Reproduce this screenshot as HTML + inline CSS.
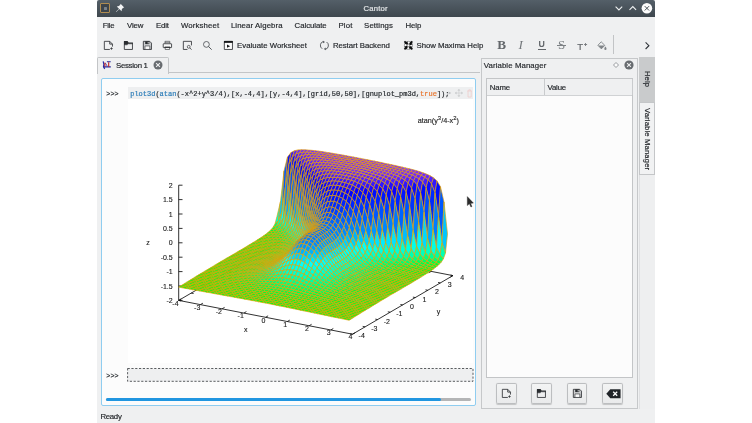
<!DOCTYPE html>
<html><head><meta charset="utf-8"><title>Cantor</title><style>
html,body{margin:0;padding:0;background:#fff}
body{width:752px;height:423px;position:relative;overflow:hidden;font-family:"Liberation Sans",sans-serif}
#root{position:absolute;left:0;top:0;width:752px;height:423px}
#win{position:absolute;left:97px;top:0;width:558px;height:423px;background:#eff0f1;border-radius:2px 2px 0 0}
#tb{position:absolute;left:97px;top:0;width:558px;height:16.6px;background:linear-gradient(#545f68,#3e474e);border-radius:2px 2px 0 0}
#appicon{position:absolute;left:100.4px;top:3px;width:9.5px;height:10px;box-sizing:border-box;border:.8px solid #b08c50;background:#3c444b;border-radius:1px}
#appicon:after{content:"";position:absolute;left:2.4px;top:3.4px;width:3.4px;height:2.4px;background:#7a828a;border-radius:.6px}
.t{will-change:opacity;-webkit-text-stroke:.18px;position:absolute;white-space:nowrap;line-height:12px;font-family:"Liberation Sans",sans-serif}
.r{position:absolute}
.i{position:absolute;overflow:visible}
.v{writing-mode:vertical-rl;line-height:12px}
.f{color:#2a7cb8}.k{color:#e8742c}
.btn{width:20.8px;height:20.6px;box-sizing:border-box;border:.9px solid #bcbec0;border-radius:1.8px;background:linear-gradient(#f3f4f4,#e9eaeb);box-shadow:0 .6px .8px rgba(0,0,0,.18)}
.q0{fill:#00ff12}.q1{fill:#00ff1a}.q2{fill:#00ff28}.q3{fill:#00ff39}.q4{fill:#00ff4c}.q5{fill:#00ff60}.q6{fill:#00ff73}.q7{fill:#00ff83}.q8{fill:#00ff93}.q9{fill:#00ffa3}.qa{fill:#00ffb3}.qb{fill:#00ffbf}.qc{fill:#00ffc8}.qd{fill:#00ffd1}.qe{fill:#00ffda}.qf{fill:#00ffe4}.q10{fill:#00ffed}.q11{fill:#00fff6}.q12{fill:#00ffff}.q13{fill:#00f6ff}.q14{fill:#00edff}.q15{fill:#00e3ff}.q16{fill:#00d9ff}.q17{fill:#00d0ff}.q18{fill:#00c6ff}.q19{fill:#00bcff}.q1a{fill:#00b3ff}.q1b{fill:#00a9ff}.q1c{fill:#009fff}.q1d{fill:#0096ff}.q1e{fill:#008cff}.q1f{fill:#0087ff}.q20{fill:#0082ff}.q21{fill:#007dff}.q22{fill:#0078ff}.q23{fill:#0074ff}.q24{fill:#006fff}.q25{fill:#006aff}.q26{fill:#0065ff}.q27{fill:#005fff}.q28{fill:#0059ff}.q29{fill:#0053ff}.q2a{fill:#004dff}.q2b{fill:#0047ff}.q2c{fill:#0041ff}.q2d{fill:#003bff}.q2e{fill:#0035ff}.q2f{fill:#002fff}.q30{fill:#002aff}.q31{fill:#0025ff}.q32{fill:#0020ff}.q33{fill:#001bff}.q34{fill:#0016ff}.q35{fill:#0011ff}.q36{fill:#000cff}.q37{fill:#0007ff}.q38{fill:#0103ff}.q39{fill:#0705ff}.q3a{fill:#1008ff}.q3b{fill:#1b0cff}.q3c{fill:#2610ff}.q3d{fill:#3114ff}.q3e{fill:#3c18ff}.q3f{fill:#471cff}.q40{fill:#5120ff}.q41{fill:#5b24ff}.q42{fill:#6627ff}.q43{fill:#702bff}.q44{fill:#792eff}.q45{fill:#8331ff}.q46{fill:#8c35ff}.q47{fill:#9638ff}</style></head><body><div id="win"></div>
<div id="tb"></div>
<div id="appicon"></div>
<svg class="i" style="left:115px;top:3px" width="10" height="10" viewBox="0 0 10 10"><path d="M5.6 .8 9.2 4.4 8.3 4.7 6.9 6.1 6.6 8.2 4.3 5.9 1.2 9 .9 8.8 4 5.7 1.8 3.4 3.9 3.1 5.3 1.7z" fill="#f2f3f4"/></svg>
<div class="t" style="left:363.60px;top:2.60px;font-size:7.70px;letter-spacing:0.178px;color:#e6e8ea;">Cantor</div>
<svg class="i" style="left:610px;top:0" width="45" height="17" viewBox="0 0 45 17"><path d="M5.6 6.6 8.9 9.9 12.2 6.6" fill="none" stroke="#eef0f1" stroke-width="1.1"/><path d="M19.5 9.9 22.8 6.6 26.1 9.9" fill="none" stroke="#eef0f1" stroke-width="1.1"/><circle cx="36.9" cy="8.3" r="5.3" fill="#fcfcfc"/><path d="M34.7 6.1 39.1 10.5M39.1 6.1 34.7 10.5" stroke="#3b434a" stroke-width=".9"/></svg>
<div class="t" style="left:102.70px;top:20.30px;font-size:7.80px;letter-spacing:-0.223px;color:#25282c;">File</div>
<div class="t" style="left:127.10px;top:20.30px;font-size:7.80px;letter-spacing:-0.155px;color:#25282c;">View</div>
<div class="t" style="left:156.00px;top:20.30px;font-size:7.80px;letter-spacing:-0.180px;color:#25282c;">Edit</div>
<div class="t" style="left:180.90px;top:20.30px;font-size:7.80px;letter-spacing:0.145px;color:#25282c;">Worksheet</div>
<div class="t" style="left:230.90px;top:20.30px;font-size:7.80px;letter-spacing:0.107px;color:#25282c;">Linear Algebra</div>
<div class="t" style="left:294.60px;top:20.30px;font-size:7.80px;letter-spacing:-0.052px;color:#25282c;">Calculate</div>
<div class="t" style="left:338.40px;top:20.30px;font-size:7.80px;letter-spacing:0.186px;color:#25282c;">Plot</div>
<div class="t" style="left:364.10px;top:20.30px;font-size:7.80px;letter-spacing:0.088px;color:#25282c;">Settings</div>
<div class="t" style="left:405.50px;top:20.30px;font-size:7.80px;letter-spacing:-0.047px;color:#25282c;">Help</div>
<svg class="i" style="left:103.90px;top:40.90px" width="8.8" height="8.8" viewBox="0 0 16 16"><path d="M.6 .6H10.4L15.4 5.6V10.2M10.6 15.4H.6V.6M10.4 .6V5.6H15.4" fill="none" stroke="#2a2d30" stroke-width="1.5"/><path d="M13.6 11.4V16M11.3 13.7H15.9" stroke="#2a2d30" stroke-width="1.3"/></svg>
<svg class="i" style="left:123.65px;top:40.90px" width="8.8" height="8.8" viewBox="0 0 16 16"><path d="M.6 .6V15.4H15.4V3.4" fill="none" stroke="#2a2d30" stroke-width="1.5"/><path d="M0 0H6.4L8.4 2.6H16V5.2H7.6L5.6 7H0z" fill="#2a2d30"/><path d="M.6 7H5.8L7.8 5.2H15.4" fill="none" stroke="#2a2d30" stroke-width=".9"/></svg>
<svg class="i" style="left:143.45px;top:40.90px" width="8.8" height="8.8" viewBox="0 0 16 16"><path d="M.6 .6H12.2L15.4 3.8V15.4H.6z" fill="#8e9194" fill-opacity=".35" stroke="#2a2d30" stroke-width="1.5"/><path d="M4 .6H11.4V5.6H4z" fill="#2a2d30"/><path d="M8.6 1.6H10.2V4.6H8.6z" fill="#f4f5f5"/><path d="M3.6 9H12.4V15.4H3.6z" fill="#fafafa" stroke="#2a2d30" stroke-width="1.1"/></svg>
<svg class="i" style="left:163.05px;top:40.90px" width="8.8" height="8.8" viewBox="0 0 16 16"><path d="M3.6 4.6V.6H12.4V4.6" fill="#fafafa" stroke="#2a2d30" stroke-width="1.1"/><path d="M3.6 2.8H12.4" stroke="#2a2d30" stroke-width=".9"/><path d="M1 5H15Q15.6 5 15.6 5.6V11.4Q15.6 12 15 12H1Q.4 12 .4 11.4V5.6Q.4 5 1 5z" fill="#fafafa" stroke="#2a2d30" stroke-width="1.5"/><path d="M3 10.2H13V12.8H3z" fill="#2a2d30"/><path d="M4 12.6V15.4H12V12.6" fill="#fafafa" stroke="#2a2d30" stroke-width="1.1"/></svg>
<svg class="i" style="left:182.90px;top:40.90px" width="8.8" height="8.8" viewBox="0 0 16 16"><path d="M8 15.4H.6V.6H15.4V8" fill="none" stroke="#2a2d30" stroke-width="1.5"/><circle cx="10.4" cy="10.6" r="2.6" fill="none" stroke="#2a2d30" stroke-width="1.2"/><path d="M12.3 12.5 15.6 15.8" stroke="#2a2d30" stroke-width="1.4"/></svg>
<svg class="i" style="left:202.60px;top:40.90px" width="8.8" height="8.8" viewBox="0 0 16 16"><circle cx="6.2" cy="6.2" r="5.3" fill="none" stroke="#4a4e52" stroke-width="1.5"/><path d="M10 10 15.8 15.8" stroke="#4a4e52" stroke-width="1.7"/></svg>
<svg class="i" style="left:223.90px;top:40.90px" width="8.8" height="8.8" viewBox="0 0 16 16"><path d="M.6 .6H15.4V15.4H.6z" fill="#fcfcfc" stroke="#2a2d30" stroke-width="1.5"/><path d="M0 0H16V3.4H0z" fill="#17191b"/><path d="M5.4 6.4 11.2 9.4 5.4 12.4z" fill="#17191b"/></svg>
<svg class="i" style="left:319.80px;top:40.90px" width="8.8" height="8.8" viewBox="0 0 16 16"><g fill="none" stroke="#4c5054" stroke-width="1.6"><path d="M6.1 .9A7.3 7.3 0 0 0 4 14.1"/><path d="M9.9 15.1A7.3 7.3 0 0 0 12 1.9"/></g><path d="M5.2 -.6 9.2 1.6 5.6 4z" fill="#55595d"/><path d="M10.8 16.6 6.8 14.4 10.4 12z" fill="#55595d"/></svg>
<svg class="i" style="left:403.60px;top:40.90px" width="8.8" height="8.8" viewBox="0 0 16 16"><circle cx="8" cy="8" r="7.3" fill="#fdfdfd" stroke="#606366" stroke-width="1.1"/><circle cx="8" cy="8" r="5" fill="none" stroke="#0c0d0e" stroke-width="4.8" stroke-dasharray="4.363 3.491" transform="rotate(20 8 8)"/><path d="M.8 .8 3.6 3.6M15.2 .8 12.4 3.6M.8 15.2 3.6 12.4M15.2 15.2 12.4 12.4" stroke="#0c0d0e" stroke-width="3.2"/><circle cx="8" cy="8" r="2.5" fill="#fdfdfd" stroke="#1c1d1e" stroke-width="1.1"/></svg>
<div class="t" style="left:237.10px;top:40.40px;font-size:7.80px;letter-spacing:0.008px;color:#25282c;">Evaluate Worksheet</div>
<div class="t" style="left:332.90px;top:40.40px;font-size:7.80px;letter-spacing:-0.047px;color:#25282c;">Restart Backend</div>
<div class="t" style="left:416.50px;top:40.40px;font-size:7.80px;letter-spacing:-0.026px;color:#25282c;">Show Maxima Help</div>
<div class="t" style="left:497.2px;top:36.3px;font:bold 13.2px/18px 'Liberation Serif',serif;color:#63676b;-webkit-text-stroke:0">B</div>
<div class="t" style="left:518.6px;top:36.3px;font:italic 13.2px/18px 'Liberation Serif',serif;color:#74787c;-webkit-text-stroke:0">I</div>
<div class="t" style="left:538.5px;top:38.3px;font:bold 8.8px/12px 'Liberation Sans',sans-serif;color:#63676b;-webkit-text-stroke:0">U</div><div class="r" style="left:537.9px;top:49.2px;width:7.8px;height:.8px;background:#63676b"></div>
<div class="t" style="left:557.9px;top:36.2px;font:13px/18px 'Liberation Serif',serif;color:#7c8084;-webkit-text-stroke:0">S</div><div class="r" style="left:557px;top:45.1px;width:8.8px;height:.8px;background:#7c8084"></div>
<div class="t" style="left:577.2px;top:40.1px;font:9.6px/14px 'Liberation Sans',sans-serif;color:#63676b;-webkit-text-stroke:.2px">T</div><div class="t" style="left:583.9px;top:39.7px;font:bold 5.5px/8px 'Liberation Sans',sans-serif;color:#63676b">+</div>
<svg class="i" style="left:596.6px;top:40.6px" width="10" height="10" viewBox="0 0 10 10"><path d="M4.2 .8 7.8 4.4 4.4 7.8 .9 4.3z" fill="none" stroke="#808488" stroke-width=".9"/><path d="M1 4.6H7.6L4.4 7.9z" fill="#808488"/><path d="M8.4 5.6C9.2 6.7 9.5 7.3 9.5 7.9A1.1 1.1 0 0 1 7.3 7.9C7.3 7.3 7.6 6.7 8.4 5.6z" fill="#808488"/></svg>
<div class="r" style="left:613.1px;top:35.4px;width:.8px;height:19px;background:#c2c4c6"></div>
<svg class="i" style="left:643px;top:41px" width="8" height="10" viewBox="0 0 8 10"><path d="M2.6 1.4 5.9 4.7 2.6 8" fill="none" stroke="#2e3338" stroke-width="1.1"/></svg>
<div class="r" style="left:97px;top:72.4px;width:382.5px;height:.9px;background:#c3c5c7"></div>
<div class="r" style="left:97.4px;top:57.4px;width:69.6px;height:16px;background:#eff0f1;border:.9px solid #c3c5c7;border-bottom:none;border-radius:1.8px 1.8px 0 0"></div>
<svg class="i" style="left:102.2px;top:60.9px" width="9" height="8.2" viewBox="0 0 9 8.2"><g fill="none"><path d="M1.2 .4 1.9 3.4 1.5 5.6 2.7 7.9" stroke="#2b2ba4" stroke-width="1.25"/><path d="M4.9 .8H8.7M1.6 5.9H8.8" stroke="#24249a" stroke-width="1.05"/><path d="M3.2 1.8 5.4 5.4" stroke="#4a3aa8" stroke-width=".9"/><path d="M2.9 1.8V5.4M6.7 1.2V5.8" stroke="#c0201e" stroke-width="1.1"/></g></svg>
<div class="t" style="left:116.00px;top:60.40px;font-size:7.80px;letter-spacing:-0.294px;color:#25282c;">Session 1</div>
<svg class="i" style="left:152.4px;top:59.4px" width="12" height="12" viewBox="0 0 12 12"><circle cx="6" cy="6" r="4.5" fill="#686c70"/><path d="M4.1 4.1 7.9 7.9M7.9 4.1 4.1 7.9" stroke="#eff0f1" stroke-width="1.05"/></svg>
<div class="r" style="left:100.9px;top:78.3px;width:375.2px;height:327.4px;background:#fcfcfc;border:1px solid #8fcdf0;border-radius:2px;box-sizing:border-box"></div>
<div class="r" style="left:128px;top:99.2px;width:345px;height:264px;background:#fff"></div>
<div class="r" style="left:128px;top:86.5px;width:345px;height:12.7px;background:#eeeff0"></div>
<div class="t" style="left:106.3px;top:87.6px;font-size:6.8px;letter-spacing:.05px;color:#24282c;font-family:'Liberation Mono',monospace;">&gt;&gt;&gt;</div>
<div class="t" id="cmd" style="left:130.2px;top:87.6px;font-size:7.012px;color:#24282c;font-family:'Liberation Mono',monospace;"><span class="f">plot3d</span>(<span class="f">atan</span>(-x^2+y^3/4),[x,-4,4],[y,-4,4],[grid,50,50],[gnuplot_pm3d,<span class="k">true</span>]);</div>
<svg class="i" style="left:446px;top:88px" width="28" height="10" viewBox="0 0 28 10" opacity=".55"><path d="M2.6 3.4 5.4 5 2.6 6.6z" fill="#9a9da0"/><path d="M12.9 1.6V8.4M9.5 5H16.3M12.9 1.2 11.9 2.4H13.9zM12.9 8.8 11.9 7.6H13.9zM9.1 5 10.3 4V6zM16.7 5 15.5 4V6z" stroke="#b4b6b8" stroke-width=".7" fill="#b4b6b8"/><path d="M21.2 3H26M22 3V9H25.2V3M22.8 3V1.8H24.4V3" fill="none" stroke="#f0b4b0" stroke-width=".8"/></svg>
<div class="t" style="left:106.3px;top:370.1px;font-size:6.8px;letter-spacing:.05px;color:#24282c;font-family:'Liberation Mono',monospace;">&gt;&gt;&gt;</div>
<svg class="i" style="left:126px;top:367px" width="350" height="16" viewBox="0 0 350 16"><rect x="1.6" y="1.5" width="345.4" height="12.8" fill="#eeeff0" stroke="#33373b" stroke-width=".8" stroke-dasharray="2.2 1.6"/></svg>
<div class="r" style="left:105.6px;top:397.6px;width:365.5px;height:3.1px;border-radius:1.6px;background:#b4b5b6"></div>
<div class="r" style="left:105.6px;top:397.5px;width:335.6px;height:3.3px;border-radius:1.7px;background:#2196e0"></div>
<svg class="i" style="left:0;top:0" width="752" height="423" viewBox="0 0 752 423"><defs><filter id="sb" x="-2%" y="-2%" width="104%" height="104%"><feGaussianBlur stdDeviation="3.2"/></filter></defs>
<g stroke="#0d0d0d" stroke-width="0.85" fill="none" stroke-linecap="butt">
<path d="M178.7 300.4L352.5 334.2L452.9 275.6L279.1 241.8z"/>
<line x1="178.7" y1="300.4" x2="178.7" y2="185.2"/>
<line x1="178.7" y1="300.4" x2="182.5" y2="300.4"/>
<line x1="178.7" y1="286.0" x2="182.5" y2="286.0"/>
<line x1="178.7" y1="271.6" x2="182.5" y2="271.6"/>
<line x1="178.7" y1="257.2" x2="182.5" y2="257.2"/>
<line x1="178.7" y1="242.8" x2="182.5" y2="242.8"/>
<line x1="178.7" y1="228.4" x2="182.5" y2="228.4"/>
<line x1="178.7" y1="214.0" x2="182.5" y2="214.0"/>
<line x1="178.7" y1="199.6" x2="182.5" y2="199.6"/>
<line x1="178.7" y1="185.2" x2="182.5" y2="185.2"/>
<line x1="178.7" y1="300.4" x2="181.2" y2="298.9"/>
<line x1="279.1" y1="241.8" x2="276.5" y2="243.2"/>
<line x1="352.5" y1="334.2" x2="350.2" y2="333.8"/>
<line x1="178.7" y1="300.4" x2="181.0" y2="300.9"/>
<line x1="200.4" y1="304.6" x2="202.9" y2="303.2"/>
<line x1="300.8" y1="246.0" x2="298.3" y2="247.5"/>
<line x1="365.1" y1="326.9" x2="362.7" y2="326.4"/>
<line x1="191.2" y1="293.1" x2="193.6" y2="293.5"/>
<line x1="222.1" y1="308.8" x2="224.6" y2="307.4"/>
<line x1="322.5" y1="250.2" x2="320.0" y2="251.7"/>
<line x1="377.6" y1="319.6" x2="375.3" y2="319.1"/>
<line x1="203.8" y1="285.7" x2="206.1" y2="286.2"/>
<line x1="243.9" y1="313.1" x2="246.4" y2="311.6"/>
<line x1="344.3" y1="254.5" x2="341.8" y2="255.9"/>
<line x1="390.2" y1="312.2" x2="387.8" y2="311.8"/>
<line x1="216.3" y1="278.4" x2="218.7" y2="278.9"/>
<line x1="265.6" y1="317.3" x2="268.1" y2="315.8"/>
<line x1="366.0" y1="258.7" x2="363.5" y2="260.2"/>
<line x1="402.7" y1="304.9" x2="400.4" y2="304.5"/>
<line x1="228.9" y1="271.1" x2="231.2" y2="271.5"/>
<line x1="287.3" y1="321.5" x2="289.8" y2="320.1"/>
<line x1="387.7" y1="262.9" x2="385.2" y2="264.4"/>
<line x1="415.3" y1="297.6" x2="412.9" y2="297.1"/>
<line x1="241.4" y1="263.8" x2="243.8" y2="264.2"/>
<line x1="309.1" y1="325.8" x2="311.6" y2="324.3"/>
<line x1="409.5" y1="267.2" x2="407.0" y2="268.6"/>
<line x1="427.8" y1="290.3" x2="425.5" y2="289.8"/>
<line x1="254.0" y1="256.4" x2="256.3" y2="256.9"/>
<line x1="330.8" y1="330.0" x2="333.3" y2="328.5"/>
<line x1="431.2" y1="271.4" x2="428.7" y2="272.8"/>
<line x1="440.4" y1="282.9" x2="438.0" y2="282.5"/>
<line x1="266.5" y1="249.1" x2="268.9" y2="249.6"/>
<line x1="352.5" y1="334.2" x2="355.1" y2="332.8"/>
<line x1="452.9" y1="275.6" x2="450.4" y2="277.1"/>
<line x1="452.9" y1="275.6" x2="450.6" y2="275.1"/>
<line x1="279.1" y1="241.8" x2="281.4" y2="242.2"/>
</g>
<g transform="scale(.1)" filter="url(#sb)" stroke="#e69f00" stroke-width="6.4" stroke-opacity="1.0" stroke-linejoin="round">
<path class="qd" d="M2750 2238l35-32 20-192-35 149z"/>
<path class="q18" d="M2785 2206l35-90 20-407-35 305z"/>
<path class="q6" d="M2730 2273l35-10 20-57-35 32z"/>
<path class="q28" d="M2820 2116l35-250 20-296-35 139z"/>
<path class="qa" d="M2765 2263l35-24 20-123-35 90z"/>
<path class="q36" d="M2855 1866l34-222 21-119-35 45z"/>
<path class="q4" d="M2710 2297l35-3 20-31-35 10z"/>
<path class="q13" d="M2800 2239l35-60 20-313-35 250z"/>
<path class="q3d" d="M2889 1644l35-75 20-62-34 18z"/>
<path class="q6" d="M2745 2294l35-9 20-46-35 24z"/>
<path class="q21" d="M2835 2179l34-169 20-366-34 222z"/>
<path class="q40" d="M2924 1569l35-29 20-41-35 8z"/>
<path class="q3" d="M2690 2316l35 0 20-22-35 3z"/>
<path class="q9" d="M2780 2285l35-19 20-87-35 60z"/>
<path class="q30" d="M2869 2010l35-268 20-173-35 75z"/>
<path class="q42" d="M2959 1540l35-12 20-31-35 2z"/>
<path class="q4" d="M2725 2316l35-3 20-28-35 9z"/>
<path class="qf" d="M2815 2266l34-44 20-212-34 169z"/>
<path class="q3a" d="M2904 1742l35-121 20-81-35 29z"/>
<path class="q3" d="M2670 2333l35 1 20-18-35 0z"/>
<path class="q43" d="M2994 1528l35-5 20-25-35-1z"/>
<path class="q6" d="M2760 2313l34-7 21-40-35 19z"/>
<path class="q1b" d="M2849 2222l35-113 20-367-35 268z"/>
<path class="q3f" d="M2939 1621l35-44 20-49-35 12z"/>
<path class="q3" d="M2705 2334l35 0 20-21-35 3z"/>
<path class="q43" d="M3029 1523l34-1 20-22-34-2z"/>
<path class="q8" d="M2794 2306l35-16 20-68-34 44z"/>
<path class="q2a" d="M2884 2109l35-248 20-240-35 121z"/>
<path class="q3" d="M2650 2348l35 2 20-16-35-1z"/>
<path class="q41" d="M2974 1577l35-18 20-36-35 5z"/>
<path class="q4" d="M2740 2334l34-2 20-26-34 7z"/>
<path class="q44" d="M3063 1522l35 1 20-20-35-3z"/>
<path class="qc" d="M2829 2290l35-34 20-147-35 113z"/>
<path class="q36" d="M2919 1861l35-176 20-108-35 44z"/>
<path class="q3" d="M2685 2350l35 2 20-18-35 0z"/>
<path class="q42" d="M3009 1559l34-8 20-29-34 1z"/>
<path class="q5" d="M2774 2332l35-7 20-35-35 16z"/>
<path class="q44" d="M3098 1523l35 3 20-19-35-4z"/>
<path class="q16" d="M2864 2256l35-82 20-313-35 248z"/>
<path class="q2" d="M2630 2362l35 3 20-15-35-2z"/>
<path class="q3d" d="M2954 1685l34-66 21-60-35 18z"/>
<path class="q3" d="M2720 2352l34 0 20-20-34 2z"/>
<path class="q43" d="M3043 1551l35-4 20-24-35-1z"/>
<path class="q7" d="M2809 2325l35-14 20-55-35 34z"/>
<path class="q44" d="M3133 1526l35 3 20-18-35-4z"/>
<path class="q25" d="M2899 2174l35-197 20-292-35 176z"/>
<path class="q3" d="M2665 2365l34 3 21-16-35-2z"/>
<path class="q40" d="M2988 1619l35-27 20-41-34 8z"/>
<path class="q4" d="M2754 2352l35-2 20-25-35 7z"/>
<path class="q43" d="M3078 1547l35 0 20-21-35-3z"/>
<path class="qb" d="M2844 2311l35-28 20-109-35 82z"/>
<path class="q45" d="M3168 1529l34 4 21-17-35-5z"/>
<path class="q2" d="M2610 2375l35 4 20-14-35-3z"/>
<path class="q32" d="M2934 1977l34-216 20-142-34 66z"/>
<path class="q3" d="M2699 2368l35 1 20-17-34 0z"/>
<path class="q41" d="M3023 1592l35-13 20-32-35 4z"/>
<path class="q5" d="M2789 2350l35-6 20-33-35 14z"/>
<path class="q44" d="M3113 1547l35 2 20-20-35-3z"/>
<path class="q13" d="M2879 2283l34-63 21-243-35 197z"/>
<path class="q45" d="M3202 1533l35 5 20-16-34-6z"/>
<path class="q2" d="M2645 2379l34 3 20-14-34-3z"/>
<path class="q3a" d="M2968 1761l35-94 20-75-35 27z"/>
<path class="q4" d="M2734 2369l35 0 20-19-35 2z"/>
<path class="q42" d="M3058 1579l35-5 20-27-35 0z"/>
<path class="q7" d="M2824 2344l35-13 20-48-35 28z"/>
<path class="q44" d="M3148 1549l34 3 20-19-34-4z"/>
<path class="q2" d="M2590 2388l34 5 21-14-35-4z"/>
<path class="q20" d="M2913 2220l35-151 20-308-34 216z"/>
<path class="q45" d="M3237 1538l35 5 20-16-35-5z"/>
<path class="q3" d="M2679 2382l35 3 20-16-35-1z"/>
<path class="q3e" d="M3003 1667l35-39 20-49-35 13z"/>
<path class="q4" d="M2769 2369l35-2 20-23-35 6z"/>
<path class="q43" d="M3093 1574l35-1 20-24-35-2z"/>
<path class="qa" d="M2859 2331l34-25 20-86-34 63z"/>
<path class="q44" d="M3182 1552l35 4 20-18-35-5z"/>
<path class="q2" d="M2624 2393l35 3 20-14-34-3z"/>
<path class="q2e" d="M2948 2069l35-223 20-179-35 94z"/>
<path class="q45" d="M3272 1543l35 6 20-16-35-6z"/>
<path class="q3" d="M2714 2385l35 1 20-17-35 0z"/>
<path class="q40" d="M3038 1628l35-18 20-36-35 5z"/>
<path class="q5" d="M2804 2367l35-6 20-30-35 13z"/>
<path class="q43" d="M3128 1573l34 0 20-21-34-3z"/>
<path class="q2" d="M2570 2401l34 5 20-13-34-5z"/>
<path class="q10" d="M2893 2306l35-52 20-185-35 151z"/>
<path class="q44" d="M3217 1556l35 4 20-17-35-5z"/>
<path class="q2" d="M2659 2396l35 4 20-15-35-3z"/>
<path class="q38" d="M2983 1846l35-126 20-92-35 39z"/>
<path class="q45" d="M3307 1549l35 5 20-15-35-6z"/>
<path class="q4" d="M2749 2386l35 0 20-19-35 2z"/>
<path class="q42" d="M3073 1610l34-8 21-29-35 1z"/>
<path class="q7" d="M2839 2361l34-11 20-44-34 25z"/>
<path class="q44" d="M3162 1573l35 3 20-20-35-4z"/>
<path class="q2" d="M2604 2406l35 4 20-14-35-3z"/>
<path class="q1c" d="M2928 2254l35-118 20-290-35 223z"/>
<path class="q45" d="M3252 1560l35 5 20-16-35-6z"/>
<path class="q3" d="M2694 2400l35 2 20-16-35-1z"/>
<path class="q3d" d="M3018 1720l35-53 20-57-35 18z"/>
<path class="q45" d="M3342 1554l34 6 20-15-34-6z"/>
<path class="q4" d="M2784 2386l34-2 21-23-35 6z"/>
<path class="q42" d="M3107 1602l35-3 20-26-34 0z"/>
<path class="q2" d="M2550 2414l34 5 20-13-34-5z"/>
<path class="qa" d="M2873 2350l35-23 20-73-35 52z"/>
<path class="q44" d="M3197 1576l35 3 20-19-35-4z"/>
<path class="q2" d="M2639 2410l35 3 20-13-35-4z"/>
<path class="q29" d="M2963 2136l35-205 20-211-35 126z"/>
<path class="q45" d="M3287 1565l35 6 20-17-35-5z"/>
<path class="q3" d="M2729 2402l35 1 20-17-35 0z"/>
<path class="q3f" d="M3053 1667l34-24 20-41-34 8z"/>
<path class="q45" d="M3376 1560l35 6 20-15-35-6z"/>
<path class="q5" d="M2818 2384l35-6 20-28-34 11z"/>
<path class="q43" d="M3142 1599l35 0 20-23-35-3z"/>
<path class="q2" d="M2584 2419l35 4 20-13-35-4z"/>
<path class="qf" d="M2908 2327l35-46 20-145-35 118z"/>
<path class="q44" d="M3232 1579l35 4 20-18-35-5z"/>
<path class="q3" d="M2674 2413l35 3 20-14-35-2z"/>
<path class="q34" d="M2998 1931l35-152 20-112-35 53z"/>
<path class="q45" d="M3322 1571l34 5 20-16-34-6z"/>
<path class="q4" d="M2764 2403l34 0 20-19-34 2z"/>
<path class="q41" d="M3087 1643l35-11 20-33-35 3z"/>
<path class="q45" d="M3411 1566l35 6 20-14-35-7z"/>
<path class="q2" d="M2529 2426l35 5 20-12-34-5z"/>
<path class="q7" d="M2853 2378l35-11 20-40-35 23z"/>
<path class="q43" d="M3177 1599l35 1 20-21-35-3z"/>
<path class="q2" d="M2619 2423l35 4 20-14-35-3z"/>
<path class="q19" d="M2943 2281l35-96 20-254-35 205z"/>
<path class="q44" d="M3267 1583l34 5 21-17-35-6z"/>
<path class="q3" d="M2709 2416l35 2 20-15-35-1z"/>
<path class="q3b" d="M3033 1779l34-69 20-67-34 24z"/>
<path class="q45" d="M3356 1576l35 6 20-16-35-6z"/>
<path class="q5" d="M2798 2403l35-3 20-22-35 6z"/>
<path class="q42" d="M3122 1632l35-6 20-27-35 0z"/>
<path class="q45" d="M3446 1572l35 7 20-15-35-6z"/>
<path class="q2" d="M2564 2431l35 5 20-13-35-4z"/>
<path class="qa" d="M2888 2367l35-22 20-64-35 46z"/>
<path class="q44" d="M3212 1600l35 3 20-20-35-4z"/>
<path class="q2" d="M2654 2427l35 3 20-14-35-3z"/>
<path class="q26" d="M2978 2185l34-179 21-227-35 152z"/>
<path class="q44" d="M3301 1588l35 5 20-17-34-5z"/>
<path class="q3" d="M2744 2418l34 1 20-16-34 0z"/>
<path class="q3e" d="M3067 1710l35-32 20-46-35 11z"/>
<path class="q45" d="M3391 1582l35 6 20-16-35-6z"/>
<path class="q2" d="M2509 2439l35 5 20-13-35-5z"/>
<path class="q6" d="M2833 2400l35-6 20-27-35 11z"/>
<path class="q42" d="M3157 1626l35-1 20-25-35-1z"/>
<path class="q45" d="M3481 1579l35 6 20-14-35-7z"/>
<path class="q2" d="M2599 2436l35 4 20-13-35-4z"/>
<path class="qe" d="M2923 2345l35-41 20-119-35 96z"/>
<path class="q44" d="M3247 1603l34 4 20-19-34-5z"/>
<path class="q3" d="M2689 2430l34 3 21-15-35-2z"/>
<path class="q31" d="M3012 2006l35-166 20-130-34 69z"/>
<path class="q45" d="M3336 1593l35 5 20-16-35-6z"/>
<path class="q4" d="M2778 2419l35 0 20-19-35 3z"/>
<path class="q40" d="M3102 1678l35-15 20-37-35 6z"/>
<path class="q45" d="M3426 1588l35 6 20-15-35-7z"/>
<path class="q2" d="M2544 2444l35 4 20-12-35-5z"/>
<path class="q7" d="M2868 2394l35-12 20-37-35 22z"/>
<path class="q43" d="M3192 1625l35 0 20-22-35-3z"/>
<path class="q45" d="M3516 1585l34 7 20-15-34-6z"/>
<path class="q2" d="M2634 2440l35 3 20-13-35-3z"/>
<path class="q16" d="M2958 2304l34-84 20-214-34 179z"/>
<path class="q44" d="M3281 1607l35 4 20-18-35-5z"/>
<path class="q3" d="M2723 2433l35 1 20-15-34-1z"/>
<path class="q39" d="M3047 1840l35-85 20-77-35 32z"/>
<path class="q45" d="M3371 1598l35 6 20-16-35-6z"/>
<path class="q2" d="M2489 2451l35 5 20-12-35-5z"/>
<path class="q5" d="M2813 2419l35-4 20-21-35 6z"/>
<path class="q41" d="M3137 1663l35-8 20-30-35 1z"/>
<path class="q45" d="M3461 1594l34 6 21-15-35-6z"/>
<path class="q2" d="M2579 2448l35 5 20-13-35-4z"/>
<path class="qa" d="M2903 2382l35-21 20-57-35 41z"/>
<path class="q43" d="M3227 1625l34 3 20-21-34-4z"/>
<path class="q45" d="M3550 1592l35 6 20-14-35-7z"/>
<path class="q3" d="M2669 2443l34 4 20-14-34-3z"/>
<path class="q22" d="M2992 2220l35-154 20-226-35 166z"/>
<path class="q44" d="M3316 1611l35 5 20-18-35-5z"/>
<path class="q4" d="M2758 2434l35 1 20-16-35 0z"/>
<path class="q3c" d="M3082 1755l35-40 20-52-35 15z"/>
<path class="q45" d="M3406 1604l35 6 20-16-35-6z"/>
<path class="q2" d="M2524 2456l35 5 20-13-35-4z"/>
<path class="q6" d="M2848 2415l35-6 20-27-35 12z"/>
<path class="q42" d="M3172 1655l34-3 21-27-35 0z"/>
<path class="q45" d="M3495 1600l35 7 20-15-34-7z"/>
<path class="q2" d="M2614 2453l35 3 20-13-35-3z"/>
<path class="qe" d="M2938 2361l34-39 20-102-34 84z"/>
<path class="q43" d="M3261 1628l35 3 20-20-35-4z"/>
<path class="q45" d="M3585 1598l35 7 20-14-35-7z"/>
<path class="q3" d="M2703 2447l35 2 20-15-35-1z"/>
<path class="q2e" d="M3027 2066l35-166 20-145-35 85z"/>
<path class="q44" d="M3351 1616l35 5 20-17-35-6z"/>
<path class="q2" d="M2469 2463l35 5 20-12-35-5z"/>
<path class="q4" d="M2793 2435l35-1 20-19-35 4z"/>
<path class="q3f" d="M3117 1715l35-20 20-40-35 8z"/>
<path class="q45" d="M3441 1610l34 6 20-16-34-6z"/>
<path class="q2" d="M2559 2461l35 4 20-12-35-5z"/>
<path class="q7" d="M2883 2409l34-12 21-36-35 21z"/>
<path class="q42" d="M3206 1652l35 0 20-24-34-3z"/>
<path class="q45" d="M3530 1607l35 6 20-15-35-6z"/>
<path class="q2" d="M2649 2456l34 4 20-13-34-4z"/>
<path class="q15" d="M2972 2322l35-76 20-180-35 154z"/>
<path class="q44" d="M3296 1631l35 4 20-19-35-5z"/>
<path class="q45" d="M3620 1605l35 7 20-15-35-6z"/>
<path class="q3" d="M2738 2449l35 1 20-15-35-1z"/>
<path class="q36" d="M3062 1900l35-97 20-88-35 40z"/>
<path class="q44" d="M3386 1621l34 6 21-17-35-6z"/>
<path class="q2" d="M2504 2468l35 5 20-12-35-5z"/>
<path class="q5" d="M2828 2434l35-4 20-21-35 6z"/>
<path class="q40" d="M3152 1695l34-10 20-33-34 3z"/>
<path class="q45" d="M3475 1616l35 6 20-15-35-7z"/>
<path class="q2" d="M2594 2465l34 4 21-13-35-3z"/>
<path class="qa" d="M2917 2397l35-22 20-53-34 39z"/>
<path class="q43" d="M3241 1652l35 1 20-22-35-3z"/>
<path class="q45" d="M3565 1613l35 7 20-15-35-7z"/>
<path class="q3" d="M2683 2460l35 2 20-13-35-2z"/>
<path class="q20" d="M3007 2246l35-134 20-212-35 166z"/>
<path class="q44" d="M3331 1635l35 5 20-19-35-5z"/>
<path class="q2" d="M2449 2475l35 5 20-12-35-5z"/>
<path class="q45" d="M3655 1612l34 7 20-15-34-7z"/>
<path class="q4" d="M2773 2450l35 0 20-16-35 1z"/>
<path class="q3b" d="M3097 1803l34-48 21-60-35 20z"/>
<path class="q44" d="M3420 1627l35 6 20-17-34-6z"/>
<path class="q2" d="M2539 2473l35 4 20-12-35-4z"/>
<path class="q6" d="M2863 2430l34-7 20-26-34 12z"/>
<path class="q41" d="M3186 1685l35-4 20-29-35 0z"/>
<path class="q45" d="M3510 1622l35 7 20-16-35-6z"/>
<path class="q2" d="M2628 2469l35 4 20-13-34-4z"/>
<path class="qe" d="M2952 2375l35-39 20-90-35 76z"/>
<path class="q43" d="M3276 1653l35 3 20-21-35-4z"/>
<path class="q45" d="M3600 1620l35 7 20-15-35-7z"/>
<path class="q3" d="M2718 2462l35 2 20-14-35-1z"/>
<path class="q2c" d="M3042 2112l35-157 20-152-35 97z"/>
<path class="q44" d="M3366 1640l34 5 20-18-34-6z"/>
<path class="q2" d="M2484 2480l35 5 20-12-35-5z"/>
<path class="q45" d="M3689 1619l35 7 20-15-35-7z"/>
<path class="q5" d="M2808 2450l34-2 21-18-35 4z"/>
<path class="q3d" d="M3131 1755l35-25 20-45-34 10z"/>
<path class="q44" d="M3455 1633l35 6 20-17-35-6z"/>
<path class="q2" d="M2574 2477l34 5 20-13-34-4z"/>
<path class="q8" d="M2897 2423l35-14 20-34-35 22z"/>
<path class="q41" d="M3221 1681l35-1 20-27-35-1z"/>
<path class="q45" d="M3545 1629l35 7 20-16-35-7z"/>
<path class="q3" d="M2663 2473l35 3 20-14-35-2z"/>
<path class="q15" d="M2987 2336l35-70 20-154-35 134z"/>
<path class="q43" d="M3311 1656l35 4 20-20-35-5z"/>
<path class="q1" d="M2429 2487l35 5 20-12-35-5z"/>
<path class="q45" d="M3635 1627l34 7 20-15-34-7z"/>
<path class="q4" d="M2753 2464l35 1 20-15-35 0z"/>
<path class="q34" d="M3077 1955l34-105 20-95-34 48z"/>
<path class="q44" d="M3400 1645l35 6 20-18-35-6z"/>
<path class="q2" d="M2519 2485l34 4 21-12-35-4z"/>
<path class="q45" d="M3724 1626l35 7 20-15-35-7z"/>
<path class="q5" d="M2842 2448l35-5 20-20-34 7z"/>
<path class="q3f" d="M3166 1730l35-13 20-36-35 4z"/>
<path class="q44" d="M3490 1639l35 6 20-16-35-7z"/>
<path class="q2" d="M2608 2482l35 3 20-12-35-4z"/>
<path class="qa" d="M2932 2409l35-22 20-51-35 39z"/>
<path class="q42" d="M3256 1680l35 0 20-24-35-3z"/>
<path class="q45" d="M3580 1636l34 7 21-16-35-7z"/>
<path class="q3" d="M2698 2476l35 2 20-14-35-2z"/>
<path class="q1f" d="M3022 2266l35-120 20-191-35 157z"/>
<path class="q43" d="M3346 1660l34 5 20-20-34-5z"/>
<path class="q2" d="M2464 2492l35 5 20-12-35-5z"/>
<path class="q45" d="M3669 1634l35 7 20-15-35-7z"/>
<path class="q4" d="M2788 2465l34-1 20-16-34 2z"/>
<path class="q39" d="M3111 1850l35-55 20-65-35 25z"/>
<path class="q44" d="M3435 1651l35 6 20-18-35-6z"/>
<path class="q2" d="M2553 2489l35 5 20-12-34-5z"/>
<path class="q45" d="M3759 1633l35 7 20-15-35-7z"/>
<path class="q7" d="M2877 2443l35-8 20-26-35 14z"/>
<path class="q40" d="M3201 1717l35-6 20-31-35 1z"/>
<path class="q44" d="M3525 1645l35 7 20-16-35-7z"/>
<path class="q3" d="M2643 2485l35 4 20-13-35-3z"/>
<path class="qe" d="M2967 2387l35-39 20-82-35 70z"/>
<path class="q42" d="M3291 1680l34 3 21-23-35-4z"/>
<path class="q1" d="M2409 2499l35 5 20-12-35-5z"/>
<path class="q45" d="M3614 1643l35 7 20-16-34-7z"/>
<path class="q3" d="M2733 2478l35 1 20-14-35-1z"/>
<path class="q29" d="M3057 2146l34-144 20-152-34 105z"/>
<path class="q43" d="M3380 1665l35 5 20-19-35-6z"/>
<path class="q2" d="M2499 2497l34 5 20-13-34-4z"/>
<path class="q45" d="M3704 1641l35 7 20-15-35-7z"/>
<path class="q5" d="M2822 2464l35-2 20-19-35 5z"/>
<path class="q3c" d="M3146 1795l35-29 20-49-35 13z"/>
<path class="q44" d="M3470 1657l35 6 20-18-35-6z"/>
<path class="q2" d="M2588 2494l35 4 20-13-35-3z"/>
<path class="q45" d="M3794 1640l35 8 20-15-35-8z"/>
<path class="q8" d="M2912 2435l35-15 20-33-35 22z"/>
<path class="q41" d="M3236 1711l35-2 20-29-35 0z"/>
<path class="q44" d="M3560 1652l34 7 20-16-34-7z"/>
<path class="q3" d="M2678 2489l35 2 20-13-35-2z"/>
<path class="q14" d="M3002 2348l34-68 21-134-35 120z"/>
<path class="q42" d="M3325 1683l35 4 20-22-34-5z"/>
<path class="q2" d="M2444 2504l35 5 20-12-35-5z"/>
<path class="q45" d="M3649 1650l35 7 20-16-35-7z"/>
<path class="q4" d="M2768 2479l34 0 20-15-34 1z"/>
<path class="q32" d="M3091 2002l35-106 20-101-35 55z"/>
<path class="q43" d="M3415 1670l35 6 20-19-35-6z"/>
<path class="q2" d="M2533 2502l35 4 20-12-35-5z"/>
<path class="q45" d="M3739 1648l35 8 20-16-35-7z"/>
<path class="q6" d="M2857 2462l35-6 20-21-35 8z"/>
<path class="q3e" d="M3181 1766l35-15 20-40-35 6z"/>
<path class="q44" d="M3505 1663l35 7 20-18-35-7z"/>
<path class="q2" d="M2623 2498l35 3 20-12-35-4z"/>
<path class="q45" d="M3829 1648l34 7 20-15-34-7z"/>
<path class="qb" d="M2947 2420l35-24 20-48-35 39z"/>
<path class="q41" d="M3271 1709l34 0 20-26-34-3z"/>
<path class="q1" d="M2389 2510l35 6 20-12-35-5z"/>
<path class="q44" d="M3594 1659l35 7 20-16-35-7z"/>
<path class="q3" d="M2713 2491l34 2 21-14-35-1z"/>
<path class="q1e" d="M3036 2280l35-109 20-169-34 144z"/>
<path class="q43" d="M3360 1687l35 4 20-21-35-5z"/>
<path class="q2" d="M2479 2509l34 5 20-12-34-5z"/>
<path class="q45" d="M3684 1657l35 7 20-16-35-7z"/>
<path class="q5" d="M2802 2479l35-1 20-16-35 2z"/>
<path class="q37" d="M3126 1896l35-59 20-71-35 29z"/>
<path class="q44" d="M3450 1676l35 6 20-19-35-6z"/>
<path class="q2" d="M2568 2506l35 4 20-12-35-4z"/>
<path class="q45" d="M3774 1656l34 7 21-15-35-8z"/>
<path class="q7" d="M2892 2456l35-10 20-26-35 15z"/>
<path class="q3f" d="M3216 1751l35-8 20-34-35 2z"/>
<path class="q44" d="M3540 1670l34 7 20-18-34-7z"/>
<path class="q3" d="M2658 2501l35 3 20-13-35-2z"/>
<path class="q45" d="M3863 1655l35 8 20-16-35-7z"/>
<path class="qf" d="M2982 2396l34-41 20-75-34 68z"/>
<path class="q42" d="M3305 1709l35 2 20-24-35-4z"/>
<path class="q2" d="M2424 2516l34 5 21-12-35-5z"/>
<path class="q44" d="M3629 1666l35 7 20-16-35-7z"/>
<path class="q4" d="M2747 2493l35 0 20-14-34 0z"/>
<path class="q28" d="M3071 2171l35-131 20-144-35 106z"/>
<path class="q43" d="M3395 1691l35 5 20-20-35-6z"/>
<path class="q2" d="M2513 2514l35 4 20-12-35-4z"/>
<path class="q45" d="M3719 1664l35 8 20-16-35-8z"/>
<path class="q5" d="M2837 2478l35-4 20-18-35 6z"/>
<path class="q3b" d="M3161 1837l35-32 20-54-35 15z"/>
<path class="q44" d="M3485 1682l34 6 21-18-35-7z"/>
<path class="q2" d="M2603 2510l35 3 20-12-35-3z"/>
<path class="q45" d="M3808 1663l35 8 20-16-34-7z"/>
<path class="q9" d="M2927 2446l35-17 20-33-35 24z"/>
<path class="q40" d="M3251 1743l34-3 20-31-34 0z"/>
<path class="q1" d="M2369 2522l35 5 20-11-35-6z"/>
<path class="q44" d="M3574 1677l35 7 20-18-35-7z"/>
<path class="q3" d="M2693 2504l34 2 20-13-34-2z"/>
<path class="q45" d="M3898 1663l35 8 20-16-35-8z"/>
<path class="q15" d="M3016 2355l35-67 20-117-35 109z"/>
<path class="q42" d="M3340 1711l35 4 20-24-35-4z"/>
<path class="q2" d="M2458 2521l35 4 20-11-34-5z"/>
<path class="q44" d="M3664 1673l35 8 20-17-35-7z"/>
<path class="q4" d="M2782 2493l35 0 20-15-35 1z"/>
<path class="q30" d="M3106 2040l35-101 20-102-35 59z"/>
<path class="q43" d="M3430 1696l35 6 20-20-35-6z"/>
<path class="q2" d="M2548 2518l35 4 20-12-35-4z"/>
<path class="q45" d="M3754 1672l34 8 20-17-34-7z"/>
<path class="q6" d="M2872 2474l35-8 20-20-35 10z"/>
<path class="q3d" d="M3196 1805l34-18 21-44-35 8z"/>
<path class="q44" d="M3519 1688l35 7 20-18-34-7z"/>
<path class="q3" d="M2638 2513l35 3 20-12-35-3z"/>
<path class="q45" d="M3843 1671l35 8 20-16-35-8z"/>
<path class="qc" d="M2962 2429l34-27 20-47-34 41z"/>
<path class="q40" d="M3285 1740l35 0 20-29-35-2z"/>
<path class="q2" d="M2404 2527l34 6 20-12-34-5z"/>
<path class="q44" d="M3609 1684l35 7 20-18-35-7z"/>
<path class="q4" d="M2727 2506l35 1 20-14-35 0z"/>
<path class="q45" d="M3933 1671l35 8 20-16-35-8z"/>
<path class="q1d" d="M3051 2288l35-101 20-147-35 131z"/>
<path class="q42" d="M3375 1715l35 5 20-24-35-5z"/>
<path class="q2" d="M2493 2525l35 5 20-12-35-4z"/>
<path class="q44" d="M3699 1681l34 8 21-17-35-8z"/>
<path class="q5" d="M2817 2493l35-3 20-16-35 4z"/>
<path class="q36" d="M3141 1939l35-60 20-74-35 32z"/>
<path class="q43" d="M3465 1702l34 7 20-21-34-6z"/>
<path class="q2" d="M2583 2522l35 4 20-13-35-3z"/>
<path class="q45" d="M3788 1680l35 8 20-17-35-8z"/>
<path class="q8" d="M2907 2466l34-12 21-25-35 17z"/>
<path class="q3e" d="M3230 1787l35-9 20-38-34 3z"/>
<path class="q1" d="M2349 2534l35 5 20-12-35-5z"/>
<path class="q44" d="M3554 1695l35 8 20-19-35-7z"/>
<path class="q3" d="M2673 2516l34 3 20-13-34-2z"/>
<path class="q45" d="M3878 1679l35 8 20-16-35-8z"/>
<path class="q10" d="M2996 2402l35-43 20-71-35 67z"/>
<path class="q41" d="M3320 1740l35 2 20-27-35-4z"/>
<path class="q2" d="M2438 2533l35 4 20-12-35-4z"/>
<path class="q44" d="M3644 1691l35 8 20-18-35-8z"/>
<path class="q4" d="M2762 2507l35 0 20-14-35 0z"/>
<path class="q45" d="M3968 1679l34 8 20-16-34-8z"/>
<path class="q27" d="M3086 2187l35-115 20-133-35 101z"/>
<path class="q42" d="M3410 1720l35 5 20-23-35-6z"/>
<path class="q2" d="M2528 2530l35 4 20-12-35-4z"/>
<path class="q44" d="M3733 1689l35 8 20-17-34-8z"/>
<path class="q6" d="M2852 2490l35-6 20-18-35 8z"/>
<path class="q39" d="M3176 1879l34-35 20-57-34 18z"/>
<path class="q43" d="M3499 1709l35 7 20-21-35-7z"/>
<path class="q3" d="M2618 2526l34 3 21-13-35-3z"/>
<path class="q44" d="M3823 1688l35 8 20-17-35-8z"/>
<path class="qa" d="M2941 2454l35-19 20-33-34 27z"/>
<path class="q3f" d="M3265 1778l35-4 20-34-35 0z"/>
<path class="q2" d="M2384 2539l34 5 20-11-34-6z"/>
<path class="q43" d="M3589 1703l35 8 20-20-35-7z"/>
<path class="q3" d="M2707 2519l35 1 20-13-35-1z"/>
<path class="q45" d="M3913 1687l35 9 20-17-35-8z"/>
<path class="q16" d="M3031 2359l35-67 20-105-35 101z"/>
<path class="q41" d="M3355 1742l35 4 20-26-35-5z"/>
<path class="q2" d="M2473 2537l35 5 20-12-35-5z"/>
<path class="q44" d="M3679 1699l34 8 20-18-34-8z"/>
<path class="q5" d="M2797 2507l35-2 20-15-35 3z"/>
<path class="q45" d="M4002 1687l35 9 20-17-35-8z"/>
<path class="q2e" d="M3121 2072l35-93 20-100-35 60z"/>
<path class="q42" d="M3445 1725l34 6 20-22-34-7z"/>
<path class="q2" d="M2563 2534l35 4 20-12-35-4z"/>
<path class="q44" d="M3768 1697l35 9 20-18-35-8z"/>
<path class="q7" d="M2887 2484l34-9 20-21-34 12z"/>
<path class="q3b" d="M3210 1844l35-19 20-47-35 9z"/>
<path class="q1" d="M2329 2546l34 5 21-12-35-5z"/>
<path class="q43" d="M3534 1716l35 8 20-21-35-8z"/>
<path class="q3" d="M2652 2529l35 2 20-12-34-3z"/>
<path class="q44" d="M3858 1696l35 9 20-18-35-8z"/>
<path class="qd" d="M2976 2435l35-30 20-46-35 43z"/>
<path class="q3f" d="M3300 1774l35 0 20-32-35-2z"/>
<path class="q2" d="M2418 2544l35 5 20-12-35-4z"/>
<path class="q43" d="M3624 1711l35 8 20-20-35-8z"/>
<path class="q4" d="M2742 2520l35 0 20-13-35 0z"/>
<path class="q44" d="M3948 1696l34 9 20-18-34-8z"/>
<path class="q1e" d="M3066 2292l35-94 20-126-35 115z"/>
<path class="q41" d="M3390 1746l34 5 21-26-35-5z"/>
<path class="q2" d="M2508 2542l35 4 20-12-35-4z"/>
<path class="q44" d="M3713 1707l35 9 20-19-35-8z"/>
<path class="q6" d="M2832 2505l35-4 20-17-35 6z"/>
<path class="q45" d="M4037 1696l35 9 20-18-35-8z"/>
<path class="q34" d="M3156 1979l34-59 20-76-34 35z"/>
<path class="q42" d="M3479 1731l35 8 20-23-35-7z"/>
<path class="q3" d="M2598 2538l34 3 20-12-34-3z"/>
<path class="q44" d="M3803 1706l35 9 20-19-35-8z"/>
<path class="q9" d="M2921 2475l35-14 20-26-35 19z"/>
<path class="q3c" d="M3245 1825l35-9 20-42-35 4z"/>
<path class="q2" d="M2363 2551l35 5 20-12-34-5z"/>
<path class="q43" d="M3569 1724l35 8 20-21-35-8z"/>
<path class="q3" d="M2687 2531l35 2 20-13-35-1z"/>
<path class="q44" d="M3893 1705l34 9 21-18-35-9z"/>
<path class="q11" d="M3011 2405l35-46 20-67-35 67z"/>
<path class="q40" d="M3335 1774l35 2 20-30-35-4z"/>
<path class="q2" d="M2453 2549l35 5 20-12-35-5z"/>
<path class="q43" d="M3659 1719l34 9 20-21-34-8z"/>
<path class="q5" d="M2777 2520l35-1 20-14-35 2z"/>
<path class="q44" d="M3982 1705l35 10 20-19-35-9z"/>
<path class="q26" d="M3101 2198l34-101 21-118-35 93z"/>
<path class="q41" d="M3424 1751l35 6 20-26-34-6z"/>
<path class="q2" d="M2543 2546l35 4 20-12-35-4z"/>
<path class="q44" d="M3748 1716l35 10 20-20-35-9z"/>
<path class="q7" d="M2867 2501l34-8 20-18-34 9z"/>
<path class="q44" d="M4072 1705l35 10 20-19-35-9z"/>
<path class="q37" d="M3190 1920l35-34 20-61-35 19z"/>
<path class="q1" d="M2309 2557l34 6 20-12-34-5z"/>
<path class="q42" d="M3514 1739l35 8 20-23-35-8z"/>
<path class="q3" d="M2632 2541l35 2 20-12-35-2z"/>
<path class="q44" d="M3838 1715l35 10 20-20-35-9z"/>
<path class="qb" d="M2956 2461l35-23 20-33-35 30z"/>
<path class="q3d" d="M3280 1816l35-5 20-37-35 0z"/>
<path class="q2" d="M2398 2556l35 5 20-12-35-5z"/>
<path class="q43" d="M3604 1732l34 9 21-22-35-8z"/>
<path class="q4" d="M2722 2533l35 0 20-13-35 0z"/>
<path class="q44" d="M3927 1714l35 11 20-20-34-9z"/>
<path class="q17" d="M3046 2359l35-68 20-93-35 94z"/>
<path class="q40" d="M3370 1776l34 4 20-29-34-5z"/>
<path class="q2" d="M2488 2554l35 4 20-12-35-4z"/>
<path class="q43" d="M3693 1728l35 10 20-22-35-9z"/>
<path class="q5" d="M2812 2519l34-4 21-14-35 4z"/>
<path class="q44" d="M4017 1715l35 10 20-20-35-9z"/>
<path class="q2d" d="M3135 2097l35-82 20-95-34 59z"/>
<path class="q41" d="M3459 1757l35 7 20-25-35-8z"/>
<path class="q3" d="M2578 2550l34 3 20-12-34-3z"/>
<path class="q43" d="M3783 1726l35 10 20-21-35-9z"/>
<path class="q8" d="M2901 2493l35-12 20-20-35 14z"/>
<path class="q44" d="M4107 1715l35 11 20-20-35-10z"/>
<path class="q39" d="M3225 1886l35-20 20-50-35 9z"/>
<path class="q2" d="M2343 2563l35 5 20-12-35-5z"/>
<path class="q42" d="M3549 1747l35 9 20-24-35-8z"/>
<path class="q3" d="M2667 2543l35 2 20-12-35-2z"/>
<path class="q44" d="M3873 1725l34 10 20-21-34-9z"/>
<path class="qe" d="M2991 2438l35-34 20-45-35 46z"/>
<path class="q3e" d="M3315 1811l34 0 21-35-35-2z"/>
<path class="q2" d="M2433 2561l35 4 20-11-35-5z"/>
<path class="q42" d="M3638 1741l35 10 20-23-34-9z"/>
<path class="q4" d="M2757 2533l35-1 20-13-35 1z"/>
<path class="q44" d="M3962 1725l35 11 20-21-35-10z"/>
<path class="q1e" d="M3081 2291l34-86 20-108-34 101z"/>
<path class="q40" d="M3404 1780l35 6 20-29-35-6z"/>
<path class="q2" d="M2523 2558l34 3 21-11-35-4z"/>
<path class="q43" d="M3728 1738l35 10 20-22-35-10z"/>
<path class="q6" d="M2846 2515l35-6 20-16-34 8z"/>
<path class="q44" d="M4052 1725l35 12 20-22-35-10z"/>
<path class="q32" d="M3170 2015l35-54 20-75-35 34z"/>
<path class="q1" d="M2289 2569l34 5 20-11-34-6z"/>
<path class="q41" d="M3494 1764l35 9 20-26-35-8z"/>
<path class="q3" d="M2612 2553l35 2 20-12-35-2z"/>
<path class="q43" d="M3818 1736l35 11 20-22-35-10z"/>
<path class="qa" d="M2936 2481l35-18 20-25-35 23z"/>
<path class="q44" d="M4142 1726l34 13 20-23-34-10z"/>
<path class="q3b" d="M3260 1866l35-9 20-46-35 5z"/>
<path class="q2" d="M2378 2568l35 5 20-12-35-5z"/>
<path class="q42" d="M3584 1756l34 10 20-25-34-9z"/>
<path class="q4" d="M2702 2545l35 1 20-13-35 0z"/>
<path class="q43" d="M3907 1735l35 12 20-22-35-11z"/>
<path class="q12" d="M3026 2404l34-50 21-63-35 68z"/>
<path class="q3e" d="M3349 1811l35 3 20-34-34-4z"/>
<path class="q2" d="M2468 2565l35 5 20-12-35-4z"/>
<path class="q42" d="M3673 1751l35 11 20-24-35-10z"/>
<path class="q5" d="M2792 2532l34-3 20-14-34 4z"/>
<path class="q43" d="M3997 1736l35 13 20-24-35-10z"/>
<path class="q26" d="M3115 2205l35-88 20-102-35 82z"/>
<path class="q40" d="M3439 1786l35 8 20-30-35-7z"/>
<path class="q3" d="M2557 2561l35 4 20-12-34-3z"/>
<path class="q43" d="M3763 1748l35 12 20-24-35-10z"/>
<path class="q7" d="M2881 2509l35-10 20-18-35 12z"/>
<path class="q43" d="M4087 1737l34 14 21-25-35-11z"/>
<path class="q35" d="M3205 1961l35-32 20-63-35 20z"/>
<path class="q2" d="M2323 2574l35 5 20-11-35-5z"/>
<path class="q41" d="M3529 1773l35 10 20-27-35-9z"/>
<path class="q3" d="M2647 2555l35 2 20-12-35-2z"/>
<path class="q43" d="M3853 1747l34 13 20-25-34-10z"/>
<path class="qc" d="M2971 2463l35-26 20-33-35 34z"/>
<path class="q43" d="M4176 1739l35 14 20-25-35-12z"/>
<path class="q3c" d="M3295 1857l34-4 20-42-34 0z"/>
<path class="q2" d="M2413 2573l35 4 20-12-35-4z"/>
<path class="q42" d="M3618 1766l35 11 20-26-35-10z"/>
<path class="q4" d="M2737 2546l34-1 21-13-35 1z"/>
<path class="q43" d="M3942 1747l35 14 20-25-35-11z"/>
<path class="q18" d="M3060 2354l35-68 20-81-34 86z"/>
<path class="q3e" d="M3384 1814l35 6 20-34-35-6z"/>
<path class="q2" d="M2503 2570l34 3 20-12-34-3z"/>
<path class="q42" d="M3708 1762l35 12 20-26-35-10z"/>
<path class="q6" d="M2826 2529l35-5 20-15-35 6z"/>
<path class="q43" d="M4032 1749l35 15 20-27-35-12z"/>
<path class="q2c" d="M3150 2117l35-70 20-86-35 54z"/>
<path class="q1" d="M2268 2581l35 5 20-12-34-5z"/>
<path class="q40" d="M3474 1794l35 9 20-30-35-9z"/>
<path class="q3" d="M2592 2565l35 2 20-12-35-2z"/>
<path class="q42" d="M3798 1760l34 14 21-27-35-11z"/>
<path class="q9" d="M2916 2499l35-15 20-21-35 18z"/>
<path class="q43" d="M4121 1751l35 16 20-28-34-13z"/>
<path class="q38" d="M3240 1929l35-18 20-54-35 9z"/>
<path class="q2" d="M2358 2579l35 5 20-11-35-5z"/>
<path class="q41" d="M3564 1783l34 11 20-28-34-10z"/>
<path class="q4" d="M2682 2557l35 1 20-12-35-1z"/>
<path class="q42" d="M3887 1760l35 15 20-28-35-12z"/>
<path class="q10" d="M3006 2437l34-39 20-44-34 50z"/>
<path class="q43" d="M4211 1753l35 19 20-31-35-13z"/>
<path class="q3c" d="M3329 1853l35 1 20-40-35-3z"/>
<path class="q2" d="M2448 2577l34 4 21-11-35-5z"/>
<path class="q41" d="M3653 1777l35 13 20-28-35-11z"/>
<path class="q5" d="M2771 2545l35-3 20-13-34 3z"/>
<path class="q42" d="M3977 1761l35 17 20-29-35-13z"/>
<path class="q1f" d="M3095 2286l35-78 20-91-35 88z"/>
<path class="q3e" d="M3419 1820l35 8 20-34-35-8z"/>
<path class="q3" d="M2537 2573l35 4 20-12-35-4z"/>
<path class="q41" d="M3743 1774l35 15 20-29-35-12z"/>
<path class="q7" d="M2861 2524l35-9 20-16-35 10z"/>
<path class="q42" d="M4067 1764l34 19 20-32-34-14z"/>
<path class="q31" d="M3185 2047l35-46 20-72-35 32z"/>
<path class="q2" d="M2303 2586l35 5 20-12-35-5z"/>
<path class="q40" d="M3509 1803l34 11 21-31-35-10z"/>
<path class="q3" d="M2627 2567l35 2 20-12-35-2z"/>
<path class="q42" d="M3832 1774l35 16 20-30-34-13z"/>
<path class="qb" d="M2951 2484l35-22 20-25-35 26z"/>
<path class="q42" d="M4156 1767l35 22 20-36-35-14z"/>
<path class="q39" d="M3275 1911l34-9 20-49-34 4z"/>
<path class="q2" d="M2393 2584l35 5 20-12-35-4z"/>
<path class="q40" d="M3598 1794l35 14 20-31-35-11z"/>
<path class="q4" d="M2717 2558l34-1 20-12-34 1z"/>
<path class="q42" d="M3922 1775l35 19 20-33-35-14z"/>
<path class="q14" d="M3040 2398l35-54 20-58-35 68z"/>
<path class="q42" d="M4246 1772l35 25 20-40-35-16z"/>
<path class="q3c" d="M3364 1854l35 5 20-39-35-6z"/>
<path class="q2" d="M2482 2581l35 4 20-12-34-3z"/>
<path class="q41" d="M3688 1790l35 16 20-32-35-12z"/>
<path class="q6" d="M2806 2542l35-4 20-14-35 5z"/>
<path class="q42" d="M4012 1778l35 22 20-36-35-15z"/>
<path class="q26" d="M3130 2208l35-74 20-87-35 70z"/>
<path class="q1" d="M2248 2593l35 5 20-12-35-5z"/>
<path class="q3e" d="M3454 1828l35 10 20-35-35-9z"/>
<path class="q3" d="M2572 2577l35 2 20-12-35-2z"/>
<path class="q41" d="M3778 1789l34 18 20-33-34-14z"/>
<path class="q9" d="M2896 2515l35-13 20-18-35 15z"/>
<path class="q41" d="M4101 1783l35 25 20-41-35-16z"/>
<path class="q34" d="M3220 2001l34-28 21-62-35 18z"/>
<path class="q2" d="M2338 2591l35 5 20-12-35-5z"/>
<path class="q3f" d="M3543 1814l35 14 20-34-34-11z"/>
<path class="q4" d="M2662 2569l35 1 20-12-35-1z"/>
<path class="q41" d="M3867 1790l35 21 20-36-35-15z"/>
<path class="qe" d="M2986 2462l34-32 20-32-34 39z"/>
<path class="q41" d="M4191 1789l35 32 20-49-35-19z"/>
<path class="q3a" d="M3309 1902l35-1 20-47-35-1z"/>
<path class="q2" d="M2428 2589l34 4 20-12-34-4z"/>
<path class="q40" d="M3633 1808l35 17 20-35-35-13z"/>
<path class="q5" d="M2751 2557l35-2 20-13-35 3z"/>
<path class="q41" d="M3957 1794l35 25 20-41-35-17z"/>
<path class="q1a" d="M3075 2344l35-65 20-71-35 78z"/>
<path class="q40" d="M4281 1797l34 42 21-61-35-21z"/>
<path class="q3c" d="M3399 1859l35 9 20-40-35-8z"/>
<path class="q3" d="M2517 2585l35 3 20-11-35-4z"/>
<path class="q40" d="M3723 1806l35 20 20-37-35-15z"/>
<path class="q7" d="M2841 2538l35-8 20-15-35 9z"/>
<path class="q40" d="M4047 1800l34 31 20-48-34-19z"/>
<path class="q2b" d="M3165 2134l35-56 20-77-35 46z"/>
<path class="q2" d="M2283 2598l35 5 20-12-35-5z"/>
<path class="q3e" d="M3489 1838l34 14 20-38-34-11z"/>
<path class="q3" d="M2607 2579l35 2 20-12-35-2z"/>
<path class="q40" d="M3812 1807l35 24 20-41-35-16z"/>
<path class="qa" d="M2931 2502l34-19 21-21-35 22z"/>
<path class="q40" d="M4136 1808l35 41 20-60-35-22z"/>
<path class="q35" d="M3254 1973l35-14 20-57-34 9z"/>
<path class="q2" d="M2373 2596l35 5 20-12-35-5z"/>
<path class="q3f" d="M3578 1828l35 18 20-38-35-14z"/>
<path class="q4" d="M2697 2570l34 0 20-13-34 1z"/>
<path class="q40" d="M3902 1811l35 30 20-47-35-19z"/>
<path class="q12" d="M3020 2430l35-44 20-42-35 54z"/>
<path class="q3f" d="M4226 1821l35 57 20-81-35-25z"/>
<path class="q3a" d="M3344 1901l35 4 20-46-35-5z"/>
<path class="q2" d="M2462 2593l35 4 20-12-35-4z"/>
<path class="q3f" d="M3668 1825l35 21 20-40-35-16z"/>
<path class="q6" d="M2786 2555l35-4 20-13-35 4z"/>
<path class="q3f" d="M3992 1819l34 38 21-57-35-22z"/>
<path class="q20" d="M3110 2279l35-69 20-76-35 74z"/>
<path class="q3d" d="M4315 1839l35 89 20-119-34-31z"/>
<path class="q1" d="M2228 2604l35 6 20-12-35-5z"/>
<path class="q3c" d="M3434 1868l35 12 20-42-35-10z"/>
<path class="q3" d="M2552 2588l35 3 20-12-35-2z"/>
<path class="q3f" d="M3758 1826l34 26 20-45-34-18z"/>
<path class="q8" d="M2876 2530l35-12 20-16-35 13z"/>
<path class="q3e" d="M4081 1831l35 52 20-75-35-25z"/>
<path class="q2f" d="M3200 2078l34-37 20-68-34 28z"/>
<path class="q2" d="M2318 2603l35 5 20-12-35-5z"/>
<path class="q3d" d="M3523 1852l35 18 20-42-35-14z"/>
<path class="q4" d="M2642 2581l34 1 21-12-35-1z"/>
<path class="q3f" d="M3847 1831l35 33 20-53-35-21z"/>
<path class="qd" d="M2965 2483l35-28 20-25-34 32z"/>
<path class="q3d" d="M4171 1849l35 80 20-108-35-32z"/>
<path class="q36" d="M3289 1959l35-5 20-53-35 1z"/>
<path class="q2" d="M2408 2601l34 4 20-12-34-4z"/>
<path class="q3e" d="M3613 1846l35 22 20-43-35-17z"/>
<path class="q5" d="M2731 2570l35-3 20-12-35 2z"/>
<path class="q3e" d="M3937 1841l35 45 20-67-35-25z"/>
<path class="q17" d="M3055 2386l35-55 20-52-35 65z"/>
<path class="q3a" d="M4261 1878l34 135 20-174-34-42z"/>
<path class="q3a" d="M3379 1905l35 9 20-46-35-9z"/>
<path class="q3" d="M2497 2597l35 3 20-12-35-3z"/>
<path class="q3e" d="M3703 1846l34 29 21-49-35-20z"/>
<path class="q7" d="M2821 2551l35-8 20-13-35 8z"/>
<path class="q3d" d="M4026 1857l35 66 20-92-34-31z"/>
<path class="q26" d="M3145 2210l35-60 20-72-35 56z"/>
<path class="q36" d="M4350 1928l35 236 20-296-35-59z"/>
<path class="q2" d="M2263 2610l35 5 20-12-35-5z"/>
<path class="q3c" d="M3469 1880l34 17 20-45-34-14z"/>
<path class="q3" d="M2587 2591l35 2 20-12-35-2z"/>
<path class="q3d" d="M3792 1852l35 38 20-59-35-24z"/>
<path class="qa" d="M2911 2518l34-18 20-17-34 19z"/>
<path class="q3a" d="M4116 1883l35 108 20-142-35-41z"/>
<path class="q31" d="M3234 2041l35-21 20-61-35 14z"/>
<path class="q2" d="M2353 2608l34 4 21-11-35-5z"/>
<path class="q3c" d="M3558 1870l35 23 20-47-35-18z"/>
<path class="q4" d="M2676 2582l35-1 20-11-34 0z"/>
<path class="q3c" d="M3882 1864l35 54 20-77-35-30z"/>
<path class="q10" d="M3000 2455l35-38 20-31-35 44z"/>
<path class="q36" d="M4206 1929l34 189 21-240-35-57z"/>
<path class="q37" d="M3324 1954l35 3 20-52-35-4z"/>
<path class="q2" d="M2442 2605l35 3 20-11-35-4z"/>
<path class="q3d" d="M3648 1868l35 31 20-53-35-21z"/>
<path class="q6" d="M2766 2567l35-4 20-12-35 4z"/>
<path class="q3b" d="M3972 1886l34 82 20-111-34-38z"/>
<path class="q1c" d="M3090 2331l35-62 20-59-35 69z"/>
<path class="q30" d="M4295 2013l35 281 20-366-35-89z"/>
<path class="q1" d="M2208 2616l35 5 20-11-35-6z"/>
<path class="q3a" d="M3414 1914l34 15 21-49-35-12z"/>
<path class="q3" d="M2532 2600l35 3 20-12-35-3z"/>
<path class="q3c" d="M3737 1875l35 42 20-65-34-26z"/>
<path class="q8" d="M2856 2543l35-11 20-14-35 12z"/>
<path class="q38" d="M4061 1923l35 140 20-180-35-52z"/>
<path class="q2a" d="M3180 2150l34-42 20-67-34 37z"/>
<path class="q28" d="M4385 2164l35 264 20-408-35-152z"/>
<path class="q2" d="M2298 2615l35 5 20-12-35-5z"/>
<path class="q3b" d="M3503 1897l35 24 20-51-35-18z"/>
<path class="q4" d="M2622 2593l34 1 20-12-34-1z"/>
<path class="q3b" d="M3827 1890l35 61 20-87-35-33z"/>
<path class="qc" d="M2945 2500l35-25 20-20-35 28z"/>
<path class="q32" d="M4151 1991l35 230 20-292-35-80z"/>
<path class="q33" d="M3269 2020l35-8 20-58-35 5z"/>
<path class="q2" d="M2387 2612l35 4 20-11-34-4z"/>
<path class="q3b" d="M3593 1893l35 33 20-58-35-22z"/>
<path class="q5" d="M2711 2581l35-2 20-12-35 3z"/>
<path class="q39" d="M3917 1918l34 98 21-130-35-45z"/>
<path class="q14" d="M3035 2417l35-48 20-38-35 55z"/>
<path class="q2a" d="M4240 2118l35 262 20-367-34-135z"/>
<path class="q37" d="M3359 1957l35 11 20-54-35-9z"/>
<path class="q3" d="M2477 2608l35 4 20-12-35-3z"/>
<path class="q3b" d="M3683 1899l34 46 20-70-34-29z"/>
<path class="q7" d="M2801 2563l35-7 20-13-35 8z"/>
<path class="q34" d="M4006 1968l35 166 20-211-35-66z"/>
<path class="q22" d="M3125 2269l34-57 21-62-35 60z"/>
<path class="q21" d="M4330 2294l35 183 20-313-35-236z"/>
<path class="q2" d="M2243 2621l35 5 20-11-35-5z"/>
<path class="q39" d="M3448 1929l35 22 20-54-34-17z"/>
<path class="q3" d="M2567 2603l35 1 20-11-35-2z"/>
<path class="q39" d="M3772 1917l35 68 20-95-35-38z"/>
<path class="qa" d="M2891 2532l34-16 20-16-34 18z"/>
<path class="q2e" d="M4096 2063l35 237 20-309-35-108z"/>
<path class="q2d" d="M3214 2108l35-26 20-62-35 21z"/>
<path class="q18" d="M4420 2428l35 102 20-191-35-319z"/>
<path class="q2" d="M2333 2620l34 4 20-12-34-4z"/>
<path class="q39" d="M3538 1921l35 32 20-60-35-23z"/>
<path class="q4" d="M2656 2594l35-1 20-12-35 1z"/>
<path class="q36" d="M3862 1951l35 111 20-144-35-54z"/>
<path class="qf" d="M2980 2475l35-34 20-24-35 38z"/>
<path class="q25" d="M4186 2221l34 210 20-313-34-189z"/>
<path class="q34" d="M3304 2012l35 2 20-57-35-3z"/>
<path class="q2" d="M2422 2616l35 4 20-12-35-3z"/>
<path class="q39" d="M3628 1926l34 47 21-74-35-31z"/>
<path class="q6" d="M2746 2579l35-4 20-12-35 4z"/>
<path class="q31" d="M3951 2016l35 180 20-228-34-82z"/>
<path class="q19" d="M3070 2369l35-55 20-45-35 62z"/>
<path class="q1b" d="M4275 2380l35 127 20-213-35-281z"/>
<path class="q1" d="M2188 2628l35 5 20-12-35-5z"/>
<path class="q36" d="M3394 1968l34 18 20-57-34-15z"/>
<path class="q3" d="M2512 2612l35 2 20-11-35-3z"/>
<path class="q37" d="M3717 1945l35 73 20-101-35-42z"/>
<path class="q8" d="M2836 2556l34-11 21-13-35 11z"/>
<path class="q29" d="M4041 2134l35 219 20-290-35-140z"/>
<path class="q26" d="M3159 2212l35-45 20-59-34 42z"/>
<path class="q13" d="M4365 2477l35 73 20-122-35-264z"/>
<path class="q2" d="M2278 2626l35 5 20-11-35-5z"/>
<path class="q38" d="M3483 1951l35 32 20-62-35-24z"/>
<path class="q4" d="M2602 2604l34 1 20-11-34-1z"/>
<path class="q34" d="M3807 1985l35 118 20-152-35-61z"/>
<path class="qc" d="M2925 2516l35-24 20-17-35 25z"/>
<path class="q20" d="M4131 2300l35 163 20-242-35-230z"/>
<path class="q2f" d="M3249 2082l35-12 20-58-35 8z"/>
<path class="q2" d="M2367 2624l35 4 20-12-35-4z"/>
<path class="q37" d="M3573 1953l35 48 20-75-35-33z"/>
<path class="q5" d="M2691 2593l35-2 20-12-35 2z"/>
<path class="q2e" d="M3897 2062l34 180 20-226-34-98z"/>
<path class="q13" d="M3015 2441l35-43 20-29-35 48z"/>
<path class="q16" d="M4220 2431l35 95 20-146-35-262z"/>
<path class="q34" d="M3339 2014l34 11 21-57-35-11z"/>
<path class="q3" d="M2457 2620l35 3 20-11-35-4z"/>
<path class="q36" d="M3662 1973l35 75 20-103-34-46z"/>
<path class="q7" d="M2781 2575l35-7 20-12-35 7z"/>
<path class="q26" d="M3986 2196l35 192 20-254-35-166z"/>
<path class="q1e" d="M3105 2314l34-54 20-48-34 57z"/>
<path class="qf" d="M4310 2507l35 57 20-87-35-183z"/>
<path class="q2" d="M2223 2633l35 5 20-12-35-5z"/>
<path class="q35" d="M3428 1986l35 28 20-63-35-22z"/>
<path class="q3" d="M2547 2614l34 2 21-12-35-1z"/>
<path class="q32" d="M3752 2018l35 119 20-152-35-68z"/>
<path class="q9" d="M2870 2545l35-16 20-13-34 16z"/>
<path class="q1c" d="M4076 2353l35 131 20-184-35-237z"/>
<path class="q29" d="M3194 2167l35-29 20-56-35 26z"/>
<path class="qa" d="M4400 2550l34 38 21-58-35-102z"/>
<path class="q2" d="M2313 2631l34 5 20-12-34-4z"/>
<path class="q35" d="M3518 1983l35 46 20-76-35-32z"/>
<path class="q4" d="M2636 2605l35 0 20-12-35 1z"/>
<path class="q2c" d="M3842 2103l35 172 20-213-35-111z"/>
<path class="qf" d="M2960 2492l35-31 20-20-35 34z"/>
<path class="q13" d="M4166 2463l34 77 20-109-34-210z"/>
<path class="q30" d="M3284 2070l35 1 20-57-35-2z"/>
<path class="q2" d="M2402 2628l35 4 20-12-35-4z"/>
<path class="q34" d="M3608 2001l34 73 20-101-34-47z"/>
<path class="q6" d="M2726 2591l35-4 20-12-35 4z"/>
<path class="q22" d="M3931 2242l35 168 20-214-35-180z"/>
<path class="q17" d="M3050 2398l35-50 20-34-35 55z"/>
<path class="qc" d="M4255 2526l35 48 20-67-35-127z"/>
<path class="q1" d="M2168 2640l35 5 20-12-35-5z"/>
<path class="q33" d="M3373 2025l35 22 20-61-34-18z"/>
<path class="q3" d="M2492 2623l35 3 20-12-35-2z"/>
<path class="q30" d="M3697 2048l35 114 20-144-35-73z"/>
<path class="q8" d="M2816 2568l34-10 20-13-34 11z"/>
<path class="q19" d="M4021 2388l35 110 20-145-35-219z"/>
<path class="q23" d="M3139 2260l35-44 20-49-35 45z"/>
<path class="q9" d="M4345 2564l35 32 20-46-35-73z"/>
<path class="q2" d="M2258 2638l34 5 21-12-35-5z"/>
<path class="q34" d="M3463 2014l35 41 20-72-35-32z"/>
<path class="q4" d="M2581 2616l35 1 20-12-34-1z"/>
<path class="q29" d="M3787 2137l35 158 20-192-35-118z"/>
<path class="qc" d="M2905 2529l35-22 20-15-35 24z"/>
<path class="q10" d="M4111 2484l34 66 21-87-35-163z"/>
<path class="q2c" d="M3229 2138l35-13 20-55-35 12z"/>
<path class="q2" d="M2347 2636l35 4 20-12-35-4z"/>
<path class="q32" d="M3553 2029l35 67 20-95-35-48z"/>
<path class="q5" d="M2671 2605l35-2 20-12-35 2z"/>
<path class="q20" d="M3877 2275l34 147 20-180-34-180z"/>
<path class="q12" d="M2995 2461l35-41 20-22-35 43z"/>
<path class="qb" d="M4200 2540l35 42 20-56-35-95z"/>
<path class="q30" d="M3319 2071l34 13 20-59-34-11z"/>
<path class="q3" d="M2437 2632l35 3 20-12-35-3z"/>
<path class="q2e" d="M3642 2074l35 106 20-132-35-75z"/>
<path class="q7" d="M2761 2587l35-7 20-12-35 7z"/>
<path class="q16" d="M3966 2410l35 97 20-119-35-192z"/>
<path class="q1c" d="M3085 2348l34-51 20-37-34 54z"/>
<path class="q8" d="M4290 2574l35 29 20-39-35-57z"/>
<path class="q2" d="M2203 2645l35 5 20-12-35-5z"/>
<path class="q31" d="M3408 2047l35 35 20-68-35-28z"/>
<path class="q3" d="M2527 2626l34 2 20-12-34-2z"/>
<path class="q28" d="M3732 2162l35 144 20-169-35-119z"/>
<path class="q9" d="M2850 2558l35-16 20-13-35 16z"/>
<path class="qf" d="M4056 2498l35 59 20-73-35-131z"/>
<path class="q26" d="M3174 2216l35-30 20-48-35 29z"/>
<path class="q6" d="M4380 2596l34 23 20-31-34-38z"/>
<path class="q2" d="M2292 2643l35 5 20-12-34-5z"/>
<path class="q31" d="M3498 2055l35 60 20-86-35-46z"/>
<path class="q4" d="M2616 2617l35 0 20-12-35 0z"/>
<path class="q1f" d="M3822 2295l34 133 21-153-35-172z"/>
<path class="qe" d="M2940 2507l35-30 20-16-35 31z"/>
<path class="qa" d="M4145 2550l35 38 20-48-34-77z"/>
<path class="q2d" d="M3264 2125l35 0 20-54-35-1z"/>
<path class="q2" d="M2382 2640l35 4 20-12-35-4z"/>
<path class="q2d" d="M3588 2096l34 95 20-117-34-73z"/>
<path class="q6" d="M2706 2603l35-4 20-12-35 4z"/>
<path class="q15" d="M3911 2422l35 89 20-101-35-168z"/>
<path class="q16" d="M3030 2420l34-47 21-25-35 50z"/>
<path class="q7" d="M4235 2582l35 27 20-35-35-48z"/>
<path class="q1" d="M2148 2652l35 5 20-12-35-5z"/>
<path class="q2f" d="M3353 2084l35 25 20-62-35-22z"/>
<path class="q3" d="M2472 2635l35 3 20-12-35-3z"/>
<path class="q27" d="M3677 2180l35 129 20-147-35-114z"/>
<path class="q8" d="M2796 2580l34-10 20-12-34 10z"/>
<path class="qe" d="M4001 2507l35 55 20-64-35-110z"/>
<path class="q20" d="M3119 2297l35-43 20-38-35 44z"/>
<path class="q6" d="M4325 2603l35 21 20-28-35-32z"/>
<path class="q2" d="M2238 2650l34 5 20-12-34-5z"/>
<path class="q2f" d="M3443 2082l35 50 20-77-35-41z"/>
<path class="q4" d="M2561 2628l35 1 20-12-35-1z"/>
<path class="q1e" d="M3767 2306l35 123 20-134-35-158z"/>
<path class="qb" d="M2885 2542l35-22 20-13-35 22z"/>
<path class="qa" d="M4091 2557l34 36 20-43-34-66z"/>
<path class="q28" d="M3209 2186l35-15 20-46-35 13z"/>
<path class="q2" d="M2327 2648l35 4 20-12-35-4z"/>
<path class="q2c" d="M3533 2115l34 83 21-102-35-67z"/>
<path class="q5" d="M2651 2617l35-2 20-12-35 2z"/>
<path class="q15" d="M3856 2428l35 84 20-90-34-147z"/>
<path class="q11" d="M2975 2477l35-39 20-18-35 41z"/>
<path class="q7" d="M4180 2588l35 26 20-32-35-42z"/>
<path class="q2d" d="M3299 2125l34 13 20-54-34-13z"/>
<path class="q3" d="M2417 2644l35 3 20-12-35-3z"/>
<path class="q26" d="M3622 2191l35 116 20-127-35-106z"/>
<path class="q7" d="M2741 2599l34-7 21-12-35 7z"/>
<path class="qe" d="M3946 2511l35 53 20-57-35-97z"/>
<path class="q1a" d="M3064 2373l35-48 20-28-34 51z"/>
<path class="q5" d="M4270 2609l35 21 20-27-35-29z"/>
<path class="q2" d="M2183 2657l35 5 20-12-35-5z"/>
<path class="q2d" d="M3388 2109l35 39 20-66-35-35z"/>
<path class="q3" d="M2507 2638l34 2 20-12-34-2z"/>
<path class="q1d" d="M3712 2309l35 115 20-118-35-144z"/>
<path class="q9" d="M2830 2570l35-16 20-12-35 16z"/>
<path class="qa" d="M4036 2562l35 35 20-40-35-59z"/>
<path class="q24" d="M3154 2254l35-30 20-38-35 30z"/>
<path class="q4" d="M4360 2624l34 17 20-22-34-23z"/>
<path class="q2" d="M2272 2655l35 5 20-12-35-5z"/>
<path class="q2b" d="M3478 2132l35 70 20-87-35-60z"/>
<path class="q4" d="M2596 2629l35 0 20-12-35 0z"/>
<path class="q14" d="M3802 2429l34 81 20-82-34-133z"/>
<path class="qe" d="M2920 2520l35-29 20-14-35 30z"/>
<path class="q7" d="M4125 2593l35 26 20-31-35-38z"/>
<path class="q2a" d="M3244 2171l34 0 21-46-35 0z"/>
<path class="q2" d="M2362 2652l35 4 20-12-35-4z"/>
<path class="q26" d="M3567 2198l35 101 20-108-34-95z"/>
<path class="q6" d="M2686 2615l35-4 20-12-35 4z"/>
<path class="qe" d="M3891 2512l35 53 20-54-35-89z"/>
<path class="q15" d="M3010 2438l34-45 20-20-34 47z"/>
<path class="q5" d="M4215 2614l35 20 20-25-35-27z"/>
<path class="q1" d="M2128 2664l35 5 20-12-35-5z"/>
<path class="q2c" d="M3333 2138l35 27 20-56-35-25z"/>
<path class="q3" d="M2452 2647l34 3 21-12-35-3z"/>
<path class="q1e" d="M3657 2307l35 107 20-105-35-129z"/>
<path class="q8" d="M2775 2592l35-11 20-11-34 10z"/>
<path class="qa" d="M3981 2564l35 35 20-37-35-55z"/>
<path class="q1f" d="M3099 2325l35-41 20-30-35 43z"/>
<path class="q4" d="M4305 2630l34 15 21-21-35-21z"/>
<path class="q2" d="M2218 2662l34 5 20-12-34-5z"/>
<path class="q2a" d="M3423 2148l35 56 20-72-35-50z"/>
<path class="q4" d="M2541 2640l35 1 20-12-35-1z"/>
<path class="q15" d="M3747 2424l35 80 20-75-35-123z"/>
<path class="qb" d="M2865 2554l35-21 20-13-35 22z"/>
<path class="q7" d="M4071 2597l34 25 20-29-34-36z"/>
<path class="q26" d="M3189 2224l35-15 20-38-35 15z"/>
<path class="q2" d="M2307 2660l35 4 20-12-35-4z"/>
<path class="q26" d="M3513 2202l34 87 20-91-34-83z"/>
<path class="q5" d="M2631 2629l35-2 20-12-35 2z"/>
<path class="qe" d="M3836 2510l35 53 20-51-35-84z"/>
<path class="q11" d="M2955 2491l34-38 21-15-35 39z"/>
<path class="q5" d="M4160 2619l35 19 20-24-35-26z"/>
<path class="q2a" d="M3278 2171l35 14 20-47-34-13z"/>
<path class="q3" d="M2397 2656l35 3 20-12-35-3z"/>
<path class="q1e" d="M3602 2299l35 101 20-93-35-116z"/>
<path class="q7" d="M2721 2611l34-7 20-12-34 7z"/>
<path class="qa" d="M3926 2565l35 35 20-36-35-53z"/>
<path class="q1a" d="M3044 2393l35-46 20-22-35 48z"/>
<path class="q4" d="M4250 2634l35 16 20-20-35-21z"/>
<path class="q2" d="M2163 2669l34 5 21-12-35-5z"/>
<path class="q29" d="M3368 2165l35 43 20-60-35-39z"/>
<path class="q3" d="M2486 2650l35 2 20-12-34-2z"/>
<path class="q16" d="M3692 2414l35 81 20-71-35-115z"/>
<path class="q9" d="M2810 2581l35-15 20-12-35 16z"/>
<path class="q7" d="M4016 2599l34 25 21-27-35-35z"/>
<path class="q22" d="M3134 2284l35-30 20-30-35 30z"/>
<path class="q3" d="M4339 2645l35 14 20-18-34-17z"/>
<path class="q2" d="M2252 2667l35 5 20-12-35-5z"/>
<path class="q26" d="M3458 2204l35 73 20-75-35-70z"/>
<path class="q4" d="M2576 2641l35-1 20-11-35 0z"/>
<path class="qf" d="M3782 2504l34 54 20-48-34-81z"/>
<path class="qe" d="M2900 2533l35-30 20-12-35 29z"/>
<path class="q5" d="M4105 2622l35 19 20-22-35-26z"/>
<path class="q27" d="M3224 2209l34 0 20-38-34 0z"/>
<path class="q2" d="M2342 2664l35 4 20-12-35-4z"/>
<path class="q1f" d="M3547 2289l35 92 20-82-35-101z"/>
<path class="q6" d="M2666 2627l34-5 21-11-35 4z"/>
<path class="qa" d="M3871 2563l35 36 20-34-35-53z"/>
<path class="q15" d="M2989 2453l35-44 20-16-34 45z"/>
<path class="q4" d="M4195 2638l35 16 20-20-35-20z"/>
<path class="q1" d="M2108 2676l35 5 20-12-35-5z"/>
<path class="q28" d="M3313 2185l35 28 20-48-35-27z"/>
<path class="q3" d="M2432 2659l34 3 20-12-34-3z"/>
<path class="q17" d="M3637 2400l35 81 20-67-35-107z"/>
<path class="q8" d="M2755 2604l35-11 20-12-35 11z"/>
<path class="q7" d="M3961 2600l35 25 20-26-35-35z"/>
<path class="q1e" d="M3079 2347l35-41 20-22-35 41z"/>
<path class="q3" d="M4285 2650l34 13 20-18-34-15z"/>
<path class="q2" d="M2197 2674l35 5 20-12-34-5z"/>
<path class="q26" d="M3403 2208l35 58 20-62-35-56z"/>
<path class="q4" d="M2521 2652l35 1 20-12-35-1z"/>
<path class="q10" d="M3727 2495l34 56 21-47-35-80z"/>
<path class="qb" d="M2845 2566l35-22 20-11-35 21z"/>
<path class="q6" d="M4050 2624l35 20 20-22-34-25z"/>
<path class="q24" d="M3169 2254l35-15 20-30-35 15z"/>
<path class="q2" d="M2287 2672l35 4 20-12-35-4z"/>
<path class="q20" d="M3493 2277l34 83 20-71-34-87z"/>
<path class="q5" d="M2611 2640l35-1 20-12-35 2z"/>
<path class="qb" d="M3816 2558l35 38 20-33-35-53z"/>
<path class="q11" d="M2935 2503l34-37 20-13-34 38z"/>
<path class="q4" d="M4140 2641l35 16 20-19-35-19z"/>
<path class="q27" d="M3258 2209l35 14 20-38-35-14z"/>
<path class="q3" d="M2377 2668l34 3 21-12-35-3z"/>
<path class="q18" d="M3582 2381l35 81 20-62-35-101z"/>
<path class="q6" d="M2700 2622l35-6 20-12-34 7z"/>
<path class="q8" d="M3906 2599l35 27 20-26-35-35z"/>
<path class="q19" d="M3024 2409l35-46 20-16-35 46z"/>
<path class="q4" d="M4230 2654l35 13 20-17-35-16z"/>
<path class="q2" d="M2143 2681l34 5 20-12-34-5z"/>
<path class="q26" d="M3348 2213l35 44 20-49-35-43z"/>
<path class="q3" d="M2466 2662l35 2 20-12-35-2z"/>
<path class="q11" d="M3672 2481l35 60 20-46-35-81z"/>
<path class="q9" d="M2790 2593l35-15 20-12-35 15z"/>
<path class="q6" d="M3996 2625l34 21 20-22-34-25z"/>
<path class="q21" d="M3114 2306l35-29 20-23-35 30z"/>
<path class="q3" d="M4319 2663l35 12 20-16-35-14z"/>
<path class="q2" d="M2232 2679l35 5 20-12-35-5z"/>
<path class="q22" d="M3438 2266l34 71 21-60-35-73z"/>
<path class="q4" d="M2556 2653l35 0 20-13-35 1z"/>
<path class="qc" d="M3761 2551l35 41 20-34-34-54z"/>
<path class="qe" d="M2880 2544l35-29 20-12-35 30z"/>
<path class="q5" d="M4085 2644l35 16 20-19-35-19z"/>
<path class="q25" d="M3204 2239l34-1 20-29-34 0z"/>
<path class="q2" d="M2322 2676l35 4 20-12-35-4z"/>
<path class="q1a" d="M3527 2360l35 79 20-58-35-92z"/>
<path class="q6" d="M2646 2639l34-4 20-13-34 5z"/>
<path class="q8" d="M3851 2596l35 28 20-25-35-36z"/>
<path class="q15" d="M2969 2466l35-44 20-13-35 44z"/>
<path class="q4" d="M4175 2657l35 14 20-17-35-16z"/>
<path class="q1" d="M2088 2688l34 5 21-12-35-5z"/>
<path class="q26" d="M3293 2223l35 29 20-39-35-28z"/>
<path class="q3" d="M2411 2671l35 3 20-12-34-3z"/>
<path class="q12" d="M3617 2462l35 64 20-45-35-81z"/>
<path class="q8" d="M2735 2616l35-11 20-12-35 11z"/>
<path class="q6" d="M3941 2626l35 21 20-22-35-25z"/>
<path class="q1d" d="M3059 2363l35-40 20-17-35 41z"/>
<path class="q3" d="M4265 2667l34 12 20-16-34-13z"/>
<path class="q2" d="M2177 2686l35 5 20-12-35-5z"/>
<path class="q23" d="M3383 2257l35 57 20-48-35-58z"/>
<path class="q4" d="M2501 2664l35 1 20-12-35-1z"/>
<path class="qd" d="M3707 2541l34 43 20-33-34-56z"/>
<path class="qb" d="M2825 2578l35-22 20-12-35 22z"/>
<path class="q5" d="M4030 2646l35 16 20-18-35-20z"/>
<path class="q23" d="M3149 2277l34-16 21-22-35 15z"/>
<path class="q2" d="M2267 2684l35 4 20-12-35-4z"/>
<path class="q1c" d="M3472 2337l35 75 20-52-34-83z"/>
<path class="q5" d="M2591 2653l35-2 20-12-35 1z"/>
<path class="q9" d="M3796 2592l35 30 20-26-35-38z"/>
<path class="q11" d="M2915 2515l34-37 20-12-34 37z"/>
<path class="q4" d="M4120 2660l35 14 20-17-35-16z"/>
<path class="q25" d="M3238 2238l35 14 20-29-35-14z"/>
<path class="q2" d="M2357 2680l34 3 20-12-34-3z"/>
<path class="q14" d="M3562 2439l35 67 20-44-35-81z"/>
<path class="q6" d="M2680 2635l35-7 20-12-35 6z"/>
<path class="q7" d="M3886 2624l35 23 20-21-35-27z"/>
<path class="q19" d="M3004 2422l35-45 20-14-35 46z"/>
<path class="q3" d="M4210 2671l34 12 21-16-35-13z"/>
<path class="q1" d="M2122 2693l35 5 20-12-34-5z"/>
<path class="q24" d="M3328 2252l35 43 20-38-35-44z"/>
<path class="q3" d="M2446 2674l35 2 20-12-35-2z"/>
<path class="qe" d="M3652 2526l35 47 20-32-35-60z"/>
<path class="q9" d="M2770 2605l35-15 20-12-35 15z"/>
<path class="q5" d="M3976 2647l34 17 20-18-34-21z"/>
<path class="q20" d="M3094 2323l35-29 20-17-35 29z"/>
<path class="q3" d="M4299 2679l35 11 20-15-35-12z"/>
<path class="q2" d="M2212 2691l35 5 20-12-35-5z"/>
<path class="q1e" d="M3418 2314l34 68 20-45-34-71z"/>
<path class="q4" d="M2536 2665l35 0 20-12-35 0z"/>
<path class="qa" d="M3741 2584l35 33 20-25-35-41z"/>
<path class="qe" d="M2860 2556l34-29 21-12-35 29z"/>
<path class="q4" d="M4065 2662l35 14 20-16-35-16z"/>
<path class="q24" d="M3183 2261l35 0 20-23-34 1z"/>
<path class="q2" d="M2302 2688l35 4 20-12-35-4z"/>
<path class="q17" d="M3507 2412l35 69 20-42-35-79z"/>
<path class="q5" d="M2626 2651l34-4 20-12-34 4z"/>
<path class="q7" d="M3831 2622l35 23 20-21-35-28z"/>
<path class="q15" d="M2949 2478l35-44 20-12-35 44z"/>
<path class="q3" d="M4155 2674l35 12 20-15-35-14z"/>
<path class="q1" d="M2068 2700l34 5 20-12-34-5z"/>
<path class="q24" d="M3273 2252l35 29 20-29-35-29z"/>
<path class="q3" d="M2391 2683l35 3 20-12-35-3z"/>
<path class="q10" d="M3597 2506l35 52 20-32-35-64z"/>
<path class="q8" d="M2715 2628l35-10 20-13-35 11z"/>
<path class="q5" d="M3921 2647l34 18 21-18-35-21z"/>
<path class="q1d" d="M3039 2377l35-40 20-14-35 40z"/>
<path class="q3" d="M4244 2683l35 11 20-15-34-12z"/>
<path class="q2" d="M2157 2698l35 5 20-12-35-5z"/>
<path class="q20" d="M3363 2295l35 57 20-38-35-57z"/>
<path class="q4" d="M2481 2676l35 1 20-12-35-1z"/>
<path class="qb" d="M3687 2573l34 37 20-26-34-43z"/>
<path class="qb" d="M2805 2590l35-21 20-13-35 22z"/>
<path class="q4" d="M4010 2664l35 15 20-17-35-16z"/>
<path class="q22" d="M3129 2294l34-15 20-18-34 16z"/>
<path class="q2" d="M2247 2696l35 4 20-12-35-4z"/>
<path class="q19" d="M3452 2382l35 68 20-38-35-75z"/>
<path class="q5" d="M2571 2665l34-2 21-12-35 2z"/>
<path class="q8" d="M3776 2617l35 25 20-20-35-30z"/>
<path class="q11" d="M2894 2527l35-37 20-12-34 37z"/>
<path class="q3" d="M4100 2676l35 13 20-15-35-14z"/>
<path class="q24" d="M3218 2261l35 14 20-23-35-14z"/>
<path class="q2" d="M2337 2692l34 4 20-13-34-3z"/>
<path class="q12" d="M3542 2481l35 57 20-32-35-67z"/>
<path class="q6" d="M2660 2647l35-6 20-13-35 7z"/>
<path class="q6" d="M3866 2645l35 20 20-18-35-23z"/>
<path class="q19" d="M2984 2434l35-45 20-12-35 45z"/>
<path class="q3" d="M4190 2686l34 11 20-14-34-12z"/>
<path class="q1" d="M2102 2705l35 5 20-12-35-5z"/>
<path class="q22" d="M3308 2281l35 43 20-29-35-43z"/>
<path class="q3" d="M2426 2686l35 3 20-13-35-2z"/>
<path class="qc" d="M3632 2558l34 41 21-26-35-47z"/>
<path class="q9" d="M2750 2618l35-15 20-13-35 15z"/>
<path class="q5" d="M3955 2665l35 15 20-16-34-17z"/>
<path class="q20" d="M3074 2337l35-29 20-14-35 29z"/>
<path class="q2" d="M4279 2694l35 10 20-14-35-11z"/>
<path class="q2" d="M2192 2703l35 5 20-12-35-5z"/>
<path class="q1c" d="M3398 2352l34 64 20-34-34-68z"/>
<path class="q4" d="M2516 2677l35 1 20-13-35 0z"/>
<path class="q9" d="M3721 2610l35 28 20-21-35-33z"/>
<path class="qe" d="M2840 2569l34-29 20-13-34 29z"/>
<path class="q4" d="M4045 2679l35 13 20-16-35-14z"/>
<path class="q24" d="M3163 2279l35-1 20-17-35 0z"/>
<path class="q2" d="M2282 2700l34 5 21-13-35-4z"/>
<path class="q14" d="M3487 2450l35 62 20-31-35-69z"/>
<path class="q5" d="M2605 2663l35-3 20-13-34 4z"/>
<path class="q6" d="M3811 2642l35 21 20-18-35-23z"/>
<path class="q15" d="M2929 2490l35-44 20-12-35 44z"/>
<path class="q3" d="M4135 2689l34 12 21-15-35-12z"/>
<path class="q1" d="M2048 2712l34 5 20-12-34-5z"/>
<path class="q23" d="M3253 2275l35 29 20-23-35-29z"/>
<path class="q3" d="M2371 2696l35 3 20-13-35-3z"/>
<path class="qe" d="M3577 2538l35 46 20-26-35-52z"/>
<path class="q8" d="M2695 2641l35-10 20-13-35 10z"/>
<path class="q5" d="M3901 2665l34 16 20-16-34-18z"/>
<path class="q1d" d="M3019 2389l35-40 20-12-35 40z"/>
<path class="q2" d="M4224 2697l35 11 20-14-35-11z"/>
<path class="q2" d="M2137 2710l35 6 20-13-35-5z"/>
<path class="q1f" d="M3343 2324l34 56 21-28-35-57z"/>
<path class="q3" d="M2461 2689l35 1 20-13-35-1z"/>
<path class="qa" d="M3666 2599l35 31 20-20-34-37z"/>
<path class="qb" d="M2785 2603l35-21 20-13-35 21z"/>
<path class="q4" d="M3990 2680l35 14 20-15-35-15z"/>
<path class="q22" d="M3109 2308l34-15 20-14-34 15z"/>
<path class="q2" d="M2227 2708l35 5 20-13-35-4z"/>
<path class="q17" d="M3432 2416l35 63 20-29-35-68z"/>
<path class="q5" d="M2551 2678l34-2 20-13-34 2z"/>
<path class="q7" d="M3756 2638l35 22 20-18-35-25z"/>
<path class="q11" d="M2874 2540l35-37 20-13-35 37z"/>
<path class="q3" d="M4080 2692l35 11 20-14-35-13z"/>
<path class="q24" d="M3198 2278l35 14 20-17-35-14z"/>
<path class="q2" d="M2316 2705l35 3 20-12-34-4z"/>
<path class="q10" d="M3522 2512l35 51 20-25-35-57z"/>
<path class="q6" d="M2640 2660l35-6 20-13-35 6z"/>
<path class="q5" d="M3846 2663l34 18 21-16-35-20z"/>
<path class="q19" d="M2964 2446l35-45 20-12-35 45z"/>
<path class="q3" d="M4169 2701l35 10 20-14-34-11z"/>
<path class="q1" d="M2082 2717l35 6 20-13-35-5z"/>
<path class="q21" d="M3288 2304l35 43 20-23-35-43z"/>
<path class="q3" d="M2406 2699l35 2 20-12-35-3z"/>
<path class="qb" d="M3612 2584l34 36 20-21-34-41z"/>
<path class="q9" d="M2730 2631l35-15 20-13-35 15z"/>
<path class="q4" d="M3935 2681l35 14 20-15-35-15z"/>
<path class="q20" d="M3054 2349l34-29 21-12-35 29z"/>
<path class="q2" d="M4259 2708l35 10 20-14-35-10z"/>
<path class="q2" d="M2172 2716l35 4 20-12-35-5z"/>
<path class="q1a" d="M3377 2380l35 61 20-25-34-64z"/>
<path class="q4" d="M2496 2690l35 1 20-13-35-1z"/>
<path class="q8" d="M3701 2630l35 26 20-18-35-28z"/>
<path class="qe" d="M2820 2582l34-29 20-13-34 29z"/>
<path class="q3" d="M4025 2694l35 12 20-14-35-13z"/>
<path class="q23" d="M3143 2293l35-1 20-14-35 1z"/>
<path class="q2" d="M2262 2713l34 4 20-12-34-5z"/>
<path class="q13" d="M3467 2479l35 57 20-24-35-62z"/>
<path class="q5" d="M2585 2676l35-3 20-13-35 3z"/>
<path class="q6" d="M3791 2660l35 19 20-16-35-21z"/>
<path class="q15" d="M2909 2503l35-44 20-13-35 44z"/>
<path class="q3" d="M4115 2703l34 11 20-13-34-12z"/>
<path class="q1" d="M2027 2724l35 5 20-12-34-5z"/>
<path class="q22" d="M3233 2292l35 29 20-17-35-29z"/>
<path class="q3" d="M2351 2708l35 4 20-13-35-3z"/>
<path class="qd" d="M3557 2563l34 41 21-20-35-46z"/>
<path class="q7" d="M2675 2654l35-9 20-14-35 10z"/>
<path class="q5" d="M3880 2681l35 15 20-15-34-16z"/>
<path class="q1d" d="M2999 2401l35-40 20-12-35 40z"/>
<path class="q2" d="M4204 2711l35 10 20-13-35-11z"/>
<path class="q2" d="M2117 2723l35 5 20-12-35-6z"/>
<path class="q1e" d="M3323 2347l34 54 20-21-34-56z"/>
<path class="q3" d="M2441 2701l35 2 20-13-35-1z"/>
<path class="q9" d="M3646 2620l35 28 20-18-35-31z"/>
<path class="qb" d="M2765 2616l34-20 21-14-35 21z"/>
<path class="q4" d="M3970 2695l35 13 20-14-35-14z"/>
<path class="q22" d="M3088 2320l35-15 20-12-34 15z"/>
<path class="q2" d="M2207 2720l35 5 20-12-35-5z"/>
<path class="q16" d="M3412 2441l35 61 20-23-35-63z"/>
<path class="q5" d="M2531 2691l34-1 20-14-34 2z"/>
<path class="q7" d="M3736 2656l35 21 20-17-35-22z"/>
<path class="q11" d="M2854 2553l35-36 20-14-35 37z"/>
<path class="q3" d="M4060 2706l35 11 20-14-35-11z"/>
<path class="q23" d="M3178 2292l35 14 20-14-35-14z"/>
<path class="q2" d="M2296 2717l35 4 20-13-35-3z"/>
<path class="qf" d="M3502 2536l35 47 20-20-35-51z"/>
<path class="q6" d="M2620 2673l35-5 20-14-35 6z"/>
<path class="q5" d="M3826 2679l34 17 20-15-34-18z"/>
<path class="q19" d="M2944 2459l35-45 20-13-35 45z"/>
<path class="q2" d="M4149 2714l35 11 20-14-35-10z"/>
<path class="q1" d="M2062 2729l35 6 20-12-35-6z"/>
<path class="q20" d="M3268 2321l34 43 21-17-35-43z"/>
<path class="q3" d="M2386 2712l35 2 20-13-35-2z"/>
<path class="qa" d="M3591 2604l35 33 20-17-34-36z"/>
<path class="q9" d="M2710 2645l35-14 20-15-35 15z"/>
<path class="q4" d="M3915 2696l35 13 20-14-35-14z"/>
<path class="q20" d="M3034 2361l34-29 20-12-34 29z"/>
<path class="q2" d="M4239 2721l35 10 20-13-35-10z"/>
<path class="q2" d="M2152 2728l35 5 20-13-35-4z"/>
<path class="q1a" d="M3357 2401l35 60 20-20-35-61z"/>
<path class="q4" d="M2476 2703l34 1 21-13-35-1z"/>
<path class="q7" d="M3681 2648l35 24 20-16-35-26z"/>
<path class="qd" d="M2799 2596l35-27 20-16-34 29z"/>
<path class="q3" d="M4005 2708l35 12 20-14-35-12z"/>
<path class="q23" d="M3123 2305l35-1 20-12-35 1z"/>
<path class="q2" d="M2242 2725l34 5 20-13-34-4z"/>
<path class="q12" d="M3447 2502l35 53 20-19-35-57z"/>
<path class="q5" d="M2565 2690l35-3 20-14-35 3z"/>
<path class="q6" d="M3771 2677l35 17 20-15-35-19z"/>
<path class="q14" d="M2889 2517l35-42 20-16-35 44z"/>
<path class="q3" d="M4095 2717l34 11 20-14-34-11z"/>
<path class="q1" d="M2007 2736l35 6 20-13-35-5z"/>
<path class="q22" d="M3213 2306l35 29 20-14-35-29z"/>
<path class="q3" d="M2331 2721l35 4 20-13-35-4z"/>
<path class="qc" d="M3537 2583l34 39 20-18-34-41z"/>
<path class="q7" d="M2655 2668l35-8 20-15-35 9z"/>
<path class="q4" d="M3860 2696l35 14 20-14-35-15z"/>
<path class="q1c" d="M2979 2414l35-39 20-14-35 40z"/>
<path class="q2" d="M4184 2725l35 9 20-13-35-10z"/>
<path class="q1" d="M2097 2735l35 5 20-12-35-5z"/>
<path class="q1d" d="M3302 2364l35 54 20-17-34-54z"/>
<path class="q3" d="M2421 2714l35 2 20-13-35-2z"/>
<path class="q9" d="M3626 2637l35 27 20-16-35-28z"/>
<path class="qb" d="M2745 2631l34-19 20-16-34 20z"/>
<path class="q3" d="M3950 2709l35 13 20-14-35-13z"/>
<path class="q22" d="M3068 2332l35-15 20-12-35 15z"/>
<path class="q2" d="M2187 2733l34 5 21-13-35-5z"/>
<path class="q15" d="M3392 2461l35 59 20-18-35-61z"/>
<path class="q4" d="M2510 2704l35 0 20-14-34 1z"/>
<path class="q6" d="M3716 2672l35 19 20-14-35-21z"/>
<path class="q10" d="M2834 2569l35-34 20-18-35 36z"/>
<path class="q3" d="M4040 2720l34 10 21-13-35-11z"/>
<path class="q23" d="M3158 2304l35 14 20-12-35-14z"/>
<path class="q2" d="M2276 2730l35 4 20-13-35-4z"/>
<path class="qf" d="M3482 2555l35 46 20-18-35-47z"/>
<path class="q6" d="M2600 2687l35-4 20-15-35 5z"/>
<path class="q5" d="M3806 2694l34 16 20-14-34-17z"/>
<path class="q18" d="M2924 2475l35-44 20-17-35 45z"/>
<path class="q2" d="M4129 2728l35 10 20-13-35-11z"/>
<path class="q1" d="M2042 2742l35 5 20-12-35-6z"/>
<path class="q20" d="M3248 2335l34 43 20-14-34-43z"/>
<path class="q3" d="M2366 2725l35 3 20-14-35-2z"/>
<path class="qa" d="M3571 2622l35 31 20-16-35-33z"/>
<path class="q9" d="M2690 2660l35-13 20-16-35 14z"/>
<path class="q4" d="M3895 2710l35 13 20-14-35-13z"/>
<path class="q20" d="M3014 2375l34-29 20-14-34 29z"/>
<path class="q2" d="M4219 2734l35 9 20-12-35-10z"/>
<path class="q2" d="M2132 2740l35 5 20-12-35-5z"/>
<path class="q19" d="M3337 2418l35 59 20-16-35-60z"/>
<path class="q4" d="M2456 2716l34 2 20-14-34-1z"/>
<path class="q7" d="M3661 2664l35 22 20-14-35-24z"/>
<path class="qd" d="M2779 2612l35-25 20-18-35 27z"/>
<path class="q3" d="M3985 2722l35 11 20-13-35-12z"/>
<path class="q23" d="M3103 2317l35-1 20-12-35 1z"/>
<path class="q2" d="M2221 2738l35 4 20-12-34-5z"/>
<path class="q11" d="M3427 2520l35 52 20-17-35-53z"/>
<path class="q5" d="M2545 2704l35-2 20-15-35 3z"/>
<path class="q5" d="M3751 2691l34 17 21-14-35-17z"/>
<path class="q14" d="M2869 2535l35-41 20-19-35 42z"/>
<path class="q2" d="M4074 2730l35 11 20-13-34-11z"/>
<path class="q1" d="M1987 2748l35 6 20-12-35-6z"/>
<path class="q22" d="M3193 2318l35 29 20-12-35-29z"/>
<path class="q2" d="M2311 2734l35 4 20-13-35-4z"/>
<path class="qc" d="M3517 2601l34 36 20-15-34-39z"/>
<path class="q7" d="M2635 2683l35-8 20-15-35 8z"/>
<path class="q4" d="M3840 2710l35 14 20-14-35-14z"/>
<path class="q1c" d="M2959 2431l34-39 21-17-35 39z"/>
<path class="q2" d="M4164 2738l35 9 20-13-35-9z"/>
<path class="q1" d="M2077 2747l35 6 20-13-35-5z"/>
<path class="q1d" d="M3282 2378l35 53 20-13-35-54z"/>
<path class="q3" d="M2401 2728l35 2 20-14-35-2z"/>
<path class="q8" d="M3606 2653l35 26 20-15-35-27z"/>
<path class="qa" d="M2725 2647l34-17 20-18-34 19z"/>
<path class="q3" d="M3930 2723l35 12 20-13-35-13z"/>
<path class="q22" d="M3048 2346l35-16 20-13-35 15z"/>
<path class="q2" d="M2167 2745l34 5 20-12-34-5z"/>
<path class="q15" d="M3372 2477l35 57 20-14-35-59z"/>
<path class="q4" d="M2490 2718l35 0 20-14-35 0z"/>
<path class="q6" d="M3696 2686l35 19 20-14-35-19z"/>
<path class="q10" d="M2814 2587l35-32 20-20-35 34z"/>
<path class="q3" d="M4020 2733l34 10 20-13-34-10z"/>
<path class="q23" d="M3138 2316l35 14 20-12-35-14z"/>
<path class="q2" d="M2256 2742l35 5 20-13-35-4z"/>
<path class="qe" d="M3462 2572l34 43 21-14-35-46z"/>
<path class="q6" d="M2580 2702l35-4 20-15-35 4z"/>
<path class="q5" d="M3785 2708l35 15 20-13-34-16z"/>
<path class="q18" d="M2904 2494l35-42 20-21-35 44z"/>
<path class="q2" d="M4109 2741l35 9 20-12-35-10z"/>
<path class="q1" d="M2022 2754l35 6 20-13-35-5z"/>
<path class="q20" d="M3228 2347l34 43 20-12-34-43z"/>
<path class="q3" d="M2346 2738l35 3 20-13-35-3z"/>
<path class="qa" d="M3551 2637l35 30 20-14-35-31z"/>
<path class="q8" d="M2670 2675l34-10 21-18-35 13z"/>
<path class="q4" d="M3875 2724l35 12 20-13-35-13z"/>
<path class="q1f" d="M2993 2392l35-29 20-17-34 29z"/>
<path class="q2" d="M4199 2747l35 9 20-13-35-9z"/>
<path class="q2" d="M2112 2753l35 5 20-13-35-5z"/>
<path class="q19" d="M3317 2431l35 59 20-13-35-59z"/>
<path class="q4" d="M2436 2730l34 2 20-14-34-2z"/>
<path class="q7" d="M3641 2679l35 21 20-14-35-22z"/>
<path class="qd" d="M2759 2630l35-22 20-21-35 25z"/>
<path class="q3" d="M3965 2735l35 11 20-13-35-11z"/>
<path class="q23" d="M3083 2330l35 0 20-14-35 1z"/>
<path class="q2" d="M2201 2750l35 5 20-13-35-4z"/>
<path class="q11" d="M3407 2534l35 52 20-14-35-52z"/>
<path class="q5" d="M2525 2718l35-1 20-15-35 2z"/>
<path class="q5" d="M3731 2705l34 17 20-14-34-17z"/>
<path class="q13" d="M2849 2555l35-38 20-23-35 41z"/>
<path class="q2" d="M4054 2743l35 10 20-12-35-11z"/>
<path class="q1" d="M1967 2760l35 6 20-12-35-6z"/>
<path class="q22" d="M3173 2330l34 29 21-12-35-29z"/>
<path class="q2" d="M2291 2747l35 4 20-13-35-4z"/>
<path class="qc" d="M3496 2615l35 36 20-14-34-36z"/>
<path class="q7" d="M2615 2698l35-6 20-17-35 8z"/>
<path class="q4" d="M3820 2723l35 14 20-13-35-14z"/>
<path class="q1c" d="M2939 2452l34-39 20-21-34 39z"/>
<path class="q2" d="M4144 2750l35 10 20-13-35-9z"/>
<path class="q1" d="M2057 2760l35 5 20-12-35-6z"/>
<path class="q1d" d="M3262 2390l35 53 20-12-35-53z"/>
<path class="q3" d="M2381 2741l34 3 21-14-35-2z"/>
<path class="q8" d="M3586 2667l35 25 20-13-35-26z"/>
<path class="qa" d="M2704 2665l35-15 20-20-34 17z"/>
<path class="q3" d="M3910 2736l35 12 20-13-35-12z"/>
<path class="q22" d="M3028 2363l35-15 20-18-35 16z"/>
<path class="q2" d="M2147 2758l34 5 20-13-34-5z"/>
<path class="q15" d="M3352 2490l35 57 20-13-35-57z"/>
<path class="q4" d="M2470 2732l35 0 20-14-35 0z"/>
<path class="q6" d="M3676 2700l35 18 20-13-35-19z"/>
<path class="qf" d="M2794 2608l35-29 20-24-35 32z"/>
<path class="q3" d="M4000 2746l34 10 20-13-34-10z"/>
<path class="q23" d="M3118 2330l35 14 20-14-35-14z"/>
<path class="q2" d="M2236 2755l35 5 20-13-35-5z"/>
<path class="qe" d="M3442 2586l34 43 20-14-34-43z"/>
<path class="q6" d="M2560 2717l35-3 20-16-35 4z"/>
<path class="q4" d="M3765 2722l35 14 20-13-35-15z"/>
<path class="q17" d="M2884 2517l34-39 21-26-35 42z"/>
<path class="q2" d="M4089 2753l35 10 20-13-35-9z"/>
<path class="q1" d="M2002 2766l35 6 20-12-35-6z"/>
<path class="q20" d="M3207 2359l35 43 20-12-34-43z"/>
<path class="q3" d="M2326 2751l35 3 20-13-35-3z"/>
<path class="q9" d="M3531 2651l35 30 20-14-35-30z"/>
<path class="q8" d="M2650 2692l34-9 20-18-34 10z"/>
<path class="q3" d="M3855 2737l35 12 20-13-35-12z"/>
<path class="q1f" d="M2973 2413l35-28 20-22-35 29z"/>
<path class="q2" d="M4179 2760l35 8 20-12-35-9z"/>
<path class="q1" d="M2092 2765l34 6 21-13-35-5z"/>
<path class="q19" d="M3297 2443l35 59 20-12-35-59z"/>
<path class="q3" d="M2415 2744l35 2 20-14-34-2z"/>
<path class="q7" d="M3621 2692l35 21 20-13-35-21z"/>
<path class="qc" d="M2739 2650l35-19 20-23-35 22z"/>
<path class="q3" d="M3945 2748l34 10 21-12-35-11z"/>
<path class="q23" d="M3063 2348l35-1 20-17-35 0z"/>
<path class="q2" d="M2181 2763l35 5 20-13-35-5z"/>
<path class="q11" d="M3387 2547l35 51 20-12-35-52z"/>
<path class="q5" d="M2505 2732l35 0 20-15-35 1z"/>
<path class="q5" d="M3711 2718l34 16 20-12-34-17z"/>
<path class="q12" d="M2829 2579l35-34 20-28-35 38z"/>
<path class="q2" d="M4034 2756l35 10 20-13-35-10z"/>
<path class="q1" d="M1947 2773l35 6 20-13-35-6z"/>
<path class="q22" d="M3153 2344l34 29 20-14-34-29z"/>
<path class="q2" d="M2271 2760l35 4 20-13-35-4z"/>
<path class="qb" d="M3476 2629l35 35 20-13-35-36z"/>
<path class="q6" d="M2595 2714l34-4 21-18-35 6z"/>
<path class="q4" d="M3800 2736l35 13 20-12-35-14z"/>
<path class="q1b" d="M2918 2478l35-37 20-28-34 39z"/>
<path class="q2" d="M4124 2763l35 9 20-12-35-10z"/>
<path class="q1" d="M2037 2772l35 6 20-13-35-5z"/>
<path class="q1d" d="M3242 2402l35 53 20-12-35-53z"/>
<path class="q3" d="M2361 2754l34 4 20-14-34-3z"/>
<path class="q8" d="M3566 2681l35 24 20-13-35-25z"/>
<path class="q9" d="M2684 2683l35-12 20-21-35 15z"/>
<path class="q3" d="M3890 2749l35 11 20-12-35-12z"/>
<path class="q21" d="M3008 2385l35-15 20-22-35 15z"/>
<path class="q2" d="M2126 2771l35 5 20-13-34-5z"/>
<path class="q15" d="M3332 2502l35 57 20-12-35-57z"/>
<path class="q4" d="M2450 2746l35 1 20-15-35 0z"/>
<path class="q6" d="M3656 2713l34 18 21-13-35-18z"/>
<path class="qe" d="M2774 2631l35-25 20-27-35 29z"/>
<path class="q2" d="M3979 2758l35 10 20-12-34-10z"/>
<path class="q23" d="M3098 2347l35 14 20-17-35-14z"/>
<path class="q2" d="M2216 2768l35 5 20-13-35-5z"/>
<path class="qe" d="M3422 2598l34 43 20-12-34-43z"/>
<path class="q5" d="M2540 2732l35-1 20-17-35 3z"/>
<path class="q4" d="M3745 2734l35 15 20-13-35-14z"/>
<path class="q16" d="M2864 2545l34-36 20-31-34 39z"/>
<path class="q2" d="M4069 2766l35 9 20-12-35-10z"/>
<path class="q1" d="M1982 2779l35 6 20-13-35-6z"/>
<path class="q20" d="M3187 2373l35 42 20-13-35-43z"/>
<path class="q2" d="M2306 2764l34 4 21-14-35-3z"/>
<path class="q9" d="M3511 2664l35 29 20-12-35-30z"/>
<path class="q7" d="M2629 2710l35-7 20-20-34 9z"/>
<path class="q3" d="M3835 2749l35 12 20-12-35-12z"/>
<path class="q1e" d="M2953 2441l35-27 20-29-35 28z"/>
<path class="q2" d="M4159 2772l35 9 20-13-35-8z"/>
<path class="q1" d="M2072 2778l34 5 20-12-34-6z"/>
<path class="q19" d="M3277 2455l35 59 20-12-35-59z"/>
<path class="q3" d="M2395 2758l35 2 20-14-35-2z"/>
<path class="q7" d="M3601 2705l35 21 20-13-35-21z"/>
<path class="qb" d="M2719 2671l35-16 20-24-35 19z"/>
<path class="q3" d="M3925 2760l34 11 20-13-34-10z"/>
<path class="q22" d="M3043 2370l35 0 20-23-35 1z"/>
<path class="q2" d="M2161 2776l35 5 20-13-35-5z"/>
<path class="q11" d="M3367 2559l34 51 21-12-35-51z"/>
<path class="q4" d="M2485 2747l35 1 20-16-35 0z"/>
<path class="q5" d="M3690 2731l35 16 20-13-34-16z"/>
<path class="q11" d="M2809 2606l35-29 20-32-35 34z"/>
<path class="q2" d="M4014 2768l35 10 20-12-35-10z"/>
<path class="q1" d="M1927 2785l35 6 20-12-35-6z"/>
<path class="q22" d="M3133 2361l34 29 20-17-34-29z"/>
<path class="q2" d="M2251 2773l35 4 20-13-35-4z"/>
<path class="qb" d="M3456 2641l35 35 20-12-35-35z"/>
<path class="q6" d="M2575 2731l34-3 20-18-34 4z"/>
<path class="q4" d="M3780 2749l35 13 20-13-35-13z"/>
<path class="q19" d="M2898 2509l35-33 20-35-35 37z"/>
<path class="q2" d="M4104 2775l35 9 20-12-35-9z"/>
<path class="q1" d="M2017 2785l34 5 21-12-35-6z"/>
<path class="q1c" d="M3222 2415l35 53 20-13-35-53z"/>
<path class="q3" d="M2340 2768l35 3 20-13-34-4z"/>
<path class="q8" d="M3546 2693l35 24 20-12-35-24z"/>
<path class="q9" d="M2664 2703l35-10 20-22-35 12z"/>
<path class="q3" d="M3870 2761l35 11 20-12-35-11z"/>
<path class="q20" d="M2988 2414l35-14 20-30-35 15z"/>
<path class="q2" d="M2106 2783l35 6 20-13-35-5z"/>
<path class="q15" d="M3312 2514l35 57 20-12-35-57z"/>
<path class="q4" d="M2430 2760l35 2 20-15-35-1z"/>
<path class="q6" d="M3636 2726l34 17 20-12-34-18z"/>
<path class="qd" d="M2754 2655l35-20 20-29-35 25z"/>
<path class="q2" d="M3959 2771l35 10 20-13-35-10z"/>
<path class="q22" d="M3078 2370l34 14 21-23-35-14z"/>
<path class="q2" d="M2196 2781l35 5 20-13-35-5z"/>
<path class="qe" d="M3401 2610l35 43 20-12-34-43z"/>
<path class="q5" d="M2520 2748l35-1 20-16-35 1z"/>
<path class="q4" d="M3725 2747l35 14 20-12-35-15z"/>
<path class="q14" d="M2844 2577l34-31 20-37-34 36z"/>
<path class="q2" d="M4049 2778l35 9 20-12-35-9z"/>
<path class="q1" d="M1962 2791l35 6 20-12-35-6z"/>
<path class="q1f" d="M3167 2390l35 42 20-17-35-42z"/>
<path class="q2" d="M2286 2777l34 5 20-14-34-4z"/>
<path class="q9" d="M3491 2676l35 29 20-12-35-29z"/>
<path class="q7" d="M2609 2728l35-5 20-20-35 7z"/>
<path class="q3" d="M3815 2762l35 11 20-12-35-12z"/>
<path class="q1c" d="M2933 2476l35-25 20-37-35 27z"/>
<path class="q2" d="M4139 2784l34 9 21-12-35-9z"/>
<path class="q1" d="M2051 2790l35 6 20-13-34-5z"/>
<path class="q19" d="M3257 2468l35 59 20-13-35-59z"/>
<path class="q3" d="M2375 2771l35 4 20-15-35-2z"/>
<path class="q7" d="M3581 2717l35 21 20-12-35-21z"/>
<path class="qa" d="M2699 2693l35-12 20-26-35 16z"/>
<path class="q3" d="M3905 2772l34 11 20-12-34-11z"/>
<path class="q21" d="M3023 2400l35-1 20-29-35 0z"/>
<path class="q2" d="M2141 2789l35 5 20-13-35-5z"/>
<path class="q11" d="M3347 2571l34 51 20-12-34-51z"/>
<path class="q4" d="M2465 2762l35 2 20-16-35-1z"/>
<path class="q5" d="M3670 2743l35 16 20-12-35-16z"/>
<path class="q10" d="M2789 2635l34-23 21-35-35 29z"/>
<path class="q2" d="M3994 2781l35 9 20-12-35-10z"/>
<path class="q1" d="M1907 2797l35 6 20-12-35-6z"/>
<path class="q21" d="M3112 2384l35 28 20-22-34-29z"/>
<path class="q2" d="M2231 2786l35 5 20-14-35-4z"/>
<path class="qb" d="M3436 2653l35 35 20-12-35-35z"/>
<path class="q6" d="M2555 2747l34-1 20-18-34 3z"/>
<path class="q4" d="M3760 2761l35 13 20-12-35-13z"/>
<path class="q17" d="M2878 2546l35-29 20-41-35 33z"/>
<path class="q2" d="M4084 2787l35 9 20-12-35-9z"/>
<path class="q1" d="M1997 2797l34 6 20-13-34-5z"/>
<path class="q1c" d="M3202 2432l35 53 20-17-35-53z"/>
<path class="q3" d="M2320 2782l35 4 20-15-35-3z"/>
<path class="q8" d="M3526 2705l35 24 20-12-35-24z"/>
<path class="q8" d="M2644 2723l35-7 20-23-35 10z"/>
<path class="q3" d="M3850 2773l34 12 21-13-35-11z"/>
<path class="q1e" d="M2968 2451l35-14 20-37-35 14z"/>
<path class="q1" d="M2086 2796l35 5 20-12-35-6z"/>
<path class="q15" d="M3292 2527l35 57 20-13-35-57z"/>
<path class="q3" d="M2410 2775l35 2 20-15-35-2z"/>
<path class="q6" d="M3616 2738l34 17 20-12-34-17z"/>
<path class="qc" d="M2734 2681l35-15 20-31-35 20z"/>
<path class="q2" d="M3939 2783l35 10 20-12-35-10z"/>
<path class="q21" d="M3058 2399l34 14 20-29-34-14z"/>
<path class="q2" d="M2176 2794l35 5 20-13-35-5z"/>
<path class="qe" d="M3381 2622l35 43 20-12-35-43z"/>
<path class="q5" d="M2500 2764l34 0 21-17-35 1z"/>
<path class="q4" d="M3705 2759l35 14 20-12-35-14z"/>
<path class="q12" d="M2823 2612l35-25 20-41-34 31z"/>
<path class="q2" d="M4029 2790l35 9 20-12-35-9z"/>
<path class="q1" d="M1942 2803l35 6 20-12-35-6z"/>
<path class="q1f" d="M3147 2412l35 42 20-22-35-42z"/>
<path class="q2" d="M2266 2791l34 4 20-13-34-5z"/>
<path class="q9" d="M3471 2688l35 29 20-12-35-29z"/>
<path class="q6" d="M2589 2746l35-3 20-20-35 5z"/>
<path class="q3" d="M3795 2774l35 12 20-13-35-11z"/>
<path class="q1a" d="M2913 2517l35-22 20-44-35 25z"/>
<path class="q2" d="M4119 2796l34 9 20-12-34-9z"/>
<path class="q1" d="M2031 2803l35 6 20-13-35-6z"/>
<path class="q18" d="M3237 2485l35 58 20-16-35-59z"/>
<path class="q3" d="M2355 2786l35 3 20-14-35-4z"/>
<path class="q7" d="M3561 2729l34 21 21-12-35-21z"/>
<path class="q9" d="M2679 2716l35-9 20-26-35 12z"/>
<path class="q3" d="M3884 2785l35 10 20-12-34-11z"/>
<path class="q1f" d="M3003 2437l35 0 20-38-35 1z"/>
<path class="q2" d="M2121 2801l35 6 20-13-35-5z"/>
<path class="q11" d="M3327 2584l34 50 20-12-34-51z"/>
<path class="q4" d="M2445 2777l35 3 20-16-35-2z"/>
<path class="q5" d="M3650 2755l35 16 20-12-35-16z"/>
<path class="qe" d="M2769 2666l34-18 20-36-34 23z"/>
<path class="q2" d="M3974 2793l35 9 20-12-35-9z"/>
<path class="q1" d="M1887 2810l35 6 20-13-35-6z"/>
<path class="q20" d="M3092 2413l35 28 20-29-35-28z"/>
<path class="q2" d="M2211 2799l34 5 21-13-35-5z"/>
<path class="qb" d="M3416 2665l35 35 20-12-35-35z"/>
<path class="q5" d="M2534 2764l35 0 20-18-34 1z"/>
<path class="q4" d="M3740 2773l35 13 20-12-35-13z"/>
<path class="q15" d="M2858 2587l35-23 20-47-35 29z"/>
<path class="q2" d="M4064 2799l34 9 21-12-35-9z"/>
<path class="q1" d="M1977 2809l34 6 20-12-34-6z"/>
<path class="q1c" d="M3182 2454l35 52 20-21-35-53z"/>
<path class="q2" d="M2300 2795l35 5 20-14-35-4z"/>
<path class="q8" d="M3506 2717l35 24 20-12-35-24z"/>
<path class="q7" d="M2624 2743l35-4 20-23-35 7z"/>
<path class="q3" d="M3830 2786l34 10 20-11-34-12z"/>
<path class="q1c" d="M2948 2495l35-12 20-46-35 14z"/>
<path class="q1" d="M2066 2809l35 5 20-13-35-5z"/>
<path class="q14" d="M3272 2543l34 55 21-14-35-57z"/>
<path class="q3" d="M2390 2789l35 3 20-15-35-2z"/>
<path class="q6" d="M3595 2750l35 17 20-12-34-17z"/>
<path class="qb" d="M2714 2707l35-11 20-30-35 15z"/>
<path class="q2" d="M3919 2795l35 10 20-12-35-10z"/>
<path class="q1f" d="M3038 2437l34 14 20-38-34-14z"/>
<path class="q2" d="M2156 2807l35 5 20-13-35-5z"/>
<path class="qe" d="M3361 2634l35 43 20-12-35-43z"/>
<path class="q4" d="M2480 2780l34 1 20-17-34 0z"/>
<path class="q4" d="M3685 2771l35 14 20-12-35-14z"/>
<path class="q10" d="M2803 2648l35-19 20-42-35 25z"/>
<path class="q2" d="M4009 2802l35 9 20-12-35-9z"/>
<path class="q1" d="M1922 2816l34 6 21-13-35-6z"/>
<path class="q1e" d="M3127 2441l35 41 20-28-35-42z"/>
<path class="q2" d="M2245 2804l35 5 20-14-34-4z"/>
<path class="q9" d="M3451 2700l35 29 20-12-35-29z"/>
<path class="q6" d="M2569 2764l35-1 20-20-35 3z"/>
<path class="q3" d="M3775 2786l34 11 21-11-35-12z"/>
<path class="q17" d="M2893 2564l35-19 20-50-35 22z"/>
<path class="q2" d="M4098 2808l35 9 20-12-34-9z"/>
<path class="q1" d="M2011 2815l35 6 20-12-35-6z"/>
<path class="q18" d="M3217 2506l35 56 20-19-35-58z"/>
<path class="q3" d="M2335 2800l35 4 20-15-35-3z"/>
<path class="q7" d="M3541 2741l34 20 20-11-34-21z"/>
<path class="q8" d="M2659 2739l35-6 20-26-35 9z"/>
<path class="q3" d="M3864 2796l35 11 20-12-35-10z"/>
<path class="q1d" d="M2983 2483l34 0 21-46-35 0z"/>
<path class="q1" d="M2101 2814l35 6 20-13-35-6z"/>
<path class="q11" d="M3306 2598l35 50 20-14-34-50z"/>
<path class="q3" d="M2425 2792l35 3 20-15-35-3z"/>
<path class="q5" d="M3630 2767l35 16 20-12-35-16z"/>
<path class="qc" d="M2749 2696l34-12 20-36-34 18z"/>
<path class="q2" d="M3954 2805l35 9 20-12-35-9z"/>
<path class="q1" d="M1867 2822l35 6 20-12-35-6z"/>
<path class="q1e" d="M3072 2451l35 27 20-37-35-28z"/>
<path class="q2" d="M2191 2812l34 5 20-13-34-5z"/>
<path class="qb" d="M3396 2677l35 35 20-12-35-35z"/>
<path class="q5" d="M2514 2781l35 1 20-18-35 0z"/>
<path class="q4" d="M3720 2785l35 13 20-12-35-13z"/>
<path class="q12" d="M2838 2629l35-17 20-48-35 23z"/>
<path class="q2" d="M4044 2811l34 9 20-12-34-9z"/>
<path class="q1" d="M1956 2822l35 6 20-13-34-6z"/>
<path class="q1b" d="M3162 2482l35 50 20-26-35-52z"/>
<path class="q2" d="M2280 2809l35 5 20-14-35-5z"/>
<path class="q8" d="M3486 2729l34 24 21-12-35-24z"/>
<path class="q6" d="M2604 2763l35-2 20-22-35 4z"/>
<path class="q3" d="M3809 2797l35 11 20-12-34-10z"/>
<path class="q19" d="M2928 2545l35-9 20-53-35 12z"/>
<path class="q1" d="M2046 2821l35 6 20-13-35-5z"/>
<path class="q14" d="M3252 2562l34 54 20-18-34-55z"/>
<path class="q3" d="M2370 2804l35 3 20-15-35-3z"/>
<path class="q6" d="M3575 2761l35 18 20-12-35-17z"/>
<path class="q9" d="M2694 2733l34-7 21-30-35 11z"/>
<path class="q2" d="M3899 2807l35 10 20-12-35-10z"/>
<path class="q1d" d="M3017 2483l35 14 20-46-34-14z"/>
<path class="q2" d="M2136 2820l35 5 20-13-35-5z"/>
<path class="qe" d="M3341 2648l35 42 20-13-35-43z"/>
<path class="q4" d="M2460 2795l34 3 20-17-34-1z"/>
<path class="q4" d="M3665 2783l35 14 20-12-35-14z"/>
<path class="qe" d="M2783 2684l35-13 20-42-35 19z"/>
<path class="q2" d="M3989 2814l35 9 20-12-35-9z"/>
<path class="q1" d="M1902 2828l34 6 20-12-34-6z"/>
<path class="q1c" d="M3107 2478l35 39 20-35-35-41z"/>
<path class="q2" d="M2225 2817l35 6 20-14-35-5z"/>
<path class="q9" d="M3431 2712l35 29 20-12-35-29z"/>
<path class="q5" d="M2549 2782l35 0 20-19-35 1z"/>
<path class="q3" d="M3755 2798l34 11 20-12-34-11z"/>
<path class="q14" d="M2873 2612l35-13 20-54-35 19z"/>
<path class="q2" d="M4078 2820l35 9 20-12-35-9z"/>
<path class="q1" d="M1991 2828l35 6 20-13-35-6z"/>
<path class="q17" d="M3197 2532l34 53 21-23-35-56z"/>
<path class="q2" d="M2315 2814l35 4 20-14-35-4z"/>
<path class="q7" d="M3520 2753l35 20 20-12-34-20z"/>
<path class="q7" d="M2639 2761l35-3 20-25-35 6z"/>
<path class="q3" d="M3844 2808l35 11 20-12-35-11z"/>
<path class="q1a" d="M2963 2536l34 1 20-54-34 0z"/>
<path class="q1" d="M2081 2827l35 6 20-13-35-6z"/>
<path class="q10" d="M3286 2616l35 48 20-16-35-50z"/>
<path class="q3" d="M2405 2807l34 4 21-16-35-3z"/>
<path class="q5" d="M3610 2779l35 15 20-11-35-16z"/>
<path class="qb" d="M2728 2726l35-8 20-34-34 12z"/>
<path class="q2" d="M3934 2817l35 9 20-12-35-9z"/>
<path class="q1" d="M1847 2834l35 7 20-13-35-6z"/>
<path class="q1c" d="M3052 2497l35 25 20-44-35-27z"/>
<path class="q2" d="M2171 2825l34 6 20-14-34-5z"/>
<path class="qb" d="M3376 2690l35 35 20-13-35-35z"/>
<path class="q4" d="M2494 2798l35 2 20-18-35-1z"/>
<path class="q4" d="M3700 2797l35 12 20-11-35-13z"/>
<path class="q10" d="M2818 2671l35-12 20-47-35 17z"/>
<path class="q2" d="M4024 2823l34 9 20-12-34-9z"/>
<path class="q1" d="M1936 2834l35 7 20-13-35-6z"/>
<path class="q19" d="M3142 2517l35 46 20-31-35-50z"/>
<path class="q2" d="M2260 2823l35 5 20-14-35-5z"/>
<path class="q8" d="M3466 2741l34 24 20-12-34-24z"/>
<path class="q6" d="M2584 2782l35 0 20-21-35 2z"/>
<path class="q3" d="M3789 2809l35 11 20-12-35-11z"/>
<path class="q16" d="M2908 2599l35-7 20-56-35 9z"/>
<path class="q1" d="M2026 2834l35 6 20-13-35-6z"/>
<path class="q13" d="M3231 2585l35 51 20-20-34-54z"/>
<path class="q3" d="M2350 2818l35 4 20-15-35-3z"/>
<path class="q6" d="M3555 2773l35 18 20-12-35-18z"/>
<path class="q8" d="M2674 2758l34-4 20-28-34 7z"/>
<path class="q2" d="M3879 2819l35 9 20-11-35-10z"/>
<path class="q1a" d="M2997 2537l35 12 20-52-35-14z"/>
<path class="q1" d="M2116 2833l34 6 21-14-35-5z"/>
<path class="qd" d="M3321 2664l35 41 20-15-35-42z"/>
<path class="q3" d="M2439 2811l35 3 20-16-34-3z"/>
<path class="q4" d="M3645 2794l35 14 20-11-35-14z"/>
<path class="qc" d="M2763 2718l35-8 20-39-35 13z"/>
<path class="q2" d="M3969 2826l34 9 21-12-35-9z"/>
<path class="q1" d="M1882 2841l34 6 20-13-34-6z"/>
<path class="q1a" d="M3087 2522l35 36 20-41-35-39z"/>
<path class="q2" d="M2205 2831l35 5 20-13-35-6z"/>
<path class="q9" d="M3411 2725l35 28 20-12-35-29z"/>
<path class="q5" d="M2529 2800l35 1 20-19-35 0z"/>
<path class="q3" d="M3735 2809l34 12 20-12-34-11z"/>
<path class="q11" d="M2853 2659l35-8 20-52-35 13z"/>
<path class="q2" d="M4058 2832l35 9 20-12-35-9z"/>
<path class="q1" d="M1971 2841l35 6 20-13-35-6z"/>
<path class="q16" d="M3177 2563l34 50 20-28-34-53z"/>
<path class="q2" d="M2295 2828l35 4 20-14-35-4z"/>
<path class="q6" d="M3500 2765l35 20 20-12-35-20z"/>
<path class="q6" d="M2619 2782l35-1 20-23-35 3z"/>
<path class="q3" d="M3824 2820l35 10 20-11-35-11z"/>
<path class="q17" d="M2943 2592l34 2 20-57-34-1z"/>
<path class="q1" d="M2061 2840l35 6 20-13-35-6z"/>
<path class="q10" d="M3266 2636l35 46 20-18-35-48z"/>
<path class="q3" d="M2385 2822l34 4 20-15-34-4z"/>
<path class="q5" d="M3590 2791l35 15 20-12-35-15z"/>
<path class="q9" d="M2708 2754l35-4 20-32-35 8z"/>
<path class="q2" d="M3914 2828l35 10 20-12-35-9z"/>
<path class="q1" d="M1827 2847l34 6 21-12-35-7z"/>
<path class="q19" d="M3032 2549l35 24 20-51-35-25z"/>
<path class="q2" d="M2150 2839l35 5 20-13-34-6z"/>
<path class="qb" d="M3356 2705l35 33 20-13-35-35z"/>
<path class="q4" d="M2474 2814l35 3 20-17-35-2z"/>
<path class="q4" d="M3680 2808l34 13 21-12-35-12z"/>
<path class="qd" d="M2798 2710l35-6 20-45-35 12z"/>
<path class="q2" d="M4003 2835l35 9 20-12-34-9z"/>
<path class="q1" d="M1916 2847l35 6 20-12-35-7z"/>
<path class="q17" d="M3122 2558l35 42 20-37-35-46z"/>
<path class="q2" d="M2240 2836l35 5 20-13-35-5z"/>
<path class="q8" d="M3446 2753l34 24 20-12-34-24z"/>
<path class="q5" d="M2564 2801l35 2 20-21-35 0z"/>
<path class="q3" d="M3769 2821l35 11 20-12-35-11z"/>
<path class="q12" d="M2888 2651l34-3 21-56-35 7z"/>
<path class="q1" d="M2006 2847l35 6 20-13-35-6z"/>
<path class="q12" d="M3211 2613l35 47 20-24-35-51z"/>
<path class="q2" d="M2330 2832l35 5 20-15-35-4z"/>
<path class="q6" d="M3535 2785l35 18 20-12-35-18z"/>
<path class="q7" d="M2654 2781l34-1 20-26-34 4z"/>
<path class="q2" d="M3859 2830l35 10 20-12-35-9z"/>
<path class="q17" d="M2977 2594l35 12 20-57-35-12z"/>
<path class="q1" d="M2096 2846l34 6 20-13-34-6z"/>
<path class="qd" d="M3301 2682l35 39 20-16-35-41z"/>
<path class="q3" d="M2419 2826l35 4 20-16-35-3z"/>
<path class="q4" d="M3625 2806l35 14 20-12-35-14z"/>
<path class="qa" d="M2743 2750l35-4 20-36-35 8z"/>
<path class="q2" d="M3949 2838l34 9 20-12-34-9z"/>
<path class="q1" d="M1861 2853l35 6 20-12-34-6z"/>
<path class="q17" d="M3067 2573l35 31 20-46-35-36z"/>
<path class="q2" d="M2185 2844l35 6 20-14-35-5z"/>
<path class="q9" d="M3391 2738l34 28 21-13-35-28z"/>
<path class="q4" d="M2509 2817l35 3 20-19-35-1z"/>
<path class="q3" d="M3714 2821l35 12 20-12-34-12z"/>
<path class="qe" d="M2833 2704l35-5 20-48-35 8z"/>
<path class="q2" d="M4038 2844l35 8 20-11-35-9z"/>
<path class="q1" d="M1951 2853l35 6 20-12-35-6z"/>
<path class="q14" d="M3157 2600l34 45 20-32-34-50z"/>
<path class="q2" d="M2275 2841l35 6 20-15-35-4z"/>
<path class="q6" d="M3480 2777l35 20 20-12-35-20z"/>
<path class="q6" d="M2599 2803l34 1 21-23-35 1z"/>
<path class="q3" d="M3804 2832l35 10 20-12-35-10z"/>
<path class="q13" d="M2922 2648l35 3 20-57-34-2z"/>
<path class="q1" d="M2041 2853l35 6 20-13-35-6z"/>
<path class="qf" d="M3246 2660l35 43 20-21-35-46z"/>
<path class="q3" d="M2365 2837l34 5 20-16-34-4z"/>
<path class="q5" d="M3570 2803l35 15 20-12-35-15z"/>
<path class="q8" d="M2688 2780l35-1 20-29-35 4z"/>
<path class="q2" d="M3894 2840l35 10 20-12-35-10z"/>
<path class="q1" d="M1807 2859l34 6 20-12-34-6z"/>
<path class="q16" d="M3012 2606l35 20 20-53-35-24z"/>
<path class="q1" d="M2130 2852l35 5 20-13-35-5z"/>
<path class="qb" d="M3336 2721l35 32 20-15-35-33z"/>
<path class="q3" d="M2454 2830l35 4 20-17-35-3z"/>
<path class="q4" d="M3660 2820l34 13 20-12-34-13z"/>
<path class="qb" d="M2778 2746l35-3 20-39-35 6z"/>
<path class="q2" d="M3983 2847l35 9 20-12-35-9z"/>
<path class="q1" d="M1896 2859l35 7 20-13-35-6z"/>
<path class="q15" d="M3102 2604l34 37 21-41-35-42z"/>
<path class="q2" d="M2220 2850l35 5 20-14-35-5z"/>
<path class="q8" d="M3425 2766l35 24 20-13-34-24z"/>
<path class="q4" d="M2544 2820l35 2 20-19-35-2z"/>
<path class="q3" d="M3749 2833l35 11 20-12-35-11z"/>
<path class="qf" d="M2868 2699l34 0 20-51-34 3z"/>
<path class="q1" d="M1986 2859l35 6 20-12-35-6z"/>
<path class="q11" d="M3191 2645l35 42 20-27-35-47z"/>
<path class="q2" d="M2310 2847l34 5 21-15-35-5z"/>
<path class="q6" d="M3515 2797l35 18 20-12-35-18z"/>
<path class="q6" d="M2633 2804l35 0 20-24-34 1z"/>
<path class="q2" d="M3839 2842l35 10 20-12-35-10z"/>
<path class="q13" d="M2957 2651l35 10 20-55-35-12z"/>
<path class="q1" d="M2076 2859l34 6 20-13-34-6z"/>
<path class="qd" d="M3281 2703l35 36 20-18-35-39z"/>
<path class="q3" d="M2399 2842l35 4 20-16-35-4z"/>
<path class="q4" d="M3605 2818l35 14 20-12-35-14z"/>
<path class="q9" d="M2723 2779l35-1 20-32-35 4z"/>
<path class="q2" d="M3929 2850l34 9 20-12-34-9z"/>
<path class="q1" d="M1841 2865l35 7 20-13-35-6z"/>
<path class="q14" d="M3047 2626l35 27 20-49-35-31z"/>
<path class="q2" d="M2165 2857l35 6 20-13-35-6z"/>
<path class="q9" d="M3371 2753l34 27 20-14-34-28z"/>
<path class="q4" d="M2489 2834l35 3 20-17-35-3z"/>
<path class="q3" d="M3694 2833l35 11 20-11-35-12z"/>
<path class="qc" d="M2813 2743l34-1 21-43-35 5z"/>
<path class="q2" d="M4018 2856l35 8 20-12-35-8z"/>
<path class="q1" d="M1931 2866l35 6 20-13-35-6z"/>
<path class="q12" d="M3136 2641l35 39 20-35-34-45z"/>
<path class="q2" d="M2255 2855l35 6 20-14-35-6z"/>
<path class="q6" d="M3460 2790l35 19 20-12-35-20z"/>
<path class="q5" d="M2579 2822l34 3 20-21-34-1z"/>
<path class="q3" d="M3784 2844l35 10 20-12-35-10z"/>
<path class="q10" d="M2902 2699l35 4 20-52-35-3z"/>
<path class="q1" d="M2021 2865l34 6 21-12-35-6z"/>
<path class="qe" d="M3226 2687l35 38 20-22-35-43z"/>
<path class="q2" d="M2344 2852l35 4 20-14-34-5z"/>
<path class="q5" d="M3550 2815l35 15 20-12-35-15z"/>
<path class="q7" d="M2668 2804l35 1 20-26-35 1z"/>
<path class="q2" d="M3874 2852l34 9 21-11-35-10z"/>
<path class="q1" d="M1787 2871l34 7 20-13-34-6z"/>
<path class="q12" d="M2992 2661l35 17 20-52-35-20z"/>
<path class="q1" d="M2110 2865l35 5 20-13-35-5z"/>
<path class="qa" d="M3316 2739l35 30 20-16-35-32z"/>
<path class="q3" d="M2434 2846l35 4 20-16-35-4z"/>
<path class="q4" d="M3640 2832l34 13 20-12-34-13z"/>
<path class="q9" d="M2758 2778l35 0 20-35-35 3z"/>
<path class="q2" d="M3963 2859l35 8 20-11-35-9z"/>
<path class="q1" d="M1876 2872l35 6 20-12-35-7z"/>
<path class="q12" d="M3082 2653l34 31 20-43-34-37z"/>
<path class="q2" d="M2200 2863l35 6 20-14-35-5z"/>
<path class="q7" d="M3405 2780l35 23 20-13-35-24z"/>
<path class="q4" d="M2524 2837l34 4 21-19-35-2z"/>
<path class="q3" d="M3729 2844l35 11 20-11-35-11z"/>
<path class="qd" d="M2847 2742l35 2 20-45-34 0z"/>
<path class="q1" d="M1966 2872l35 6 20-13-35-6z"/>
<path class="q10" d="M3171 2680l35 37 20-30-35-42z"/>
<path class="q2" d="M2290 2861l34 5 20-14-34-5z"/>
<path class="q5" d="M3495 2809l35 18 20-12-35-18z"/>
<path class="q5" d="M2613 2825l35 2 20-23-35 0z"/>
<path class="q2" d="M3819 2854l35 10 20-12-35-10z"/>
<path class="q10" d="M2937 2703l35 9 20-51-35-10z"/>
<path class="q1" d="M2055 2871l35 6 20-12-34-6z"/>
<path class="qc" d="M3261 2725l35 33 20-19-35-36z"/>
<path class="q3" d="M2379 2856l35 5 20-15-35-4z"/>
<path class="q4" d="M3585 2830l34 14 21-12-35-14z"/>
<path class="q7" d="M2703 2805l35 2 20-29-35 1z"/>
<path class="q2" d="M3908 2861l35 9 20-11-34-9z"/>
<path class="q1" d="M1821 2878l35 6 20-12-35-7z"/>
<path class="q11" d="M3027 2678l35 22 20-47-35-27z"/>
<path class="q1" d="M2145 2870l35 6 20-13-35-6z"/>
<path class="q9" d="M3351 2769l34 26 20-15-34-27z"/>
<path class="q3" d="M2469 2850l35 4 20-17-35-3z"/>
<path class="q3" d="M3674 2845l35 11 20-12-35-11z"/>
<path class="qa" d="M2793 2778l34 1 20-37-34 1z"/>
<path class="q2" d="M3998 2867l35 9 20-12-35-8z"/>
<path class="q1" d="M1911 2878l35 6 20-12-35-6z"/>
<path class="q10" d="M3116 2684l35 32 20-36-35-39z"/>
<path class="q2" d="M2235 2869l34 5 21-13-35-6z"/>
<path class="q6" d="M3440 2803l35 19 20-13-35-19z"/>
<path class="q4" d="M2558 2841l35 3 20-19-34-3z"/>
<path class="q3" d="M3764 2855l35 11 20-12-35-10z"/>
<path class="qd" d="M2882 2744l35 5 20-46-35-4z"/>
<path class="q1" d="M2001 2878l34 6 20-13-34-6z"/>
<path class="qd" d="M3206 2717l35 33 20-25-35-38z"/>
<path class="q2" d="M2324 2866l35 5 20-15-35-4z"/>
<path class="q5" d="M3530 2827l35 15 20-12-35-15z"/>
<path class="q6" d="M2648 2827l35 2 20-24-35-1z"/>
<path class="q2" d="M3854 2864l34 9 20-12-34-9z"/>
<path class="qf" d="M2972 2712l35 14 20-48-35-17z"/>
<path class="q1" d="M2090 2877l35 7 20-14-35-5z"/>
<path class="qa" d="M3296 2758l34 29 21-18-35-30z"/>
<path class="q3" d="M2414 2861l35 5 20-16-35-4z"/>
<path class="q4" d="M3619 2844l35 12 20-11-34-13z"/>
<path class="q8" d="M2738 2807l35 2 20-31-35 0z"/>
<path class="q2" d="M3943 2870l35 9 20-12-35-8z"/>
<path class="q1" d="M1856 2884l35 6 20-12-35-6z"/>
<path class="q10" d="M3062 2700l34 25 20-41-34-31z"/>
<path class="q1" d="M2180 2876l35 6 20-13-35-6z"/>
<path class="q7" d="M3385 2795l35 22 20-14-35-23z"/>
<path class="q3" d="M2504 2854l34 5 20-18-34-4z"/>
<path class="q3" d="M3709 2856l35 11 20-12-35-11z"/>
<path class="qa" d="M2827 2779l35 4 20-39-35-2z"/>
<path class="q1" d="M1946 2884l34 7 21-13-35-6z"/>
<path class="qe" d="M3151 2716l35 31 20-30-35-37z"/>
<path class="q2" d="M2269 2874l35 6 20-14-34-5z"/>
<path class="q5" d="M3475 2822l35 17 20-12-35-18z"/>
<path class="q5" d="M2593 2844l35 4 20-21-35-2z"/>
<path class="q2" d="M3799 2866l35 9 20-11-35-10z"/>
<path class="qd" d="M2917 2749l35 8 20-45-35-9z"/>
<path class="q1" d="M2035 2884l35 6 20-13-35-6z"/>
<path class="qb" d="M3241 2750l35 30 20-22-35-33z"/>
<path class="q2" d="M2359 2871l35 5 20-15-35-5z"/>
<path class="q4" d="M3565 2842l34 14 20-12-34-14z"/>
<path class="q6" d="M2683 2829l35 3 20-25-35-2z"/>
<path class="q2" d="M3888 2873l35 9 20-12-35-9z"/>
<path class="qe" d="M3007 2726l34 18 21-44-35-22z"/>
<path class="q1" d="M2125 2884l35 6 20-14-35-6z"/>
<path class="q8" d="M3330 2787l35 24 20-16-34-26z"/>
<path class="q3" d="M2449 2866l35 5 20-17-35-4z"/>
<path class="q3" d="M3654 2856l35 12 20-12-35-11z"/>
<path class="q8" d="M2773 2809l34 3 20-33-34-1z"/>
<path class="q2" d="M3978 2879l35 9 20-12-35-9z"/>
<path class="q1" d="M1891 2890l35 7 20-13-35-6z"/>
<path class="qe" d="M3096 2725l35 27 20-36-35-32z"/>
<path class="q2" d="M2215 2882l34 6 20-14-34-5z"/>
<path class="q6" d="M3420 2817l35 19 20-14-35-19z"/>
<path class="q4" d="M2538 2859l35 4 20-19-35-3z"/>
<path class="q3" d="M3744 2867l35 10 20-11-35-11z"/>
<path class="qa" d="M2862 2783l35 5 20-39-35-5z"/>
<path class="q1" d="M1980 2891l35 6 20-13-34-6z"/>
<path class="qc" d="M3186 2747l35 29 20-26-35-33z"/>
<path class="q2" d="M2304 2880l35 5 20-14-35-5z"/>
<path class="q5" d="M3510 2839l35 15 20-12-35-15z"/>
<path class="q5" d="M2628 2848l35 3 20-22-35-2z"/>
<path class="q2" d="M3834 2875l34 10 20-12-34-9z"/>
<path class="qd" d="M2952 2757l35 12 20-43-35-14z"/>
<path class="q1" d="M2070 2890l35 6 20-12-35-7z"/>
<path class="q9" d="M3276 2780l34 25 20-18-34-29z"/>
<path class="q2" d="M2394 2876l35 5 20-15-35-5z"/>
<path class="q4" d="M3599 2856l35 12 20-12-35-12z"/>
<path class="q6" d="M2718 2832l34 4 21-27-35-2z"/>
<path class="q2" d="M3923 2882l35 9 20-12-35-9z"/>
<path class="qd" d="M3041 2744l35 20 20-39-34-25z"/>
<path class="q1" d="M2160 2890l35 6 20-14-35-6z"/>
<path class="q7" d="M3365 2811l35 21 20-15-35-22z"/>
<path class="q3" d="M2484 2871l34 5 20-17-34-5z"/>
<path class="q3" d="M3689 2868l35 11 20-12-35-11z"/>
<path class="q8" d="M2807 2812l35 4 20-33-35-4z"/>
<path class="q1" d="M1926 2897l34 6 20-12-34-7z"/>
<path class="qc" d="M3131 2752l35 25 20-30-35-31z"/>
<path class="q2" d="M2249 2888l35 6 20-14-35-6z"/>
<path class="q5" d="M3455 2836l35 16 20-13-35-17z"/>
<path class="q4" d="M2573 2863l35 4 20-19-35-4z"/>
<path class="q2" d="M3779 2877l34 10 21-12-35-9z"/>
<path class="qa" d="M2897 2788l35 8 20-39-35-8z"/>
<path class="q1" d="M2015 2897l35 6 20-13-35-6z"/>
<path class="qa" d="M3221 2776l35 26 20-22-35-30z"/>
<path class="q2" d="M2339 2885l35 6 20-15-35-5z"/>
<path class="q4" d="M3545 2854l34 14 20-12-34-14z"/>
<path class="q5" d="M2663 2851l35 4 20-23-35-3z"/>
<path class="q2" d="M3868 2885l35 9 20-12-35-9z"/>
<path class="qc" d="M2987 2769l34 15 20-40-34-18z"/>
<path class="q1" d="M2105 2896l35 7 20-13-35-6z"/>
<path class="q8" d="M3310 2805l35 23 20-17-35-24z"/>
<path class="q3" d="M2429 2881l34 6 21-16-35-5z"/>
<path class="q3" d="M3634 2868l35 12 20-12-35-12z"/>
<path class="q7" d="M2752 2836l35 4 20-28-34-3z"/>
<path class="q2" d="M3958 2891l35 8 20-11-35-9z"/>
<path class="qc" d="M3076 2764l35 22 20-34-35-27z"/>
<path class="q1" d="M2195 2896l34 5 20-13-34-6z"/>
<path class="q6" d="M3400 2832l35 18 20-14-35-19z"/>
<path class="q3" d="M2518 2876l35 4 20-17-35-4z"/>
<path class="q3" d="M3724 2879l35 10 20-12-35-10z"/>
<path class="q9" d="M2842 2816l35 6 20-34-35-5z"/>
<path class="q1" d="M1960 2903l35 6 20-12-35-6z"/>
<path class="qb" d="M3166 2777l35 25 20-26-35-29z"/>
<path class="q2" d="M2284 2894l35 6 20-15-35-5z"/>
<path class="q5" d="M3490 2852l34 15 21-13-35-15z"/>
<path class="q4" d="M2608 2867l35 5 20-21-35-3z"/>
<path class="q2" d="M3813 2887l35 10 20-12-34-10z"/>
<path class="qa" d="M2932 2796l35 11 20-38-35-12z"/>
<path class="q1" d="M2050 2903l35 6 20-13-35-6z"/>
<path class="q9" d="M3256 2802l34 23 20-20-34-25z"/>
<path class="q2" d="M2374 2891l35 5 20-15-35-5z"/>
<path class="q4" d="M3579 2868l35 13 20-13-35-12z"/>
<path class="q5" d="M2698 2855l34 5 20-24-34-4z"/>
<path class="q2" d="M3903 2894l35 9 20-12-35-9z"/>
<path class="qb" d="M3021 2784l35 16 20-36-35-20z"/>
<path class="q1" d="M2140 2903l34 6 21-13-35-6z"/>
<path class="q7" d="M3345 2828l35 19 20-15-35-21z"/>
<path class="q3" d="M2463 2887l35 5 20-16-34-5z"/>
<path class="q3" d="M3669 2880l35 11 20-12-35-11z"/>
<path class="q7" d="M2787 2840l35 5 20-29-35-4z"/>
<path class="qb" d="M3111 2786l35 21 20-30-35-25z"/>
<path class="q2" d="M2229 2901l35 6 20-13-35-6z"/>
<path class="q5" d="M3435 2850l35 16 20-14-35-16z"/>
<path class="q3" d="M2553 2880l35 5 20-18-35-4z"/>
<path class="q2" d="M3759 2889l34 10 20-12-34-10z"/>
<path class="q9" d="M2877 2822l35 8 20-34-35-8z"/>
<path class="q1" d="M1995 2909l35 7 20-13-35-6z"/>
<path class="q9" d="M3201 2802l34 22 21-22-35-26z"/>
<path class="q2" d="M2319 2900l35 5 20-14-35-6z"/>
<path class="q4" d="M3524 2867l35 14 20-13-34-14z"/>
<path class="q4" d="M2643 2872l35 4 20-21-35-4z"/>
<path class="q2" d="M3848 2897l35 9 20-12-35-9z"/>
<path class="qa" d="M2967 2807l34 12 20-35-34-15z"/>
<path class="q1" d="M2085 2909l35 7 20-13-35-7z"/>
<path class="q7" d="M3290 2825l35 20 20-17-35-23z"/>
<path class="q2" d="M2409 2896l34 6 20-15-34-6z"/>
<path class="q3" d="M3614 2881l35 11 20-12-35-12z"/>
<path class="q6" d="M2732 2860l35 5 20-25-35-4z"/>
<path class="q2" d="M3938 2903l35 8 20-12-35-8z"/>
<path class="qa" d="M3056 2800l35 18 20-32-35-22z"/>
<path class="q1" d="M2174 2909l35 6 20-14-34-5z"/>
<path class="q6" d="M3380 2847l35 17 20-14-35-18z"/>
<path class="q3" d="M2498 2892l35 5 20-17-35-4z"/>
<path class="q3" d="M3704 2891l34 10 21-12-35-10z"/>
<path class="q7" d="M2822 2845l35 6 20-29-35-6z"/>
<path class="q9" d="M3146 2807l35 21 20-26-35-25z"/>
<path class="q2" d="M2264 2907l35 6 20-13-35-6z"/>
<path class="q5" d="M3470 2866l34 14 20-13-34-15z"/>
<path class="q4" d="M2588 2885l35 5 20-18-35-5z"/>
<path class="q2" d="M3793 2899l35 9 20-11-35-10z"/>
<path class="q8" d="M2912 2830l34 9 21-32-35-11z"/>
<path class="q1" d="M2030 2916l35 6 20-13-35-6z"/>
<path class="q8" d="M3235 2824l35 21 20-20-34-23z"/>
<path class="q2" d="M2354 2905l35 6 20-15-35-5z"/>
<path class="q4" d="M3559 2881l35 12 20-12-35-13z"/>
<path class="q5" d="M2678 2876l34 5 20-21-34-5z"/>
<path class="q2" d="M3883 2906l35 8 20-11-35-9z"/>
<path class="q9" d="M3001 2819l35 13 20-32-35-16z"/>
<path class="q1" d="M2120 2916l34 6 20-13-34-6z"/>
<path class="q6" d="M3325 2845l35 18 20-16-35-19z"/>
<path class="q2" d="M2443 2902l35 5 20-15-35-5z"/>
<path class="q3" d="M3649 2892l35 11 20-12-35-11z"/>
<path class="q6" d="M2767 2865l35 5 20-25-35-5z"/>
<path class="q9" d="M3091 2818l35 17 20-28-35-21z"/>
<path class="q1" d="M2209 2915l35 6 20-14-35-6z"/>
<path class="q5" d="M3415 2864l34 16 21-14-35-16z"/>
<path class="q3" d="M2533 2897l35 5 20-17-35-5z"/>
<path class="q2" d="M3738 2901l35 10 20-12-34-10z"/>
<path class="q7" d="M2857 2851l35 7 20-28-35-8z"/>
<path class="q8" d="M3181 2828l34 19 20-23-34-22z"/>
<path class="q2" d="M2299 2913l35 6 20-14-35-5z"/>
<path class="q4" d="M3504 2880l35 13 20-12-35-14z"/>
<path class="q4" d="M2623 2890l34 6 21-20-35-4z"/>
<path class="q2" d="M3828 2908l35 9 20-11-35-9z"/>
<path class="q8" d="M2946 2839l35 10 20-30-34-12z"/>
<path class="q1" d="M2065 2922l35 6 20-12-35-7z"/>
<path class="q7" d="M3270 2845l35 18 20-18-35-20z"/>
<path class="q2" d="M2389 2911l34 6 20-15-34-6z"/>
<path class="q3" d="M3594 2893l35 11 20-12-35-11z"/>
<path class="q5" d="M2712 2881l35 6 20-22-35-5z"/>
<path class="q2" d="M3918 2914l35 9 20-12-35-8z"/>
<path class="q9" d="M3036 2832l35 15 20-29-35-18z"/>
<path class="q1" d="M2154 2922l35 6 20-13-35-6z"/>
<path class="q6" d="M3360 2863l35 16 20-15-35-17z"/>
<path class="q2" d="M2478 2907l35 6 20-16-35-5z"/>
<path class="q3" d="M3684 2903l34 10 20-12-34-10z"/>
<path class="q6" d="M2802 2870l35 7 20-26-35-6z"/>
<path class="q8" d="M3126 2835l34 17 21-24-35-21z"/>
<path class="q1" d="M2244 2921l35 6 20-14-35-6z"/>
<path class="q4" d="M3449 2880l35 14 20-14-34-14z"/>
<path class="q3" d="M2568 2902l35 6 20-18-35-5z"/>
<path class="q2" d="M3773 2911l35 9 20-12-35-9z"/>
<path class="q7" d="M2892 2858l34 9 20-28-34-9z"/>
<path class="q7" d="M3215 2847l35 18 20-20-35-21z"/>
<path class="q2" d="M2334 2919l34 6 21-14-35-6z"/>
<path class="q3" d="M3539 2893l35 12 20-12-35-12z"/>
<path class="q4" d="M2657 2896l35 5 20-20-34-5z"/>
<path class="q2" d="M3863 2917l35 9 20-12-35-8z"/>
<path class="q8" d="M2981 2849l35 12 20-29-35-13z"/>
<path class="q1" d="M2100 2928l34 7 20-13-34-6z"/>
<path class="q6" d="M3305 2863l35 17 20-17-35-18z"/>
<path class="q2" d="M2423 2917l35 6 20-16-35-5z"/>
<path class="q3" d="M3629 2904l35 11 20-12-35-11z"/>
<path class="q5" d="M2747 2887l35 6 20-23-35-5z"/>
<path class="q8" d="M3071 2847l35 14 20-26-35-17z"/>
<path class="q1" d="M2189 2928l35 6 20-13-35-6z"/>
<path class="q5" d="M3395 2879l34 15 20-14-34-16z"/>
<path class="q3" d="M2513 2913l35 6 20-17-35-5z"/>
<path class="q2" d="M3718 2913l35 10 20-12-35-10z"/>
<path class="q6" d="M2837 2877l34 7 21-26-35-7z"/>
<path class="q7" d="M3160 2852l35 17 20-22-34-19z"/>
<path class="q1" d="M2279 2927l35 6 20-14-35-6z"/>
<path class="q4" d="M3484 2894l35 12 20-13-35-13z"/>
<path class="q3" d="M2603 2908l34 6 20-18-34-6z"/>
<path class="q2" d="M3808 2920l35 9 20-12-35-9z"/>
<path class="q7" d="M2926 2867l35 9 20-27-35-10z"/>
<path class="q6" d="M3250 2865l35 16 20-18-35-18z"/>
<path class="q2" d="M2368 2925l35 6 20-14-34-6z"/>
<path class="q3" d="M3574 2905l35 12 20-13-35-11z"/>
<path class="q4" d="M2692 2901l35 6 20-20-35-6z"/>
<path class="q2" d="M3898 2926l34 9 21-12-35-9z"/>
<path class="q7" d="M3016 2861l35 12 20-26-35-15z"/>
<path class="q1" d="M2134 2935l35 6 20-13-35-6z"/>
<path class="q5" d="M3340 2880l35 15 20-16-35-16z"/>
<path class="q2" d="M2458 2923l35 5 20-15-35-6z"/>
<path class="q3" d="M3664 2915l34 10 20-12-34-10z"/>
<path class="q5" d="M2782 2893l35 6 20-22-35-7z"/>
<path class="q7" d="M3106 2861l34 15 20-24-34-17z"/>
<path class="q1" d="M2224 2934l35 6 20-13-35-6z"/>
<path class="q4" d="M3429 2894l35 13 20-13-35-14z"/>
<path class="q3" d="M2548 2919l35 6 20-17-35-6z"/>
<path class="q2" d="M3753 2923l35 9 20-12-35-9z"/>
<path class="q6" d="M2871 2884l35 8 20-25-34-9z"/>
<path class="q6" d="M3195 2869l35 16 20-20-35-18z"/>
<path class="q2" d="M2314 2933l34 6 20-14-34-6z"/>
<path class="q3" d="M3519 2906l35 12 20-13-35-12z"/>
<path class="q3" d="M2637 2914l35 5 20-18-35-5z"/>
<path class="q2" d="M3843 2929l35 9 20-12-35-9z"/>
<path class="q6" d="M2961 2876l35 10 20-25-35-12z"/>
<path class="q6" d="M3285 2881l35 15 20-16-35-17z"/>
<path class="q2" d="M2403 2931l35 6 20-14-35-6z"/>
<path class="q3" d="M3609 2917l34 10 21-12-35-11z"/>
<path class="q4" d="M2727 2907l35 6 20-20-35-6z"/>
<path class="q7" d="M3051 2873l35 13 20-25-35-14z"/>
<path class="q1" d="M2169 2941l35 6 20-13-35-6z"/>
<path class="q5" d="M3375 2895l34 13 20-14-34-15z"/>
<path class="q2" d="M2493 2928l35 6 20-15-35-6z"/>
<path class="q2" d="M3698 2925l35 10 20-12-35-10z"/>
<path class="q5" d="M2817 2899l34 7 20-22-34-7z"/>
<path class="q6" d="M3140 2876l35 14 20-21-35-17z"/>
<path class="q1" d="M2259 2940l35 7 20-14-35-6z"/>
<path class="q4" d="M3464 2907l35 12 20-13-35-12z"/>
<path class="q3" d="M2583 2925l34 5 20-16-34-6z"/>
<path class="q2" d="M3788 2932l35 9 20-12-35-9z"/>
<path class="q6" d="M2906 2892l35 8 20-24-35-9z"/>
<path class="q6" d="M3230 2885l35 14 20-18-35-16z"/>
<path class="q2" d="M2348 2939l35 6 20-14-35-6z"/>
<path class="q3" d="M3554 2918l35 11 20-12-35-12z"/>
<path class="q3" d="M2672 2919l35 6 20-18-35-6z"/>
<path class="q2" d="M3878 2938l34 8 20-11-34-9z"/>
<path class="q6" d="M2996 2886l35 11 20-24-35-12z"/>
<path class="q5" d="M3320 2896l34 14 21-15-35-15z"/>
<path class="q2" d="M2438 2937l35 6 20-15-35-5z"/>
<path class="q2" d="M3643 2927l35 10 20-12-34-10z"/>
<path class="q4" d="M2762 2913l35 7 20-21-35-6z"/>
<path class="q6" d="M3086 2886l34 12 20-22-34-15z"/>
<path class="q1" d="M2204 2947l35 7 20-14-35-6z"/>
<path class="q4" d="M3409 2908l35 13 20-14-35-13z"/>
<path class="q2" d="M2528 2934l34 6 21-15-35-6z"/>
<path class="q2" d="M3733 2935l35 9 20-12-35-9z"/>
<path class="q5" d="M2851 2906l35 8 20-22-35-8z"/>
<path class="q6" d="M3175 2890l35 14 20-19-35-16z"/>
<path class="q1" d="M2294 2947l34 6 20-14-34-6z"/>
<path class="q3" d="M3499 2919l35 12 20-13-35-12z"/>
<path class="q3" d="M2617 2930l35 7 20-18-35-5z"/>
<path class="q2" d="M3823 2941l35 9 20-12-35-9z"/>
<path class="q5" d="M2941 2900l35 9 20-23-35-10z"/>
<path class="q5" d="M3265 2899l35 14 20-17-35-15z"/>
<path class="q2" d="M2383 2945l35 6 20-14-35-6z"/>
<path class="q3" d="M3589 2929l34 10 20-12-34-10z"/>
<path class="q3" d="M2707 2925l35 7 20-19-35-6z"/>
<path class="q6" d="M3031 2897l34 11 21-22-35-13z"/>
<path class="q4" d="M3354 2910l35 13 20-15-34-13z"/>
<path class="q2" d="M2473 2943l35 6 20-15-35-6z"/>
<path class="q2" d="M3678 2937l35 10 20-12-35-10z"/>
<path class="q4" d="M2797 2920l34 7 20-21-34-7z"/>
<path class="q6" d="M3120 2898l35 13 20-21-35-14z"/>
<path class="q1" d="M2239 2954l34 6 21-13-35-7z"/>
<path class="q4" d="M3444 2921l35 12 20-14-35-12z"/>
<path class="q2" d="M2562 2940l35 6 20-16-34-5z"/>
<path class="q2" d="M3768 2944l35 9 20-12-35-9z"/>
<path class="q5" d="M2886 2914l35 8 20-22-35-8z"/>
<path class="q5" d="M3210 2904l35 13 20-18-35-14z"/>
<path class="q1" d="M2328 2953l35 6 20-14-35-6z"/>
<path class="q3" d="M3534 2931l35 11 20-13-35-11z"/>
<path class="q3" d="M2652 2937l35 6 20-18-35-6z"/>
<path class="q2" d="M3858 2950l34 8 20-12-34-8z"/>
<path class="q5" d="M2976 2909l35 10 20-22-35-11z"/>
<path class="q5" d="M3300 2913l34 13 20-16-34-14z"/>
<path class="q2" d="M2418 2951l35 7 20-15-35-6z"/>
<path class="q2" d="M3623 2939l35 10 20-12-35-10z"/>
<path class="q3" d="M2742 2932l34 6 21-18-35-7z"/>
<path class="q5" d="M3065 2908l35 11 20-21-34-12z"/>
<path class="q4" d="M3389 2923l35 12 20-14-35-13z"/>
<path class="q2" d="M2508 2949l34 7 20-16-34-6z"/>
<path class="q2" d="M3713 2947l35 9 20-12-35-9z"/>
<path class="q4" d="M2831 2927l35 7 20-20-35-8z"/>
<path class="q5" d="M3155 2911l35 12 20-19-35-14z"/>
<path class="q1" d="M2273 2960l35 6 20-13-34-6z"/>
<path class="q3" d="M3479 2933l35 11 20-13-35-12z"/>
<path class="q2" d="M2597 2946l35 7 20-16-35-7z"/>
<path class="q2" d="M3803 2953l34 9 21-12-35-9z"/>
<path class="q5" d="M2921 2922l35 8 20-21-35-9z"/>
<path class="q5" d="M3245 2917l35 13 20-17-35-14z"/>
<path class="q1" d="M2363 2959l35 6 20-14-35-6z"/>
<path class="q3" d="M3569 2942l34 10 20-13-34-10z"/>
<path class="q3" d="M2687 2943l35 6 20-17-35-7z"/>
<path class="q5" d="M3011 2919l34 10 20-21-34-11z"/>
<path class="q4" d="M3334 2926l35 12 20-15-35-13z"/>
<path class="q2" d="M2453 2958l34 6 21-15-35-6z"/>
<path class="q2" d="M3658 2949l35 10 20-12-35-10z"/>
<path class="q3" d="M2776 2938l35 7 20-18-34-7z"/>
<path class="q5" d="M3100 2919l35 12 20-20-35-13z"/>
<path class="q3" d="M3424 2935l35 12 20-14-35-12z"/>
<path class="q2" d="M2542 2956l35 6 20-16-35-6z"/>
<path class="q2" d="M3748 2956l35 9 20-12-35-9z"/>
<path class="q4" d="M2866 2934l35 8 20-20-35-8z"/>
<path class="q5" d="M3190 2923l35 12 20-18-35-13z"/>
<path class="q1" d="M2308 2966l35 7 20-14-35-6z"/>
<path class="q3" d="M3514 2944l34 11 21-13-35-11z"/>
<path class="q2" d="M2632 2953l35 6 20-16-35-6z"/>
<path class="q2" d="M3837 2962l35 8 20-12-34-8z"/>
<path class="q4" d="M2956 2930l35 9 20-20-35-10z"/>
<path class="q4" d="M3280 2930l34 12 20-16-34-13z"/>
<path class="q2" d="M2398 2965l35 7 20-14-35-7z"/>
<path class="q2" d="M3603 2952l35 10 20-13-35-10z"/>
<path class="q3" d="M2722 2949l34 7 20-18-34-6z"/>
<path class="q5" d="M3045 2929l35 10 20-20-35-11z"/>
<path class="q4" d="M3369 2938l35 12 20-15-35-12z"/>
<path class="q2" d="M2487 2964l35 6 20-14-34-7z"/>
<path class="q2" d="M3693 2959l35 9 20-12-35-9z"/>
<path class="q3" d="M2811 2945l35 8 20-19-35-7z"/>
<path class="q4" d="M3135 2931l35 11 20-19-35-12z"/>
<path class="q3" d="M3459 2947l35 10 20-13-35-11z"/>
<path class="q2" d="M2577 2962l35 6 20-15-35-7z"/>
<path class="q2" d="M3783 2965l34 8 20-11-34-9z"/>
<path class="q4" d="M2901 2942l35 8 20-20-35-8z"/>
<path class="q4" d="M3225 2935l34 12 21-17-35-13z"/>
<path class="q1" d="M2343 2973l35 6 20-14-35-6z"/>
<path class="q3" d="M3548 2955l35 10 20-13-34-10z"/>
<path class="q3" d="M2667 2959l35 7 20-17-35-6z"/>
<path class="q4" d="M2991 2939l34 9 20-19-34-10z"/>
<path class="q4" d="M3314 2942l35 11 20-15-35-12z"/>
<path class="q2" d="M2433 2972l34 6 20-14-34-6z"/>
<path class="q2" d="M3638 2962l35 9 20-12-35-10z"/>
<path class="q3" d="M2756 2956l35 7 20-18-35-7z"/>
<path class="q4" d="M3080 2939l35 10 20-18-35-12z"/>
<path class="q3" d="M3404 2950l35 11 20-14-35-12z"/>
<path class="q2" d="M2522 2970l35 7 20-15-35-6z"/>
<path class="q2" d="M3728 2968l35 9 20-12-35-9z"/>
<path class="q3" d="M2846 2953l35 7 20-18-35-8z"/>
<path class="q4" d="M3170 2942l35 10 20-17-35-12z"/>
<path class="q3" d="M3494 2957l34 11 20-13-34-11z"/>
<path class="q2" d="M2612 2968l35 7 20-16-35-6z"/>
<path class="q2" d="M3817 2973l35 9 20-12-35-8z"/>
<path class="q4" d="M2936 2950l34 8 21-19-35-9z"/>
<path class="q4" d="M3259 2947l35 11 20-16-34-12z"/>
<path class="q1" d="M2378 2979l35 6 20-13-35-7z"/>
<path class="q2" d="M3583 2965l35 9 20-12-35-10z"/>
<path class="q3" d="M2702 2966l34 6 20-16-34-7z"/>
<path class="q4" d="M3025 2948l35 10 20-19-35-10z"/>
<path class="q3" d="M3349 2953l35 11 20-14-35-12z"/>
<path class="q2" d="M2467 2978l35 6 20-14-35-6z"/>
<path class="q2" d="M3673 2971l35 9 20-12-35-9z"/>
<path class="q3" d="M2791 2963l35 7 20-17-35-8z"/>
<path class="q4" d="M3115 2949l35 10 20-17-35-11z"/>
<path class="q3" d="M3439 2961l35 10 20-14-35-10z"/>
<path class="q2" d="M2557 2977l35 6 20-15-35-6z"/>
<path class="q2" d="M3763 2977l34 8 20-12-34-8z"/>
<path class="q3" d="M2881 2960l35 8 20-18-35-8z"/>
<path class="q4" d="M3205 2952l34 11 20-16-34-12z"/>
<path class="q2" d="M3528 2968l35 9 20-12-35-10z"/>
<path class="q2" d="M2647 2975l34 6 21-15-35-7z"/>
<path class="q4" d="M2970 2958l35 9 20-19-34-9z"/>
<path class="q3" d="M3294 2958l35 10 20-15-35-11z"/>
<path class="q1" d="M2413 2985l34 7 20-14-34-6z"/>
<path class="q2" d="M3618 2974l35 9 20-12-35-9z"/>
<path class="q3" d="M2736 2972l35 7 20-16-35-7z"/>
<path class="q4" d="M3060 2958l35 9 20-18-35-10z"/>
<path class="q3" d="M3384 2964l35 11 20-14-35-11z"/>
<path class="q2" d="M2502 2984l35 7 20-14-35-7z"/>
<path class="q2" d="M3708 2980l34 9 21-12-35-9z"/>
<path class="q3" d="M2826 2970l35 7 20-17-35-7z"/>
<path class="q4" d="M3150 2959l35 10 20-17-35-10z"/>
<path class="q3" d="M3474 2971l34 10 20-13-34-11z"/>
<path class="q2" d="M2592 2983l35 7 20-15-35-7z"/>
<path class="q2" d="M3797 2985l35 9 20-12-35-9z"/>
<path class="q3" d="M2916 2968l34 8 20-18-34-8z"/>
<path class="q3" d="M3239 2963l35 10 20-15-35-11z"/>
<path class="q2" d="M3563 2977l35 10 20-13-35-9z"/>
<path class="q2" d="M2681 2981l35 7 20-16-34-6z"/>
<path class="q3" d="M3005 2967l35 8 20-17-35-10z"/>
<path class="q3" d="M3329 2968l35 11 20-15-35-11z"/>
<path class="q1" d="M2447 2992l35 6 20-14-35-6z"/>
<path class="q2" d="M3653 2983l35 9 20-12-35-9z"/>
<path class="q3" d="M2771 2979l35 7 20-16-35-7z"/>
<path class="q3" d="M3095 2967l35 9 20-17-35-10z"/>
<path class="q3" d="M3419 2975l34 9 21-13-35-10z"/>
<path class="q2" d="M2537 2991l35 6 20-14-35-6z"/>
<path class="q2" d="M3742 2989l35 8 20-12-34-8z"/>
<path class="q3" d="M2861 2977l35 8 20-17-35-8z"/>
<path class="q3" d="M3185 2969l34 10 20-16-34-11z"/>
<path class="q2" d="M3508 2981l35 9 20-13-35-9z"/>
<path class="q2" d="M2627 2990l34 6 20-15-34-6z"/>
<path class="q3" d="M2950 2976l35 8 20-17-35-9z"/>
<path class="q3" d="M3274 2973l35 10 20-15-35-10z"/>
<path class="q2" d="M3598 2987l35 9 20-13-35-9z"/>
<path class="q2" d="M2716 2988l35 7 20-16-35-7z"/>
<path class="q3" d="M3040 2975l35 9 20-17-35-9z"/>
<path class="q3" d="M3364 2979l35 10 20-14-35-11z"/>
<path class="q1" d="M2482 2998l35 7 20-14-35-7z"/>
<path class="q2" d="M3688 2992l34 9 20-12-34-9z"/>
<path class="q2" d="M2806 2986l35 7 20-16-35-7z"/>
<path class="q3" d="M3130 2976l34 10 21-17-35-10z"/>
<path class="q2" d="M3453 2984l35 10 20-13-34-10z"/>
<path class="q2" d="M2572 2997l35 7 20-14-35-7z"/>
<path class="q2" d="M3777 2997l35 9 20-12-35-9z"/>
<path class="q3" d="M2896 2985l34 7 20-16-34-8z"/>
<path class="q3" d="M3219 2979l35 10 20-16-35-10z"/>
<path class="q2" d="M3543 2990l35 10 20-13-35-10z"/>
<path class="q2" d="M2661 2996l35 7 20-15-35-7z"/>
<path class="q3" d="M2985 2984l35 8 20-17-35-8z"/>
<path class="q3" d="M3309 2983l35 10 20-14-35-11z"/>
<path class="q2" d="M3633 2996l34 9 21-13-35-9z"/>
<path class="q2" d="M2751 2995l35 7 20-16-35-7z"/>
<path class="q3" d="M3075 2984l35 9 20-17-35-9z"/>
<path class="q3" d="M3399 2989l34 9 20-14-34-9z"/>
<path class="q1" d="M2517 3005l35 6 20-14-35-6z"/>
<path class="q2" d="M3722 3001l35 9 20-13-35-8z"/>
<path class="q2" d="M2841 2993l34 8 21-16-35-8z"/>
<path class="q3" d="M3164 2986l35 9 20-16-34-10z"/>
<path class="q2" d="M3488 2994l35 9 20-13-35-9z"/>
<path class="q2" d="M2607 3004l34 7 20-15-34-6z"/>
<path class="q3" d="M2930 2992l35 8 20-16-35-8z"/>
<path class="q3" d="M3254 2989l35 9 20-15-35-10z"/>
<path class="q2" d="M3578 3000l35 8 20-12-35-9z"/>
<path class="q2" d="M2696 3003l35 7 20-15-35-7z"/>
<path class="q3" d="M3020 2992l35 8 20-16-35-9z"/>
<path class="q3" d="M3344 2993l34 10 21-14-35-10z"/>
<path class="q2" d="M3667 3005l35 8 20-12-34-9z"/>
<path class="q2" d="M2786 3002l35 7 20-16-35-7z"/>
<path class="q3" d="M3110 2993l34 8 20-15-34-10z"/>
<path class="q2" d="M3433 2998l35 9 20-13-35-10z"/>
<path class="q1" d="M2552 3011l34 7 21-14-35-7z"/>
<path class="q1" d="M3757 3010l35 8 20-12-35-9z"/>
<path class="q2" d="M2875 3001l35 7 20-16-34-7z"/>
<path class="q3" d="M3199 2995l35 9 20-15-35-10z"/>
<path class="q2" d="M3523 3003l35 9 20-12-35-10z"/>
<path class="q2" d="M2641 3011l35 6 20-14-35-7z"/>
<path class="q3" d="M2965 3000l35 8 20-16-35-8z"/>
<path class="q3" d="M3289 2998l35 10 20-15-35-10z"/>
<path class="q2" d="M3613 3008l34 9 20-12-34-9z"/>
<path class="q2" d="M2731 3010l35 7 20-15-35-7z"/>
<path class="q3" d="M3055 3000l34 8 21-15-35-9z"/>
<path class="q2" d="M3378 3003l35 9 20-14-34-9z"/>
<path class="q2" d="M3702 3013l35 9 20-12-35-9z"/>
<path class="q2" d="M2821 3009l34 7 20-15-34-8z"/>
<path class="q3" d="M3144 3001l35 9 20-15-35-9z"/>
<path class="q2" d="M3468 3007l35 9 20-13-35-9z"/>
<path class="q1" d="M2586 3018l35 7 20-14-34-7z"/>
<path class="q2" d="M2910 3008l35 8 20-16-35-8z"/>
<path class="q3" d="M3234 3004l35 9 20-15-35-9z"/>
<path class="q2" d="M3558 3012l35 9 20-13-35-8z"/>
<path class="q2" d="M2676 3017l35 7 20-14-35-7z"/>
<path class="q2" d="M3000 3008l35 8 20-16-35-8z"/>
<path class="q2" d="M3324 3008l34 9 20-14-34-10z"/>
<path class="q2" d="M3647 3017l35 9 20-13-35-8z"/>
<path class="q2" d="M2766 3017l34 7 21-15-35-7z"/>
<path class="q3" d="M3089 3008l35 9 20-16-34-8z"/>
<path class="q2" d="M3413 3012l35 9 20-14-35-9z"/>
<path class="q1" d="M3737 3022l35 8 20-12-35-8z"/>
<path class="q2" d="M2855 3016l35 7 20-15-35-7z"/>
<path class="q3" d="M3179 3010l35 9 20-15-35-9z"/>
<path class="q2" d="M3503 3016l35 9 20-13-35-9z"/>
<path class="q1" d="M2621 3025l35 6 20-14-35-6z"/>
<path class="q2" d="M2945 3016l35 7 20-15-35-8z"/>
<path class="q2" d="M3269 3013l35 9 20-14-35-10z"/>
<path class="q2" d="M3593 3021l34 9 20-13-34-9z"/>
<path class="q2" d="M2711 3024l35 7 20-14-35-7z"/>
<path class="q2" d="M3035 3016l34 8 20-16-34-8z"/>
<path class="q2" d="M3358 3017l35 9 20-14-35-9z"/>
<path class="q2" d="M3682 3026l35 8 20-12-35-9z"/>
<path class="q2" d="M2800 3024l35 7 20-15-34-7z"/>
<path class="q2" d="M3124 3017l35 8 20-15-35-9z"/>
<path class="q2" d="M3448 3021l35 9 20-14-35-9z"/>
<path class="q2" d="M2890 3023l35 8 20-15-35-8z"/>
<path class="q2" d="M3214 3019l35 9 20-15-35-9z"/>
<path class="q2" d="M3538 3025l34 9 21-13-35-9z"/>
<path class="q1" d="M2656 3031l35 7 20-14-35-7z"/>
<path class="q2" d="M2980 3023l35 8 20-15-35-8z"/>
<path class="q2" d="M3304 3022l34 9 20-14-34-9z"/>
<path class="q2" d="M3627 3030l35 8 20-12-35-9z"/>
<path class="q2" d="M2746 3031l34 7 20-14-34-7z"/>
<path class="q2" d="M3069 3024l35 8 20-15-35-9z"/>
<path class="q2" d="M3393 3026l35 8 20-13-35-9z"/>
<path class="q1" d="M3717 3034l35 8 20-12-35-8z"/>
<path class="q2" d="M2835 3031l35 7 20-15-35-7z"/>
<path class="q2" d="M3159 3025l35 9 20-15-35-9z"/>
<path class="q2" d="M3483 3030l35 8 20-13-35-9z"/>
<path class="q2" d="M2925 3031l35 7 20-15-35-7z"/>
<path class="q2" d="M3249 3028l34 8 21-14-35-9z"/>
<path class="q2" d="M3572 3034l35 8 20-12-34-9z"/>
<path class="q1" d="M2691 3038l35 7 20-14-35-7z"/>
<path class="q2" d="M3015 3031l34 8 20-15-34-8z"/>
<path class="q2" d="M3338 3031l35 8 20-13-35-9z"/>
<path class="q1" d="M3662 3038l35 8 20-12-35-8z"/>
<path class="q2" d="M2780 3038l35 7 20-14-35-7z"/>
<path class="q2" d="M3104 3032l35 8 20-15-35-8z"/>
<path class="q2" d="M3428 3034l35 9 20-13-35-9z"/>
<path class="q2" d="M2870 3038l35 7 20-14-35-8z"/>
<path class="q2" d="M3194 3034l35 8 20-14-35-9z"/>
<path class="q2" d="M3518 3038l34 9 20-13-34-9z"/>
<path class="q2" d="M2960 3038l34 8 21-15-35-8z"/>
<path class="q2" d="M3283 3036l35 8 20-13-34-9z"/>
<path class="q2" d="M3607 3042l35 8 20-12-35-8z"/>
<path class="q1" d="M2726 3045l34 7 20-14-34-7z"/>
<path class="q2" d="M3049 3039l35 7 20-14-35-8z"/>
<path class="q2" d="M3373 3039l35 9 20-14-35-8z"/>
<path class="q1" d="M3697 3046l35 8 20-12-35-8z"/>
<path class="q2" d="M2815 3045l35 7 20-14-35-7z"/>
<path class="q2" d="M3139 3040l35 8 20-14-35-9z"/>
<path class="q2" d="M3463 3043l35 8 20-13-35-8z"/>
<path class="q2" d="M2905 3045l35 7 20-14-35-7z"/>
<path class="q2" d="M3229 3042l34 8 20-14-34-8z"/>
<path class="q2" d="M3552 3047l35 8 20-13-35-8z"/>
<path class="q2" d="M2994 3046l35 7 20-14-34-8z"/>
<path class="q2" d="M3318 3044l35 9 20-14-35-8z"/>
<path class="q1" d="M3642 3050l35 9 20-13-35-8z"/>
<path class="q1" d="M2760 3052l35 7 20-14-35-7z"/>
<path class="q2" d="M3084 3046l35 8 20-14-35-8z"/>
<path class="q2" d="M3408 3048l35 8 20-13-35-9z"/>
<path class="q2" d="M2850 3052l35 7 20-14-35-7z"/>
<path class="q2" d="M3174 3048l35 8 20-14-35-8z"/>
<path class="q2" d="M3498 3051l34 8 20-12-34-9z"/>
<path class="q2" d="M2940 3052l34 8 20-14-34-8z"/>
<path class="q2" d="M3263 3050l35 8 20-14-35-8z"/>
<path class="q1" d="M3587 3055l35 8 20-13-35-8z"/>
<path class="q2" d="M3029 3053l35 8 20-15-35-7z"/>
<path class="q2" d="M3353 3053l35 8 20-13-35-9z"/>
<path class="q1" d="M3677 3059l35 8 20-13-35-8z"/>
<path class="q1" d="M2795 3059l35 7 20-14-35-7z"/>
<path class="q2" d="M3119 3054l35 8 20-14-35-8z"/>
<path class="q2" d="M3443 3056l34 8 21-13-35-8z"/>
<path class="q2" d="M2885 3059l35 7 20-14-35-7z"/>
<path class="q2" d="M3209 3056l34 8 20-14-34-8z"/>
<path class="q2" d="M3532 3059l35 9 20-13-35-8z"/>
<path class="q2" d="M2974 3060l35 7 20-14-35-7z"/>
<path class="q2" d="M3298 3058l35 8 20-13-35-9z"/>
<path class="q1" d="M3622 3063l35 8 20-12-35-9z"/>
<path class="q2" d="M3064 3061l35 7 20-14-35-8z"/>
<path class="q2" d="M3388 3061l35 8 20-13-35-8z"/>
<path class="q1" d="M2830 3066l35 7 20-14-35-7z"/>
<path class="q2" d="M3154 3062l34 8 21-14-35-8z"/>
<path class="q2" d="M3477 3064l35 8 20-13-34-8z"/>
<path class="q2" d="M2920 3066l34 8 20-14-34-8z"/>
<path class="q2" d="M3243 3064l35 8 20-14-35-8z"/>
<path class="q1" d="M3567 3068l35 8 20-13-35-8z"/>
<path class="q2" d="M3009 3067l35 8 20-14-35-8z"/>
<path class="q2" d="M3333 3066l35 8 20-13-35-8z"/>
<path class="q1" d="M3657 3071l35 8 20-12-35-8z"/>
<path class="q2" d="M3099 3068l35 8 20-14-35-8z"/>
<path class="q2" d="M3423 3069l34 8 20-13-34-8z"/>
<path class="q1" d="M2865 3073l34 7 21-14-35-7z"/>
<path class="q2" d="M3188 3070l35 7 20-13-34-8z"/>
<path class="q1" d="M3512 3072l35 8 20-12-35-9z"/>
<path class="q1" d="M2954 3074l35 7 20-14-35-7z"/>
<path class="q2" d="M3278 3072l35 8 20-14-35-8z"/>
<path class="q1" d="M3602 3076l35 7 20-12-35-8z"/>
<path class="q2" d="M3044 3075l35 7 20-14-35-7z"/>
<path class="q2" d="M3368 3074l35 8 20-13-35-8z"/>
<path class="q2" d="M3134 3076l34 7 20-13-34-8z"/>
<path class="q1" d="M3457 3077l35 8 20-13-35-8z"/>
<path class="q1" d="M2899 3080l35 7 20-13-34-8z"/>
<path class="q2" d="M3223 3077l35 8 20-13-35-8z"/>
<path class="q1" d="M3547 3080l35 8 20-12-35-8z"/>
<path class="q1" d="M2989 3081l35 7 20-13-35-8z"/>
<path class="q2" d="M3313 3080l35 7 20-13-35-8z"/>
<path class="q1" d="M3637 3083l34 8 21-12-35-8z"/>
<path class="q1" d="M3079 3082l35 7 20-13-35-8z"/>
<path class="q1" d="M3403 3082l34 8 20-13-34-8z"/>
<path class="q2" d="M3168 3083l35 8 20-14-35-7z"/>
<path class="q1" d="M3492 3085l35 8 20-13-35-8z"/>
<path class="q1" d="M2934 3087l35 7 20-13-35-7z"/>
<path class="q1" d="M3258 3085l35 8 20-13-35-8z"/>
<path class="q1" d="M3582 3088l35 8 20-13-35-7z"/>
<path class="q1" d="M3024 3088l35 8 20-14-35-7z"/>
<path class="q1" d="M3348 3087l34 8 21-13-35-8z"/>
<path class="q1" d="M3114 3089l34 8 20-14-34-7z"/>
<path class="q1" d="M3437 3090l35 8 20-13-35-8z"/>
<path class="q1" d="M3203 3091l35 8 20-14-35-8z"/>
<path class="q1" d="M3527 3093l35 8 20-13-35-8z"/>
<path class="q1" d="M2969 3094l35 8 20-14-35-7z"/>
<path class="q1" d="M3293 3093l35 8 20-14-35-7z"/>
<path class="q1" d="M3617 3096l34 8 20-13-34-8z"/>
<path class="q1" d="M3059 3096l34 7 21-14-35-7z"/>
<path class="q1" d="M3382 3095l35 8 20-13-34-8z"/>
<path class="q1" d="M3148 3097l35 7 20-13-35-8z"/>
<path class="q1" d="M3472 3098l35 8 20-13-35-8z"/>
<path class="q1" d="M3238 3099l35 7 20-13-35-8z"/>
<path class="q1" d="M3562 3101l34 7 21-12-35-8z"/>
<path class="q1" d="M3004 3102l35 7 20-13-35-8z"/>
<path class="q1" d="M3328 3101l34 7 20-13-34-8z"/>
<path class="q1" d="M3093 3103l35 7 20-13-34-8z"/>
<path class="q1" d="M3417 3103l35 8 20-13-35-8z"/>
<path class="q1" d="M3183 3104l35 8 20-13-35-8z"/>
<path class="q1" d="M3507 3106l35 7 20-12-35-8z"/>
<path class="q1" d="M3273 3106l34 8 21-13-35-8z"/>
<path class="q1" d="M3596 3108l35 8 20-12-34-8z"/>
<path class="q1" d="M3039 3109l34 7 20-13-34-7z"/>
<path class="q1" d="M3362 3108l35 8 20-13-35-8z"/>
<path class="q1" d="M3128 3110l35 7 20-13-35-7z"/>
<path class="q1" d="M3452 3111l35 7 20-12-35-8z"/>
<path class="q1" d="M3218 3112l35 7 20-13-35-7z"/>
<path class="q1" d="M3542 3113l34 8 20-13-34-7z"/>
<path class="q1" d="M3307 3114l35 7 20-13-34-7z"/>
<path class="q1" d="M3073 3116l35 7 20-13-35-7z"/>
<path class="q1" d="M3397 3116l35 7 20-12-35-8z"/>
<path class="q1" d="M3163 3117l35 8 20-13-35-8z"/>
<path class="q1" d="M3487 3118l35 8 20-13-35-7z"/>
<path class="q1" d="M3253 3119l34 8 20-13-34-8z"/>
<path class="q1" d="M3576 3121l35 7 20-12-35-8z"/>
<path class="q1" d="M3342 3121l35 8 20-13-35-8z"/>
<path class="q1" d="M3108 3123l35 8 20-14-35-7z"/>
<path class="q1" d="M3432 3123l35 8 20-13-35-7z"/>
<path class="q1" d="M3198 3125l35 7 20-13-35-7z"/>
<path class="q1" d="M3522 3126l34 7 20-12-34-8z"/>
<path class="q1" d="M3287 3127l35 7 20-13-35-7z"/>
<path class="q1" d="M3377 3129l35 7 20-13-35-7z"/>
<path class="q1" d="M3143 3131l35 7 20-13-35-8z"/>
<path class="q1" d="M3467 3131l34 7 21-12-35-8z"/>
<path class="q1" d="M3233 3132l34 7 20-12-34-8z"/>
<path class="q1" d="M3556 3133l35 8 20-13-35-7z"/>
<path class="q1" d="M3322 3134l35 7 20-12-35-8z"/>
<path class="q1" d="M3412 3136l35 7 20-12-35-8z"/>
<path class="q1" d="M3178 3138l34 7 21-13-35-7z"/>
<path class="q1" d="M3501 3138l35 8 20-13-34-7z"/>
<path class="q1" d="M3267 3139l35 8 20-13-35-7z"/>
<path class="q1" d="M3357 3141l35 8 20-13-35-7z"/>
<path class="q1" d="M3447 3143l34 8 20-13-34-7z"/>
<path class="q1" d="M3212 3145l35 7 20-13-34-7z"/>
<path class="q1" d="M3536 3146l35 7 20-12-35-8z"/>
<path class="q1" d="M3302 3147l35 7 20-13-35-7z"/>
<path class="q1" d="M3392 3149l35 7 20-13-35-7z"/>
<path class="q1" d="M3481 3151l35 7 20-12-35-8z"/>
<path class="q1" d="M3247 3152l35 7 20-12-35-8z"/>
<path class="q1" d="M3337 3154l35 7 20-12-35-8z"/>
<path class="q1" d="M3427 3156l34 7 20-12-34-8z"/>
<path class="q1" d="M3516 3158l35 7 20-12-35-7z"/>
<path class="q1" d="M3282 3159l35 8 20-13-35-7z"/>
<path class="q1" d="M3372 3161l34 8 21-13-35-7z"/>
<path class="q1" d="M3461 3163l35 8 20-13-35-7z"/>
<path class="q1" d="M3317 3167l35 7 20-13-35-7z"/>
<path class="q1" d="M3406 3169l35 7 20-13-34-7z"/>
<path class="q1" d="M3496 3171l35 7 20-13-35-7z"/>
<path class="q1" d="M3352 3174l34 7 20-12-34-8z"/>
<path class="q1" d="M3441 3176l35 7 20-12-35-8z"/>
<path class="q1" d="M3386 3181l35 7 20-12-35-7z"/>
<path class="q1" d="M3476 3183l35 7 20-12-35-7z"/>
<path class="q1" d="M3421 3188l35 7 20-12-35-7z"/>
<path class="q1" d="M3456 3195l35 8 20-13-35-7z"/>
</g>
<g font-family="Liberation Sans, Arial, sans-serif" font-size="7" fill="#1a1a1a" stroke="#1a1a1a" stroke-width=".12">
<text x="172.7" y="302.9" text-anchor="end">-2</text>
<text x="172.7" y="288.5" text-anchor="end">-1.5</text>
<text x="172.7" y="274.1" text-anchor="end">-1</text>
<text x="172.7" y="259.7" text-anchor="end">-0.5</text>
<text x="172.7" y="245.3" text-anchor="end">0</text>
<text x="172.7" y="230.9" text-anchor="end">0.5</text>
<text x="172.7" y="216.5" text-anchor="end">1</text>
<text x="172.7" y="202.1" text-anchor="end">1.5</text>
<text x="172.7" y="187.7" text-anchor="end">2</text>
<text x="178.6" y="305.6" text-anchor="end">-4</text>
<text x="361.7" y="338.2" text-anchor="middle">-4</text>
<text x="200.3" y="309.8" text-anchor="end">-3</text>
<text x="374.3" y="330.9" text-anchor="middle">-3</text>
<text x="222.0" y="314.0" text-anchor="end">-2</text>
<text x="386.8" y="323.6" text-anchor="middle">-2</text>
<text x="243.8" y="318.3" text-anchor="end">-1</text>
<text x="399.4" y="316.2" text-anchor="middle">-1</text>
<text x="265.5" y="322.5" text-anchor="end">0</text>
<text x="411.9" y="308.9" text-anchor="middle">0</text>
<text x="287.2" y="326.7" text-anchor="end">1</text>
<text x="424.5" y="301.6" text-anchor="middle">1</text>
<text x="309.0" y="331.0" text-anchor="end">2</text>
<text x="437.0" y="294.3" text-anchor="middle">2</text>
<text x="330.7" y="335.2" text-anchor="end">3</text>
<text x="449.6" y="286.9" text-anchor="middle">3</text>
<text x="352.4" y="339.4" text-anchor="end">4</text>
<text x="462.1" y="279.6" text-anchor="middle">4</text>
<text x="147.9" y="245.1" text-anchor="middle">z</text>
<text x="245.8" y="331.7" text-anchor="middle">x</text>
<text x="438.6" y="313.6" text-anchor="middle">y</text>
<text x="417.7" y="123.3" font-size="7.25">atan(y<tspan font-size="5.9" dy="-3">3</tspan><tspan dy="3">/4-x</tspan><tspan font-size="5.9" dy="-3">2</tspan><tspan dy="3">)</tspan></text>
</g>
<path d="M467.3 196.6 467.3 205.6 469.4 203.8 470.9 207 472 206.5 470.6 203.4 473.4 203.1z" fill="#2b2b2b" stroke="#2b2b2b" stroke-width=".4"/>
</svg>
<div class="r" style="left:481.1px;top:57.5px;width:157.2px;height:351.3px;border:.9px solid #c6c8ca;box-sizing:border-box;background:#eff0f1"></div>
<div class="t" style="left:483.80px;top:60.40px;font-size:7.80px;letter-spacing:0.101px;color:#25282c;">Variable Manager</div>
<svg class="i" style="left:611px;top:59.6px" width="10" height="10" viewBox="0 0 10 10"><path d="M5 2.5 7.5 5 5 7.5 2.5 5z" fill="#fcfcfc" stroke="#7f8388" stroke-width=".8"/></svg>
<svg class="i" style="left:623.4px;top:58.6px" width="12" height="12" viewBox="0 0 12 12"><circle cx="6" cy="6" r="4.6" fill="#686c70"/><path d="M4.1 4.1 7.9 7.9M7.9 4.1 4.1 7.9" stroke="#eff0f1" stroke-width="1.05"/></svg>
<div class="r" style="left:486px;top:78.2px;width:147.4px;height:300.2px;border:.9px solid #c3c5c7;box-sizing:border-box;background:#fcfcfc"></div>
<div class="r" style="left:486.9px;top:79.1px;width:145.6px;height:16.2px;background:#eff0f1;border-bottom:.8px solid #d0d2d4"></div>
<div class="r" style="left:544.2px;top:79.1px;width:.8px;height:16.2px;background:#c9cbcd"></div>
<div class="r" style="left:632px;top:79.1px;width:.6px;height:16.2px;background:#c9cbcd"></div>
<div class="t" style="left:489.80px;top:82.40px;font-size:7.80px;letter-spacing:-0.169px;color:#25282c;">Name</div>
<div class="t" style="left:547.50px;top:82.40px;font-size:7.80px;letter-spacing:-0.168px;color:#25282c;">Value</div>
<div class="r btn" style="left:496.0px;top:383.3px"></div>
<div class="r btn" style="left:531.4px;top:383.3px"></div>
<div class="r btn" style="left:566.6px;top:383.3px"></div>
<div class="r btn" style="left:602.3px;top:383.3px"></div>
<svg class="i" style="left:502.00px;top:389.20px" width="8.8" height="8.8" viewBox="0 0 16 16"><path d="M.6 .6H10.4L15.4 5.6V10.2M10.6 15.4H.6V.6M10.4 .6V5.6H15.4" fill="none" stroke="#2a2d30" stroke-width="1.5"/><path d="M13.6 11.4V16M11.3 13.7H15.9" stroke="#2a2d30" stroke-width="1.3"/></svg>
<svg class="i" style="left:537.30px;top:389.20px" width="8.8" height="8.8" viewBox="0 0 16 16"><path d="M.6 .6V15.4H15.4V3.4" fill="none" stroke="#2a2d30" stroke-width="1.5"/><path d="M0 0H6.4L8.4 2.6H16V5.2H7.6L5.6 7H0z" fill="#2a2d30"/><path d="M.6 7H5.8L7.8 5.2H15.4" fill="none" stroke="#2a2d30" stroke-width=".9"/></svg>
<svg class="i" style="left:572.60px;top:389.20px" width="8.8" height="8.8" viewBox="0 0 16 16"><path d="M.6 .6H12.2L15.4 3.8V15.4H.6z" fill="#8e9194" fill-opacity=".35" stroke="#2a2d30" stroke-width="1.5"/><path d="M4 .6H11.4V5.6H4z" fill="#2a2d30"/><path d="M8.6 1.6H10.2V4.6H8.6z" fill="#f4f5f5"/><path d="M3.6 9H12.4V15.4H3.6z" fill="#fafafa" stroke="#2a2d30" stroke-width="1.1"/></svg>
<svg class="i" style="left:605.6px;top:389.3px" width="14.8" height="9.4" viewBox="0 0 14.8 9.4"><path d="M.3 4.7 4.3 .2H14.6V9.2H4.3z" fill="#202428"/><path d="M7.2 2.7 11.2 6.7M11.2 2.7 7.2 6.7" stroke="#fcfcfc" stroke-width="1.3"/></svg>
<div class="r" style="left:638.6px;top:57px;width:16.4px;height:352px;background:#eeeff0"></div>
<div class="r" style="left:638.6px;top:175px;width:1.4px;height:234px;background:#dfe0e2"></div>
<div class="r" style="left:639.2px;top:57px;width:15.8px;height:45.4px;background:#c9cbcc"></div>
<div class="r" style="left:639.4px;top:102.4px;width:15.3px;height:72.8px;background:#f1f2f3;border:.8px solid #c4c6c8;box-sizing:border-box"></div>
<div class="t v" style="left:641px;top:71.1px;font-size:7.6px;letter-spacing:.12px;color:#25282c">Help</div>
<div class="t v" style="left:641px;top:107.9px;font-size:7.6px;letter-spacing:.18px;color:#25282c">Variable Manager</div>
<div class="t" style="left:100.40px;top:411.30px;font-size:7.80px;letter-spacing:-0.287px;color:#25282c;">Ready</div>
</body></html>
